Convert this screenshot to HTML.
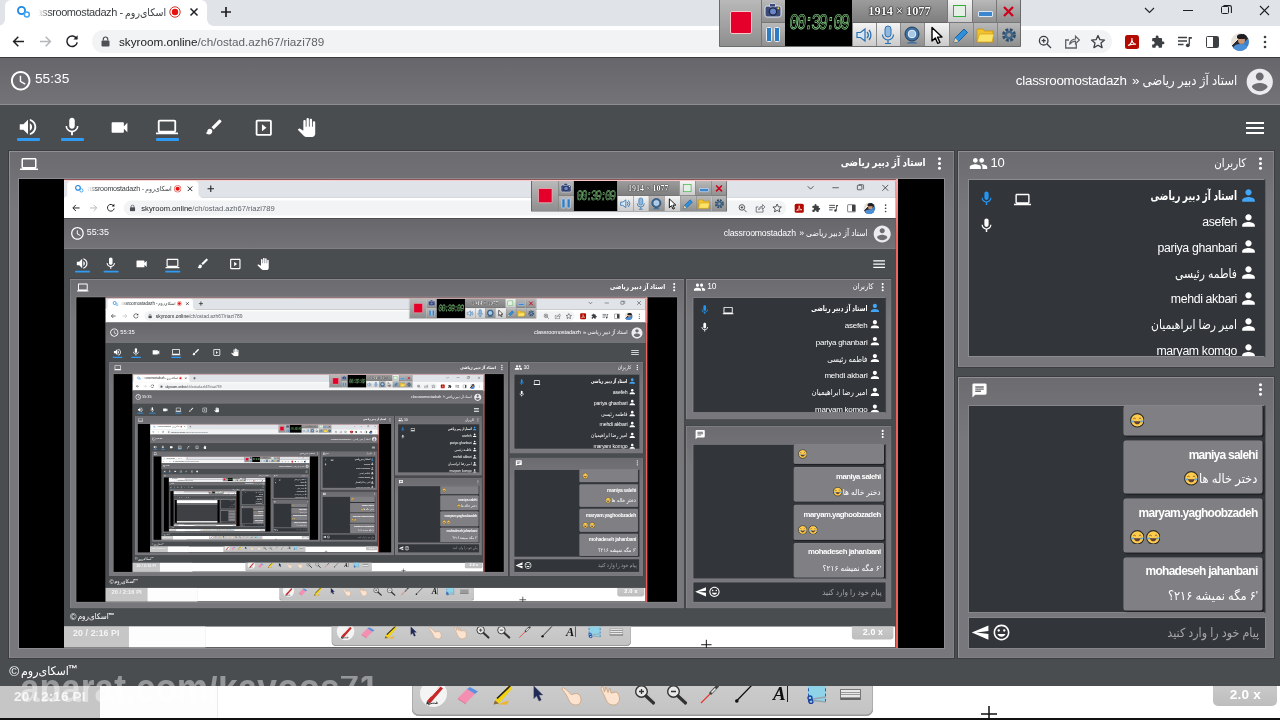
<!DOCTYPE html>
<html lang="fa"><head><meta charset="utf-8"><title>classroomostadazh - اسکای‌روم</title><style>
html,body{margin:0;padding:0;background:#4a4d50;overflow:hidden}
body{width:1280px;height:720px}
.f{position:relative;width:1280px;height:720px;overflow:hidden;background:#4a4d50;font-family:"Liberation Sans","DejaVu Sans",sans-serif}
.f{filter:blur(.3px)}
.n{filter:blur(.45px)}
.a{position:absolute;display:block}
.t{white-space:nowrap}
.fa{font-family:"Liberation Sans","DejaVu Sans",sans-serif}
</style></head><body><div class="f"><div class="a" style="left:0px;top:0px;width:1280px;height:26px;background:#e0e3e8"></div><div class="a" style="left:5px;top:0px;width:202px;height:27px;background:#fff;border-radius:6px 6px 0 0"></div><div class="a" style="left:-1px;top:20px;width:6px;height:6px;background:radial-gradient(circle at 0 0,rgba(255,255,255,0) 5.5px,#fff 6px)"></div><div class="a" style="left:207px;top:20px;width:6px;height:6px;background:radial-gradient(circle at 100% 0,rgba(255,255,255,0) 5.5px,#fff 6px)"></div><div class="a" style="left:0px;top:26px;width:1280px;height:31px;background:#fff"></div><div class="a" style="left:0px;top:57px;width:1280px;height:1.3px;background:#3a3a3e"></div><svg class="a" style="left:16px;top:5px" width="15" height="14" viewBox="0 0 15 14"><circle cx="5.5" cy="5.5" r="3.6" fill="none" stroke="#1e88e5" stroke-width="1.8"/><circle cx="10.8" cy="9.5" r="2.5" fill="#fff" stroke="#42a5f5" stroke-width="1.5"/></svg><div class="a" style="left:38px;top:2px;width:128px;height:20px;overflow:hidden"><div class="t" dir="ltr" style="position:absolute;right:-5px;top:0;line-height:20px;font-size:11px;color:#3c4043;white-space:nowrap;letter-spacing:-.42px">classroomostadazh - <span class="fa" style="display:inline-block;letter-spacing:0;font-size:10.5px;transform:scaleX(.9);transform-origin:left center">اسکای‌روم</span></div></div><div class="a" style="left:38px;top:2px;width:12px;height:20px;background:linear-gradient(90deg,#fff,rgba(255,255,255,0))"></div><svg class="a" style="left:169px;top:6px" width="12" height="12" viewBox="0 0 12 12"><circle cx="6" cy="6" r="5.2" fill="#fff" stroke="#d93025" stroke-width="1"/><circle cx="6" cy="6" r="3.2" fill="#e8110f"/></svg><svg class="a" style="left:189px;top:7px" width="10" height="10" viewBox="0 0 10 10"><path d="M1.5 1.5l7 7M8.5 1.5l-7 7" stroke="#202124" stroke-width="1.5" fill="none"/></svg><svg class="a" style="left:220px;top:6px" width="12" height="12" viewBox="0 0 12 12"><path d="M6 1v10M1 6h10" stroke="#202124" stroke-width="1.7" fill="none"/></svg><svg class="a" style="left:12px;top:35px" width="13" height="13" viewBox="0 0 13 13"><path d="M12 6.5H2M6.3 1.8L1.6 6.5l4.7 4.7" stroke="#202124" stroke-width="1.5" fill="none"/></svg><svg class="a" style="left:39px;top:35px" width="13" height="13" viewBox="0 0 13 13"><path d="M1 6.5h10M6.7 1.8l4.7 4.7-4.7 4.7" stroke="#b4b7bb" stroke-width="1.5" fill="none"/></svg><svg class="a" style="left:65px;top:34px" width="14" height="14" viewBox="0 0 14 14"><path d="M11.7 4.8A5.2 5.2 0 1 0 12.2 8.3" stroke="#202124" stroke-width="1.5" fill="none"/><path d="M12.6 1.2v4.2H8.4z" fill="#202124"/></svg><div class="a" style="left:92px;top:30px;width:1020px;height:23px;background:#f1f3f4;border-radius:12px"></div><svg class="a" style="left:101px;top:36px" width="9" height="11" viewBox="0 0 9 11"><rect x=".5" y="4.5" width="8" height="6" rx="1" fill="#4d5156"/><path d="M2.3 4.5V3.2a2.2 2.2 0 0 1 4.4 0v1.3" stroke="#4d5156" stroke-width="1.2" fill="none"/></svg><div class="a t" style="left:119px;top:31.5px;line-height:20px;font-size:11.7px;color:#5f6368;"><span style="color:#202124">skyroom.online</span>/ch/ostad.azh67/riazi789</div><svg class="a" style="left:1038px;top:35px" width="14" height="14" viewBox="0 0 14 14"><circle cx="5.7" cy="5.7" r="4.3" stroke="#3c4043" stroke-width="1.3" fill="none"/><path d="M9 9l4 4M3.7 5.7h4M5.7 3.7v4" stroke="#3c4043" stroke-width="1.3" fill="none"/></svg><svg class="a" style="left:1064px;top:34px" width="16" height="15" viewBox="0 0 16 15"><path d="M5 6H1.7v8h10.6V10" stroke="#5f6368" stroke-width="1.3" fill="none"/><path d="M5.5 10.5c.5-3.5 2.5-5.3 6-5.5V2.2L15.3 6l-3.8 3.8V7.2c-2.5 0-4.3 1-6 3.3z" stroke="#5f6368" stroke-width="1.2" fill="none"/></svg><svg class="a" style="left:1090px;top:34px" width="16" height="15" viewBox="0 0 16 15"><path d="M8 1.5l1.9 4.2 4.6.4-3.5 3 1.1 4.5L8 11.2l-4.1 2.4L5 9.1l-3.5-3 4.6-.4z" stroke="#3c4043" stroke-width="1.3" fill="none" stroke-linejoin="round"/></svg><div class="a" style="left:1125px;top:35px;width:14px;height:14px;background:#b30b00;border-radius:2.5px"><svg width="14" height="14" viewBox="0 0 14 14"><path d="M3 10.5c2.5-1 4.2-4 4-7.5-.6 3 1 6 4 6.3-2.5-.3-5.5.2-8 1.2z" stroke="#fff" stroke-width="1.1" fill="none"/></svg></div><svg class="a" style="left:1151px;top:35px" width="14" height="14" viewBox="0 0 24 24"><path fill="#3c4043" d="M20.5 11H19V7c0-1.1-.9-2-2-2h-4V3.5a2.5 2.5 0 0 0-5 0V5H4c-1.1 0-1.99.9-1.99 2v3.8H3.5c1.49 0 2.7 1.21 2.7 2.7s-1.21 2.7-2.7 2.7H2V20c0 1.1.9 2 2 2h3.8v-1.5c0-1.49 1.21-2.7 2.7-2.7 1.49 0 2.7 1.21 2.7 2.7V22H17c1.1 0 2-.9 2-2v-4h1.5a2.5 2.5 0 0 0 0-5z"/></svg><svg class="a" style="left:1177px;top:35px" width="15" height="14" viewBox="0 0 15 14"><path d="M1 2.5h9M1 6h9M1 9.5h5.5" stroke="#3c4043" stroke-width="1.4" fill="none"/><path d="M12.3 2v7.5" stroke="#3c4043" stroke-width="1.3"/><circle cx="10.8" cy="10.3" r="1.9" fill="#3c4043"/><path d="M12.3 2h2.5v1.8h-2.5z" fill="#3c4043"/></svg><div class="a" style="left:1205.5px;top:36px;width:13px;height:12px;border:1.5px solid #3c4043;border-radius:1.5px;box-sizing:border-box;background:linear-gradient(90deg,#fff 55%,#3c4043 55%)"></div><div class="a" style="left:1231px;top:33px;width:18px;height:18px;border-radius:50%;overflow:hidden;background:linear-gradient(135deg,#e8e4dc 0 38%,#2b2b33 38% 62%,#3f7fc8 62%)"><div style="position:absolute;left:6.5px;top:2.5px;width:7px;height:8px;border-radius:50%;background:#c99572"></div><div style="position:absolute;left:5.5px;top:1px;width:9px;height:5px;border-radius:50% 50% 30% 30%;background:#1d1d22"></div><div style="position:absolute;left:2px;top:11px;width:15px;height:9px;border-radius:50% 50% 0 0;background:#4a8fd6"></div></div><svg class="a" style="left:1263px;top:35px" width="4" height="14" viewBox="0 0 4 14"><circle cx="2" cy="2" r="1.3" fill="#3c4043"/><circle cx="2" cy="7" r="1.3" fill="#3c4043"/><circle cx="2" cy="12" r="1.3" fill="#3c4043"/></svg><svg class="a" style="left:1144px;top:7px" width="11" height="7" viewBox="0 0 11 7"><path d="M1 1l4.5 4.5L10 1" stroke="#202124" stroke-width="1.1" fill="none"/></svg><div class="a" style="left:1183px;top:10px;width:10px;height:1.2px;background:#202124"></div><div class="a" style="left:1221px;top:6px;width:8px;height:8px;border:1.1px solid #202124;border-radius:1.5px;box-sizing:border-box"></div><svg class="a" style="left:1222.5px;top:4.5px" width="9" height="9" viewBox="0 0 9 9"><path d="M.5.6h6.2a1.7 1.7 0 0 1 1.7 1.7V8" stroke="#202124" stroke-width="1.1" fill="none"/></svg><svg class="a" style="left:1259px;top:5px" width="11" height="11" viewBox="0 0 11 11"><path d="M1 1l9 9M10 1l-9 9" stroke="#202124" stroke-width="1.1" fill="none"/></svg><div class="a" style="left:0px;top:58px;width:1280px;height:46.5px;background:linear-gradient(#66666b,#737378)"></div><div class="a" style="left:0px;top:104px;width:1280px;height:1.2px;background:#8e8e92"></div><div class="a" style="left:0px;top:105px;width:1280px;height:581px;background:#4a4d50"></div><svg class="a" style="left:8.6px;top:68.6px" width="23.4" height="23.4" viewBox="0 0 24 24"><path fill="#fff" d="M11.99 2C6.47 2 2 6.48 2 12s4.47 10 9.99 10C17.52 22 22 17.52 22 12S17.52 2 11.99 2zM12 20c-4.42 0-8-3.58-8-8s3.58-8 8-8 8 3.58 8 8-3.58 8-8 8zm.5-13H11v6l5.25 3.15.75-1.23-4.5-2.67z"/></svg><div class="a t" style="left:35px;top:69.3px;line-height:20px;font-size:13.7px;color:#fff;letter-spacing:0">55:35</div><svg class="a" style="left:1244.15px;top:65.5px" width="31.5" height="31.5" viewBox="0 0 24 24"><path fill="#ececee" d="M12 2C6.48 2 2 6.48 2 12s4.48 10 10 10 10-4.48 10-10S17.52 2 12 2zm0 3c1.66 0 3 1.34 3 3s-1.34 3-3 3-3-1.34-3-3 1.34-3 3-3zm0 14.2c-2.5 0-4.71-1.28-6-3.22.03-1.99 4-3.08 6-3.08 1.99 0 5.97 1.09 6 3.08-1.29 1.94-3.5 3.22-6 3.22z"/></svg><div class="a t fa" dir="rtl" style="right:42.6px;top:70.8px;line-height:20px;font-size:13.4px;color:#fff;transform:scaleX(0.875);transform-origin:right center;">استاد آژ دبیر ریاضی</div><div class="a t" style="left:1132px;top:70.6px;line-height:20px;font-size:13.4px;color:#fff;">»</div><div class="a t" style="left:1015.8px;top:71px;line-height:20px;font-size:13.4px;color:#fff;letter-spacing:-.26px;">classroomostadazh</div><div class="a" style="left:-1px;top:20px;width:6px;height:6px;background:radial-gradient(circle at 0 0,rgba(255,255,255,0) 5.5px,#fff 6px)"></div><div class="a" style="left:207px;top:20px;width:6px;height:6px;background:radial-gradient(circle at 100% 0,rgba(255,255,255,0) 5.5px,#fff 6px)"></div><svg class="a" style="left:17px;top:116px" width="22" height="22" viewBox="0 0 24 24"><path fill="#fff" d="M3 9v6h4l5 5V4L7 9H3zm13.5 3c0-1.77-1.02-3.29-2.5-4.03v8.05c1.48-.73 2.5-2.25 2.5-4.02zM14 3.23v2.06c2.89.86 5 3.54 5 6.71s-2.11 5.85-5 6.71v2.06c4.01-.91 7-4.49 7-8.77s-2.99-7.86-7-8.77z"/></svg><svg class="a" style="left:61px;top:116px" width="22" height="22" viewBox="0 0 24 24"><path fill="#fff" d="M12 14c1.66 0 2.99-1.34 2.99-3L15 5c0-1.66-1.34-3-3-3S9 3.34 9 5v6c0 1.66 1.34 3 3 3zm5.3-3c0 3-2.54 5.1-5.3 5.1S6.7 14 6.7 11H5c0 3.41 2.72 6.23 6 6.72V21h2v-3.28c3.28-.48 6-3.3 6-6.72h-1.7z"/></svg><svg class="a" style="left:108.5px;top:116.5px" width="21" height="21" viewBox="0 0 24 24"><path fill="#fff" d="M17 10.5V7c0-.55-.45-1-1-1H4c-.55 0-1 .45-1 1v10c0 .55.45 1 1 1h12c.55 0 1-.45 1-1v-3.5l4 4v-11l-4 4z"/></svg><svg class="a" style="left:156px;top:116px" width="22" height="22" viewBox="0 0 24 24"><path fill="#fff" d="M20 18c1.1 0 1.99-.9 1.99-2L22 6c0-1.1-.9-2-2-2H4c-1.1 0-2 .9-2 2v10c0 1.1.9 2 2 2H0v2h24v-2h-4zM4 6h16v10H4V6z"/></svg><svg class="a" style="left:204px;top:117px" width="20" height="20" viewBox="0 0 24 24"><path fill="#fff" d="M7 14c-1.66 0-3 1.34-3 3 0 1.31-1.16 2-2 2 .92 1.22 2.49 2 4 2 2.21 0 4-1.79 4-4 0-1.66-1.34-3-3-3zm13.71-9.37l-1.34-1.34a.996.996 0 0 0-1.41 0L9 12.25 11.75 15l8.96-8.96a.996.996 0 0 0 0-1.41z"/></svg><svg class="a" style="left:252.55px;top:117.05px" width="21.5" height="21.5" viewBox="0 0 24 24"><path fill="#fff" d="M10 8v8l5-4-5-4zm9-5H5c-1.1 0-2 .9-2 2v14c0 1.1.9 2 2 2h14c1.1 0 2-.9 2-2V5c0-1.1-.9-2-2-2zm0 16H5V5h14v14z"/></svg><svg class="a" style="left:296.5px;top:117.8px" width="19" height="19" viewBox="0 0 24 24"><path fill="#fff" d="M23 5.5V20c0 2.2-1.8 4-4 4h-7.3c-1.08 0-2.1-.43-2.85-1.19L1 14.83s1.26-1.23 1.3-1.25c.22-.19.49-.29.79-.29.22 0 .42.06.6.16.04.01 4.31 2.46 4.31 2.46V4c0-.83.67-1.5 1.5-1.5S11 3.17 11 4v7h1V1.5c0-.83.67-1.5 1.5-1.5S15 .67 15 1.5V11h1V2.5c0-.83.67-1.5 1.5-1.5s1.5.67 1.5 1.5V11h1V5.5c0-.83.67-1.5 1.5-1.5s1.5.67 1.5 1.5z"/></svg><div class="a" style="left:17px;top:137.8px;width:22.5px;height:3.4px;background:#2f9bf4;border-radius:1px"></div><div class="a" style="left:61px;top:137.8px;width:22.5px;height:3.4px;background:#2f9bf4;border-radius:1px"></div><div class="a" style="left:156px;top:137.8px;width:22.5px;height:3.4px;background:#2f9bf4;border-radius:1px"></div><svg class="a" style="left:1243px;top:116px" width="24" height="24" viewBox="0 0 24 24"><path fill="#fff" d="M3 18h18v-2H3v2zm0-5h18v-2H3v2zm0-7v2h18V6H3z"/></svg><div class="a" style="left:9px;top:151px;width:945px;height:506.5px;background:linear-gradient(#6b6b70,#77777c 60px,#77777c);box-shadow:inset 1px 1px 0 #909094,inset -1px -1px 0 #808085,0 0 0 1px #3c3d40;box-sizing:border-box"></div><svg class="a" style="left:20px;top:154.5px" width="18" height="18" viewBox="0 0 24 24"><path fill="#fff" d="M20 18c1.1 0 1.99-.9 1.99-2L22 6c0-1.1-.9-2-2-2H4c-1.1 0-2 .9-2 2v10c0 1.1.9 2 2 2H0v2h24v-2h-4zM4 6h16v10H4V6z"/></svg><div class="a t fa" dir="rtl" style="right:354.4px;top:151.8px;line-height:20px;font-size:10.8px;color:#fff;transform:scaleX(0.82);transform-origin:right center;font-weight:bold;">استاد آژ دبیر ریاضی</div><svg class="a" style="left:930px;top:153.5px" width="19" height="19" viewBox="0 0 24 24"><path fill="#fff" d="M12 8c1.1 0 2-.9 2-2s-.9-2-2-2-2 .9-2 2 .9 2 2 2zm0 2c-1.1 0-2 .9-2 2s.9 2 2 2 2-.9 2-2-.9-2-2-2zm0 6c-1.1 0-2 .9-2 2s.9 2 2 2 2-.9 2-2-.9-2-2-2z"/></svg><div class="a" style="left:18px;top:178px;width:927px;height:471.3px;background:#8c8c90"></div><div class="a" style="left:19px;top:179px;width:925px;height:469.3px;background:#000;overflow:hidden"><div class="a" style="left:45px;top:0px;width:834px;height:470px;background:linear-gradient(#dee1e6 0 19.3px,#fff 19.3px 39.4px,#6d6d72 39.4px 70px,#4a4b4f 70px)"></div><div class="a" style="left:45px;top:2.4px;width:1280px;height:720px;transform:scale(0.6495);transform-origin:0 0"><div class="f n"><div class="a" style="left:0px;top:0px;width:1280px;height:26px;background:#e0e3e8"></div><div class="a" style="left:5px;top:0px;width:202px;height:27px;background:#fff;border-radius:6px 6px 0 0"></div><div class="a" style="left:-1px;top:20px;width:6px;height:6px;background:radial-gradient(circle at 0 0,rgba(255,255,255,0) 5.5px,#fff 6px)"></div><div class="a" style="left:207px;top:20px;width:6px;height:6px;background:radial-gradient(circle at 100% 0,rgba(255,255,255,0) 5.5px,#fff 6px)"></div><div class="a" style="left:0px;top:26px;width:1280px;height:31px;background:#fff"></div><div class="a" style="left:0px;top:57px;width:1280px;height:1.3px;background:#3a3a3e"></div><svg class="a" style="left:16px;top:5px" width="15" height="14" viewBox="0 0 15 14"><circle cx="5.5" cy="5.5" r="3.6" fill="none" stroke="#1e88e5" stroke-width="1.8"/><circle cx="10.8" cy="9.5" r="2.5" fill="#fff" stroke="#42a5f5" stroke-width="1.5"/></svg><div class="a" style="left:38px;top:2px;width:128px;height:20px;overflow:hidden"><div class="t" dir="ltr" style="position:absolute;right:-5px;top:0;line-height:20px;font-size:11px;color:#3c4043;white-space:nowrap;letter-spacing:-.42px">classroomostadazh - <span class="fa" style="display:inline-block;letter-spacing:0;font-size:10.5px;transform:scaleX(.9);transform-origin:left center">اسکای‌روم</span></div></div><div class="a" style="left:38px;top:2px;width:12px;height:20px;background:linear-gradient(90deg,#fff,rgba(255,255,255,0))"></div><svg class="a" style="left:169px;top:6px" width="12" height="12" viewBox="0 0 12 12"><circle cx="6" cy="6" r="5.2" fill="#fff" stroke="#d93025" stroke-width="1"/><circle cx="6" cy="6" r="3.2" fill="#e8110f"/></svg><svg class="a" style="left:189px;top:7px" width="10" height="10" viewBox="0 0 10 10"><path d="M1.5 1.5l7 7M8.5 1.5l-7 7" stroke="#202124" stroke-width="1.5" fill="none"/></svg><svg class="a" style="left:220px;top:6px" width="12" height="12" viewBox="0 0 12 12"><path d="M6 1v10M1 6h10" stroke="#202124" stroke-width="1.7" fill="none"/></svg><svg class="a" style="left:12px;top:35px" width="13" height="13" viewBox="0 0 13 13"><path d="M12 6.5H2M6.3 1.8L1.6 6.5l4.7 4.7" stroke="#202124" stroke-width="1.5" fill="none"/></svg><svg class="a" style="left:39px;top:35px" width="13" height="13" viewBox="0 0 13 13"><path d="M1 6.5h10M6.7 1.8l4.7 4.7-4.7 4.7" stroke="#b4b7bb" stroke-width="1.5" fill="none"/></svg><svg class="a" style="left:65px;top:34px" width="14" height="14" viewBox="0 0 14 14"><path d="M11.7 4.8A5.2 5.2 0 1 0 12.2 8.3" stroke="#202124" stroke-width="1.5" fill="none"/><path d="M12.6 1.2v4.2H8.4z" fill="#202124"/></svg><div class="a" style="left:92px;top:30px;width:1020px;height:23px;background:#f1f3f4;border-radius:12px"></div><svg class="a" style="left:101px;top:36px" width="9" height="11" viewBox="0 0 9 11"><rect x=".5" y="4.5" width="8" height="6" rx="1" fill="#4d5156"/><path d="M2.3 4.5V3.2a2.2 2.2 0 0 1 4.4 0v1.3" stroke="#4d5156" stroke-width="1.2" fill="none"/></svg><div class="a t" style="left:119px;top:31.5px;line-height:20px;font-size:11.7px;color:#5f6368;"><span style="color:#202124">skyroom.online</span>/ch/ostad.azh67/riazi789</div><svg class="a" style="left:1038px;top:35px" width="14" height="14" viewBox="0 0 14 14"><circle cx="5.7" cy="5.7" r="4.3" stroke="#3c4043" stroke-width="1.3" fill="none"/><path d="M9 9l4 4M3.7 5.7h4M5.7 3.7v4" stroke="#3c4043" stroke-width="1.3" fill="none"/></svg><svg class="a" style="left:1064px;top:34px" width="16" height="15" viewBox="0 0 16 15"><path d="M5 6H1.7v8h10.6V10" stroke="#5f6368" stroke-width="1.3" fill="none"/><path d="M5.5 10.5c.5-3.5 2.5-5.3 6-5.5V2.2L15.3 6l-3.8 3.8V7.2c-2.5 0-4.3 1-6 3.3z" stroke="#5f6368" stroke-width="1.2" fill="none"/></svg><svg class="a" style="left:1090px;top:34px" width="16" height="15" viewBox="0 0 16 15"><path d="M8 1.5l1.9 4.2 4.6.4-3.5 3 1.1 4.5L8 11.2l-4.1 2.4L5 9.1l-3.5-3 4.6-.4z" stroke="#3c4043" stroke-width="1.3" fill="none" stroke-linejoin="round"/></svg><div class="a" style="left:1125px;top:35px;width:14px;height:14px;background:#b30b00;border-radius:2.5px"><svg width="14" height="14" viewBox="0 0 14 14"><path d="M3 10.5c2.5-1 4.2-4 4-7.5-.6 3 1 6 4 6.3-2.5-.3-5.5.2-8 1.2z" stroke="#fff" stroke-width="1.1" fill="none"/></svg></div><svg class="a" style="left:1151px;top:35px" width="14" height="14" viewBox="0 0 24 24"><path fill="#3c4043" d="M20.5 11H19V7c0-1.1-.9-2-2-2h-4V3.5a2.5 2.5 0 0 0-5 0V5H4c-1.1 0-1.99.9-1.99 2v3.8H3.5c1.49 0 2.7 1.21 2.7 2.7s-1.21 2.7-2.7 2.7H2V20c0 1.1.9 2 2 2h3.8v-1.5c0-1.49 1.21-2.7 2.7-2.7 1.49 0 2.7 1.21 2.7 2.7V22H17c1.1 0 2-.9 2-2v-4h1.5a2.5 2.5 0 0 0 0-5z"/></svg><svg class="a" style="left:1177px;top:35px" width="15" height="14" viewBox="0 0 15 14"><path d="M1 2.5h9M1 6h9M1 9.5h5.5" stroke="#3c4043" stroke-width="1.4" fill="none"/><path d="M12.3 2v7.5" stroke="#3c4043" stroke-width="1.3"/><circle cx="10.8" cy="10.3" r="1.9" fill="#3c4043"/><path d="M12.3 2h2.5v1.8h-2.5z" fill="#3c4043"/></svg><div class="a" style="left:1205.5px;top:36px;width:13px;height:12px;border:1.5px solid #3c4043;border-radius:1.5px;box-sizing:border-box;background:linear-gradient(90deg,#fff 55%,#3c4043 55%)"></div><div class="a" style="left:1231px;top:33px;width:18px;height:18px;border-radius:50%;overflow:hidden;background:linear-gradient(135deg,#e8e4dc 0 38%,#2b2b33 38% 62%,#3f7fc8 62%)"><div style="position:absolute;left:6.5px;top:2.5px;width:7px;height:8px;border-radius:50%;background:#c99572"></div><div style="position:absolute;left:5.5px;top:1px;width:9px;height:5px;border-radius:50% 50% 30% 30%;background:#1d1d22"></div><div style="position:absolute;left:2px;top:11px;width:15px;height:9px;border-radius:50% 50% 0 0;background:#4a8fd6"></div></div><svg class="a" style="left:1263px;top:35px" width="4" height="14" viewBox="0 0 4 14"><circle cx="2" cy="2" r="1.3" fill="#3c4043"/><circle cx="2" cy="7" r="1.3" fill="#3c4043"/><circle cx="2" cy="12" r="1.3" fill="#3c4043"/></svg><svg class="a" style="left:1144px;top:7px" width="11" height="7" viewBox="0 0 11 7"><path d="M1 1l4.5 4.5L10 1" stroke="#202124" stroke-width="1.1" fill="none"/></svg><div class="a" style="left:1183px;top:10px;width:10px;height:1.2px;background:#202124"></div><div class="a" style="left:1221px;top:6px;width:8px;height:8px;border:1.1px solid #202124;border-radius:1.5px;box-sizing:border-box"></div><svg class="a" style="left:1222.5px;top:4.5px" width="9" height="9" viewBox="0 0 9 9"><path d="M.5.6h6.2a1.7 1.7 0 0 1 1.7 1.7V8" stroke="#202124" stroke-width="1.1" fill="none"/></svg><svg class="a" style="left:1259px;top:5px" width="11" height="11" viewBox="0 0 11 11"><path d="M1 1l9 9M10 1l-9 9" stroke="#202124" stroke-width="1.1" fill="none"/></svg><div class="a" style="left:0px;top:58px;width:1280px;height:46.5px;background:linear-gradient(#66666b,#737378)"></div><div class="a" style="left:0px;top:104px;width:1280px;height:1.2px;background:#8e8e92"></div><div class="a" style="left:0px;top:105px;width:1280px;height:581px;background:#4a4d50"></div><svg class="a" style="left:8.6px;top:68.6px" width="23.4" height="23.4" viewBox="0 0 24 24"><path fill="#fff" d="M11.99 2C6.47 2 2 6.48 2 12s4.47 10 9.99 10C17.52 22 22 17.52 22 12S17.52 2 11.99 2zM12 20c-4.42 0-8-3.58-8-8s3.58-8 8-8 8 3.58 8 8-3.58 8-8 8zm.5-13H11v6l5.25 3.15.75-1.23-4.5-2.67z"/></svg><div class="a t" style="left:35px;top:69.3px;line-height:20px;font-size:13.7px;color:#fff;letter-spacing:0">55:35</div><svg class="a" style="left:1244.15px;top:65.5px" width="31.5" height="31.5" viewBox="0 0 24 24"><path fill="#ececee" d="M12 2C6.48 2 2 6.48 2 12s4.48 10 10 10 10-4.48 10-10S17.52 2 12 2zm0 3c1.66 0 3 1.34 3 3s-1.34 3-3 3-3-1.34-3-3 1.34-3 3-3zm0 14.2c-2.5 0-4.71-1.28-6-3.22.03-1.99 4-3.08 6-3.08 1.99 0 5.97 1.09 6 3.08-1.29 1.94-3.5 3.22-6 3.22z"/></svg><div class="a t fa" dir="rtl" style="right:42.6px;top:70.8px;line-height:20px;font-size:13.4px;color:#fff;transform:scaleX(0.875);transform-origin:right center;">استاد آژ دبیر ریاضی</div><div class="a t" style="left:1132px;top:70.6px;line-height:20px;font-size:13.4px;color:#fff;">»</div><div class="a t" style="left:1015.8px;top:71px;line-height:20px;font-size:13.4px;color:#fff;letter-spacing:-.26px;">classroomostadazh</div><div class="a" style="left:-1px;top:20px;width:6px;height:6px;background:radial-gradient(circle at 0 0,rgba(255,255,255,0) 5.5px,#fff 6px)"></div><div class="a" style="left:207px;top:20px;width:6px;height:6px;background:radial-gradient(circle at 100% 0,rgba(255,255,255,0) 5.5px,#fff 6px)"></div><svg class="a" style="left:17px;top:116px" width="22" height="22" viewBox="0 0 24 24"><path fill="#fff" d="M3 9v6h4l5 5V4L7 9H3zm13.5 3c0-1.77-1.02-3.29-2.5-4.03v8.05c1.48-.73 2.5-2.25 2.5-4.02zM14 3.23v2.06c2.89.86 5 3.54 5 6.71s-2.11 5.85-5 6.71v2.06c4.01-.91 7-4.49 7-8.77s-2.99-7.86-7-8.77z"/></svg><svg class="a" style="left:61px;top:116px" width="22" height="22" viewBox="0 0 24 24"><path fill="#fff" d="M12 14c1.66 0 2.99-1.34 2.99-3L15 5c0-1.66-1.34-3-3-3S9 3.34 9 5v6c0 1.66 1.34 3 3 3zm5.3-3c0 3-2.54 5.1-5.3 5.1S6.7 14 6.7 11H5c0 3.41 2.72 6.23 6 6.72V21h2v-3.28c3.28-.48 6-3.3 6-6.72h-1.7z"/></svg><svg class="a" style="left:108.5px;top:116.5px" width="21" height="21" viewBox="0 0 24 24"><path fill="#fff" d="M17 10.5V7c0-.55-.45-1-1-1H4c-.55 0-1 .45-1 1v10c0 .55.45 1 1 1h12c.55 0 1-.45 1-1v-3.5l4 4v-11l-4 4z"/></svg><svg class="a" style="left:156px;top:116px" width="22" height="22" viewBox="0 0 24 24"><path fill="#fff" d="M20 18c1.1 0 1.99-.9 1.99-2L22 6c0-1.1-.9-2-2-2H4c-1.1 0-2 .9-2 2v10c0 1.1.9 2 2 2H0v2h24v-2h-4zM4 6h16v10H4V6z"/></svg><svg class="a" style="left:204px;top:117px" width="20" height="20" viewBox="0 0 24 24"><path fill="#fff" d="M7 14c-1.66 0-3 1.34-3 3 0 1.31-1.16 2-2 2 .92 1.22 2.49 2 4 2 2.21 0 4-1.79 4-4 0-1.66-1.34-3-3-3zm13.71-9.37l-1.34-1.34a.996.996 0 0 0-1.41 0L9 12.25 11.75 15l8.96-8.96a.996.996 0 0 0 0-1.41z"/></svg><svg class="a" style="left:252.55px;top:117.05px" width="21.5" height="21.5" viewBox="0 0 24 24"><path fill="#fff" d="M10 8v8l5-4-5-4zm9-5H5c-1.1 0-2 .9-2 2v14c0 1.1.9 2 2 2h14c1.1 0 2-.9 2-2V5c0-1.1-.9-2-2-2zm0 16H5V5h14v14z"/></svg><svg class="a" style="left:296.5px;top:117.8px" width="19" height="19" viewBox="0 0 24 24"><path fill="#fff" d="M23 5.5V20c0 2.2-1.8 4-4 4h-7.3c-1.08 0-2.1-.43-2.85-1.19L1 14.83s1.26-1.23 1.3-1.25c.22-.19.49-.29.79-.29.22 0 .42.06.6.16.04.01 4.31 2.46 4.31 2.46V4c0-.83.67-1.5 1.5-1.5S11 3.17 11 4v7h1V1.5c0-.83.67-1.5 1.5-1.5S15 .67 15 1.5V11h1V2.5c0-.83.67-1.5 1.5-1.5s1.5.67 1.5 1.5V11h1V5.5c0-.83.67-1.5 1.5-1.5s1.5.67 1.5 1.5z"/></svg><div class="a" style="left:17px;top:137.8px;width:22.5px;height:3.4px;background:#2f9bf4;border-radius:1px"></div><div class="a" style="left:61px;top:137.8px;width:22.5px;height:3.4px;background:#2f9bf4;border-radius:1px"></div><div class="a" style="left:156px;top:137.8px;width:22.5px;height:3.4px;background:#2f9bf4;border-radius:1px"></div><svg class="a" style="left:1243px;top:116px" width="24" height="24" viewBox="0 0 24 24"><path fill="#fff" d="M3 18h18v-2H3v2zm0-5h18v-2H3v2zm0-7v2h18V6H3z"/></svg><div class="a" style="left:9px;top:151px;width:945px;height:506.5px;background:linear-gradient(#6b6b70,#77777c 60px,#77777c);box-shadow:inset 1px 1px 0 #909094,inset -1px -1px 0 #808085,0 0 0 1px #3c3d40;box-sizing:border-box"></div><svg class="a" style="left:20px;top:154.5px" width="18" height="18" viewBox="0 0 24 24"><path fill="#fff" d="M20 18c1.1 0 1.99-.9 1.99-2L22 6c0-1.1-.9-2-2-2H4c-1.1 0-2 .9-2 2v10c0 1.1.9 2 2 2H0v2h24v-2h-4zM4 6h16v10H4V6z"/></svg><div class="a t fa" dir="rtl" style="right:354.4px;top:151.8px;line-height:20px;font-size:10.8px;color:#fff;transform:scaleX(0.82);transform-origin:right center;font-weight:bold;">استاد آژ دبیر ریاضی</div><svg class="a" style="left:930px;top:153.5px" width="19" height="19" viewBox="0 0 24 24"><path fill="#fff" d="M12 8c1.1 0 2-.9 2-2s-.9-2-2-2-2 .9-2 2 .9 2 2 2zm0 2c-1.1 0-2 .9-2 2s.9 2 2 2 2-.9 2-2-.9-2-2-2zm0 6c-1.1 0-2 .9-2 2s.9 2 2 2 2-.9 2-2-.9-2-2-2z"/></svg><div class="a" style="left:18px;top:178px;width:927px;height:471.3px;background:#8c8c90"></div><div class="a" style="left:19px;top:179px;width:925px;height:469.3px;background:#000;overflow:hidden"><div class="a" style="left:45px;top:0px;width:834px;height:470px;background:linear-gradient(#dee1e6 0 19.3px,#fff 19.3px 39.4px,#6d6d72 39.4px 70px,#4a4b4f 70px)"></div><div class="a" style="left:45px;top:2.4px;width:1280px;height:720px;transform:scale(0.6495);transform-origin:0 0"><div class="f n"><div class="a" style="left:0px;top:0px;width:1280px;height:26px;background:#e0e3e8"></div><div class="a" style="left:5px;top:0px;width:202px;height:27px;background:#fff;border-radius:6px 6px 0 0"></div><div class="a" style="left:-1px;top:20px;width:6px;height:6px;background:radial-gradient(circle at 0 0,rgba(255,255,255,0) 5.5px,#fff 6px)"></div><div class="a" style="left:207px;top:20px;width:6px;height:6px;background:radial-gradient(circle at 100% 0,rgba(255,255,255,0) 5.5px,#fff 6px)"></div><div class="a" style="left:0px;top:26px;width:1280px;height:31px;background:#fff"></div><div class="a" style="left:0px;top:57px;width:1280px;height:1.3px;background:#3a3a3e"></div><svg class="a" style="left:16px;top:5px" width="15" height="14" viewBox="0 0 15 14"><circle cx="5.5" cy="5.5" r="3.6" fill="none" stroke="#1e88e5" stroke-width="1.8"/><circle cx="10.8" cy="9.5" r="2.5" fill="#fff" stroke="#42a5f5" stroke-width="1.5"/></svg><div class="a" style="left:38px;top:2px;width:128px;height:20px;overflow:hidden"><div class="t" dir="ltr" style="position:absolute;right:-5px;top:0;line-height:20px;font-size:11px;color:#3c4043;white-space:nowrap;letter-spacing:-.42px">classroomostadazh - <span class="fa" style="display:inline-block;letter-spacing:0;font-size:10.5px;transform:scaleX(.9);transform-origin:left center">اسکای‌روم</span></div></div><div class="a" style="left:38px;top:2px;width:12px;height:20px;background:linear-gradient(90deg,#fff,rgba(255,255,255,0))"></div><svg class="a" style="left:169px;top:6px" width="12" height="12" viewBox="0 0 12 12"><circle cx="6" cy="6" r="5.2" fill="#fff" stroke="#d93025" stroke-width="1"/><circle cx="6" cy="6" r="3.2" fill="#e8110f"/></svg><svg class="a" style="left:189px;top:7px" width="10" height="10" viewBox="0 0 10 10"><path d="M1.5 1.5l7 7M8.5 1.5l-7 7" stroke="#202124" stroke-width="1.5" fill="none"/></svg><svg class="a" style="left:220px;top:6px" width="12" height="12" viewBox="0 0 12 12"><path d="M6 1v10M1 6h10" stroke="#202124" stroke-width="1.7" fill="none"/></svg><svg class="a" style="left:12px;top:35px" width="13" height="13" viewBox="0 0 13 13"><path d="M12 6.5H2M6.3 1.8L1.6 6.5l4.7 4.7" stroke="#202124" stroke-width="1.5" fill="none"/></svg><svg class="a" style="left:39px;top:35px" width="13" height="13" viewBox="0 0 13 13"><path d="M1 6.5h10M6.7 1.8l4.7 4.7-4.7 4.7" stroke="#b4b7bb" stroke-width="1.5" fill="none"/></svg><svg class="a" style="left:65px;top:34px" width="14" height="14" viewBox="0 0 14 14"><path d="M11.7 4.8A5.2 5.2 0 1 0 12.2 8.3" stroke="#202124" stroke-width="1.5" fill="none"/><path d="M12.6 1.2v4.2H8.4z" fill="#202124"/></svg><div class="a" style="left:92px;top:30px;width:1020px;height:23px;background:#f1f3f4;border-radius:12px"></div><svg class="a" style="left:101px;top:36px" width="9" height="11" viewBox="0 0 9 11"><rect x=".5" y="4.5" width="8" height="6" rx="1" fill="#4d5156"/><path d="M2.3 4.5V3.2a2.2 2.2 0 0 1 4.4 0v1.3" stroke="#4d5156" stroke-width="1.2" fill="none"/></svg><div class="a t" style="left:119px;top:31.5px;line-height:20px;font-size:11.7px;color:#5f6368;"><span style="color:#202124">skyroom.online</span>/ch/ostad.azh67/riazi789</div><svg class="a" style="left:1038px;top:35px" width="14" height="14" viewBox="0 0 14 14"><circle cx="5.7" cy="5.7" r="4.3" stroke="#3c4043" stroke-width="1.3" fill="none"/><path d="M9 9l4 4M3.7 5.7h4M5.7 3.7v4" stroke="#3c4043" stroke-width="1.3" fill="none"/></svg><svg class="a" style="left:1064px;top:34px" width="16" height="15" viewBox="0 0 16 15"><path d="M5 6H1.7v8h10.6V10" stroke="#5f6368" stroke-width="1.3" fill="none"/><path d="M5.5 10.5c.5-3.5 2.5-5.3 6-5.5V2.2L15.3 6l-3.8 3.8V7.2c-2.5 0-4.3 1-6 3.3z" stroke="#5f6368" stroke-width="1.2" fill="none"/></svg><svg class="a" style="left:1090px;top:34px" width="16" height="15" viewBox="0 0 16 15"><path d="M8 1.5l1.9 4.2 4.6.4-3.5 3 1.1 4.5L8 11.2l-4.1 2.4L5 9.1l-3.5-3 4.6-.4z" stroke="#3c4043" stroke-width="1.3" fill="none" stroke-linejoin="round"/></svg><div class="a" style="left:1125px;top:35px;width:14px;height:14px;background:#b30b00;border-radius:2.5px"><svg width="14" height="14" viewBox="0 0 14 14"><path d="M3 10.5c2.5-1 4.2-4 4-7.5-.6 3 1 6 4 6.3-2.5-.3-5.5.2-8 1.2z" stroke="#fff" stroke-width="1.1" fill="none"/></svg></div><svg class="a" style="left:1151px;top:35px" width="14" height="14" viewBox="0 0 24 24"><path fill="#3c4043" d="M20.5 11H19V7c0-1.1-.9-2-2-2h-4V3.5a2.5 2.5 0 0 0-5 0V5H4c-1.1 0-1.99.9-1.99 2v3.8H3.5c1.49 0 2.7 1.21 2.7 2.7s-1.21 2.7-2.7 2.7H2V20c0 1.1.9 2 2 2h3.8v-1.5c0-1.49 1.21-2.7 2.7-2.7 1.49 0 2.7 1.21 2.7 2.7V22H17c1.1 0 2-.9 2-2v-4h1.5a2.5 2.5 0 0 0 0-5z"/></svg><svg class="a" style="left:1177px;top:35px" width="15" height="14" viewBox="0 0 15 14"><path d="M1 2.5h9M1 6h9M1 9.5h5.5" stroke="#3c4043" stroke-width="1.4" fill="none"/><path d="M12.3 2v7.5" stroke="#3c4043" stroke-width="1.3"/><circle cx="10.8" cy="10.3" r="1.9" fill="#3c4043"/><path d="M12.3 2h2.5v1.8h-2.5z" fill="#3c4043"/></svg><div class="a" style="left:1205.5px;top:36px;width:13px;height:12px;border:1.5px solid #3c4043;border-radius:1.5px;box-sizing:border-box;background:linear-gradient(90deg,#fff 55%,#3c4043 55%)"></div><div class="a" style="left:1231px;top:33px;width:18px;height:18px;border-radius:50%;overflow:hidden;background:linear-gradient(135deg,#e8e4dc 0 38%,#2b2b33 38% 62%,#3f7fc8 62%)"><div style="position:absolute;left:6.5px;top:2.5px;width:7px;height:8px;border-radius:50%;background:#c99572"></div><div style="position:absolute;left:5.5px;top:1px;width:9px;height:5px;border-radius:50% 50% 30% 30%;background:#1d1d22"></div><div style="position:absolute;left:2px;top:11px;width:15px;height:9px;border-radius:50% 50% 0 0;background:#4a8fd6"></div></div><svg class="a" style="left:1263px;top:35px" width="4" height="14" viewBox="0 0 4 14"><circle cx="2" cy="2" r="1.3" fill="#3c4043"/><circle cx="2" cy="7" r="1.3" fill="#3c4043"/><circle cx="2" cy="12" r="1.3" fill="#3c4043"/></svg><svg class="a" style="left:1144px;top:7px" width="11" height="7" viewBox="0 0 11 7"><path d="M1 1l4.5 4.5L10 1" stroke="#202124" stroke-width="1.1" fill="none"/></svg><div class="a" style="left:1183px;top:10px;width:10px;height:1.2px;background:#202124"></div><div class="a" style="left:1221px;top:6px;width:8px;height:8px;border:1.1px solid #202124;border-radius:1.5px;box-sizing:border-box"></div><svg class="a" style="left:1222.5px;top:4.5px" width="9" height="9" viewBox="0 0 9 9"><path d="M.5.6h6.2a1.7 1.7 0 0 1 1.7 1.7V8" stroke="#202124" stroke-width="1.1" fill="none"/></svg><svg class="a" style="left:1259px;top:5px" width="11" height="11" viewBox="0 0 11 11"><path d="M1 1l9 9M10 1l-9 9" stroke="#202124" stroke-width="1.1" fill="none"/></svg><div class="a" style="left:0px;top:58px;width:1280px;height:46.5px;background:linear-gradient(#66666b,#737378)"></div><div class="a" style="left:0px;top:104px;width:1280px;height:1.2px;background:#8e8e92"></div><div class="a" style="left:0px;top:105px;width:1280px;height:581px;background:#4a4d50"></div><svg class="a" style="left:8.6px;top:68.6px" width="23.4" height="23.4" viewBox="0 0 24 24"><path fill="#fff" d="M11.99 2C6.47 2 2 6.48 2 12s4.47 10 9.99 10C17.52 22 22 17.52 22 12S17.52 2 11.99 2zM12 20c-4.42 0-8-3.58-8-8s3.58-8 8-8 8 3.58 8 8-3.58 8-8 8zm.5-13H11v6l5.25 3.15.75-1.23-4.5-2.67z"/></svg><div class="a t" style="left:35px;top:69.3px;line-height:20px;font-size:13.7px;color:#fff;letter-spacing:0">55:35</div><svg class="a" style="left:1244.15px;top:65.5px" width="31.5" height="31.5" viewBox="0 0 24 24"><path fill="#ececee" d="M12 2C6.48 2 2 6.48 2 12s4.48 10 10 10 10-4.48 10-10S17.52 2 12 2zm0 3c1.66 0 3 1.34 3 3s-1.34 3-3 3-3-1.34-3-3 1.34-3 3-3zm0 14.2c-2.5 0-4.71-1.28-6-3.22.03-1.99 4-3.08 6-3.08 1.99 0 5.97 1.09 6 3.08-1.29 1.94-3.5 3.22-6 3.22z"/></svg><div class="a t fa" dir="rtl" style="right:42.6px;top:70.8px;line-height:20px;font-size:13.4px;color:#fff;transform:scaleX(0.875);transform-origin:right center;">استاد آژ دبیر ریاضی</div><div class="a t" style="left:1132px;top:70.6px;line-height:20px;font-size:13.4px;color:#fff;">»</div><div class="a t" style="left:1015.8px;top:71px;line-height:20px;font-size:13.4px;color:#fff;letter-spacing:-.26px;">classroomostadazh</div><div class="a" style="left:-1px;top:20px;width:6px;height:6px;background:radial-gradient(circle at 0 0,rgba(255,255,255,0) 5.5px,#fff 6px)"></div><div class="a" style="left:207px;top:20px;width:6px;height:6px;background:radial-gradient(circle at 100% 0,rgba(255,255,255,0) 5.5px,#fff 6px)"></div><svg class="a" style="left:17px;top:116px" width="22" height="22" viewBox="0 0 24 24"><path fill="#fff" d="M3 9v6h4l5 5V4L7 9H3zm13.5 3c0-1.77-1.02-3.29-2.5-4.03v8.05c1.48-.73 2.5-2.25 2.5-4.02zM14 3.23v2.06c2.89.86 5 3.54 5 6.71s-2.11 5.85-5 6.71v2.06c4.01-.91 7-4.49 7-8.77s-2.99-7.86-7-8.77z"/></svg><svg class="a" style="left:61px;top:116px" width="22" height="22" viewBox="0 0 24 24"><path fill="#fff" d="M12 14c1.66 0 2.99-1.34 2.99-3L15 5c0-1.66-1.34-3-3-3S9 3.34 9 5v6c0 1.66 1.34 3 3 3zm5.3-3c0 3-2.54 5.1-5.3 5.1S6.7 14 6.7 11H5c0 3.41 2.72 6.23 6 6.72V21h2v-3.28c3.28-.48 6-3.3 6-6.72h-1.7z"/></svg><svg class="a" style="left:108.5px;top:116.5px" width="21" height="21" viewBox="0 0 24 24"><path fill="#fff" d="M17 10.5V7c0-.55-.45-1-1-1H4c-.55 0-1 .45-1 1v10c0 .55.45 1 1 1h12c.55 0 1-.45 1-1v-3.5l4 4v-11l-4 4z"/></svg><svg class="a" style="left:156px;top:116px" width="22" height="22" viewBox="0 0 24 24"><path fill="#fff" d="M20 18c1.1 0 1.99-.9 1.99-2L22 6c0-1.1-.9-2-2-2H4c-1.1 0-2 .9-2 2v10c0 1.1.9 2 2 2H0v2h24v-2h-4zM4 6h16v10H4V6z"/></svg><svg class="a" style="left:204px;top:117px" width="20" height="20" viewBox="0 0 24 24"><path fill="#fff" d="M7 14c-1.66 0-3 1.34-3 3 0 1.31-1.16 2-2 2 .92 1.22 2.49 2 4 2 2.21 0 4-1.79 4-4 0-1.66-1.34-3-3-3zm13.71-9.37l-1.34-1.34a.996.996 0 0 0-1.41 0L9 12.25 11.75 15l8.96-8.96a.996.996 0 0 0 0-1.41z"/></svg><svg class="a" style="left:252.55px;top:117.05px" width="21.5" height="21.5" viewBox="0 0 24 24"><path fill="#fff" d="M10 8v8l5-4-5-4zm9-5H5c-1.1 0-2 .9-2 2v14c0 1.1.9 2 2 2h14c1.1 0 2-.9 2-2V5c0-1.1-.9-2-2-2zm0 16H5V5h14v14z"/></svg><svg class="a" style="left:296.5px;top:117.8px" width="19" height="19" viewBox="0 0 24 24"><path fill="#fff" d="M23 5.5V20c0 2.2-1.8 4-4 4h-7.3c-1.08 0-2.1-.43-2.85-1.19L1 14.83s1.26-1.23 1.3-1.25c.22-.19.49-.29.79-.29.22 0 .42.06.6.16.04.01 4.31 2.46 4.31 2.46V4c0-.83.67-1.5 1.5-1.5S11 3.17 11 4v7h1V1.5c0-.83.67-1.5 1.5-1.5S15 .67 15 1.5V11h1V2.5c0-.83.67-1.5 1.5-1.5s1.5.67 1.5 1.5V11h1V5.5c0-.83.67-1.5 1.5-1.5s1.5.67 1.5 1.5z"/></svg><div class="a" style="left:17px;top:137.8px;width:22.5px;height:3.4px;background:#2f9bf4;border-radius:1px"></div><div class="a" style="left:61px;top:137.8px;width:22.5px;height:3.4px;background:#2f9bf4;border-radius:1px"></div><div class="a" style="left:156px;top:137.8px;width:22.5px;height:3.4px;background:#2f9bf4;border-radius:1px"></div><svg class="a" style="left:1243px;top:116px" width="24" height="24" viewBox="0 0 24 24"><path fill="#fff" d="M3 18h18v-2H3v2zm0-5h18v-2H3v2zm0-7v2h18V6H3z"/></svg><div class="a" style="left:9px;top:151px;width:945px;height:506.5px;background:linear-gradient(#6b6b70,#77777c 60px,#77777c);box-shadow:inset 1px 1px 0 #909094,inset -1px -1px 0 #808085,0 0 0 1px #3c3d40;box-sizing:border-box"></div><svg class="a" style="left:20px;top:154.5px" width="18" height="18" viewBox="0 0 24 24"><path fill="#fff" d="M20 18c1.1 0 1.99-.9 1.99-2L22 6c0-1.1-.9-2-2-2H4c-1.1 0-2 .9-2 2v10c0 1.1.9 2 2 2H0v2h24v-2h-4zM4 6h16v10H4V6z"/></svg><div class="a t fa" dir="rtl" style="right:354.4px;top:151.8px;line-height:20px;font-size:10.8px;color:#fff;transform:scaleX(0.82);transform-origin:right center;font-weight:bold;">استاد آژ دبیر ریاضی</div><svg class="a" style="left:930px;top:153.5px" width="19" height="19" viewBox="0 0 24 24"><path fill="#fff" d="M12 8c1.1 0 2-.9 2-2s-.9-2-2-2-2 .9-2 2 .9 2 2 2zm0 2c-1.1 0-2 .9-2 2s.9 2 2 2 2-.9 2-2-.9-2-2-2zm0 6c-1.1 0-2 .9-2 2s.9 2 2 2 2-.9 2-2-.9-2-2-2z"/></svg><div class="a" style="left:18px;top:178px;width:927px;height:471.3px;background:#8c8c90"></div><div class="a" style="left:19px;top:179px;width:925px;height:469.3px;background:#000;overflow:hidden"><div class="a" style="left:45px;top:0px;width:834px;height:470px;background:linear-gradient(#dee1e6 0 19.3px,#fff 19.3px 39.4px,#6d6d72 39.4px 70px,#4a4b4f 70px)"></div><div class="a" style="left:45px;top:2.4px;width:1280px;height:720px;transform:scale(0.6495);transform-origin:0 0"><div class="f n"><div class="a" style="left:0px;top:0px;width:1280px;height:26px;background:#e0e3e8"></div><div class="a" style="left:5px;top:0px;width:202px;height:27px;background:#fff;border-radius:6px 6px 0 0"></div><div class="a" style="left:-1px;top:20px;width:6px;height:6px;background:radial-gradient(circle at 0 0,rgba(255,255,255,0) 5.5px,#fff 6px)"></div><div class="a" style="left:207px;top:20px;width:6px;height:6px;background:radial-gradient(circle at 100% 0,rgba(255,255,255,0) 5.5px,#fff 6px)"></div><div class="a" style="left:0px;top:26px;width:1280px;height:31px;background:#fff"></div><div class="a" style="left:0px;top:57px;width:1280px;height:1.3px;background:#3a3a3e"></div><svg class="a" style="left:16px;top:5px" width="15" height="14" viewBox="0 0 15 14"><circle cx="5.5" cy="5.5" r="3.6" fill="none" stroke="#1e88e5" stroke-width="1.8"/><circle cx="10.8" cy="9.5" r="2.5" fill="#fff" stroke="#42a5f5" stroke-width="1.5"/></svg><div class="a" style="left:38px;top:2px;width:128px;height:20px;overflow:hidden"><div class="t" dir="ltr" style="position:absolute;right:-5px;top:0;line-height:20px;font-size:11px;color:#3c4043;white-space:nowrap;letter-spacing:-.42px">classroomostadazh - <span class="fa" style="display:inline-block;letter-spacing:0;font-size:10.5px;transform:scaleX(.9);transform-origin:left center">اسکای‌روم</span></div></div><div class="a" style="left:38px;top:2px;width:12px;height:20px;background:linear-gradient(90deg,#fff,rgba(255,255,255,0))"></div><svg class="a" style="left:169px;top:6px" width="12" height="12" viewBox="0 0 12 12"><circle cx="6" cy="6" r="5.2" fill="#fff" stroke="#d93025" stroke-width="1"/><circle cx="6" cy="6" r="3.2" fill="#e8110f"/></svg><svg class="a" style="left:189px;top:7px" width="10" height="10" viewBox="0 0 10 10"><path d="M1.5 1.5l7 7M8.5 1.5l-7 7" stroke="#202124" stroke-width="1.5" fill="none"/></svg><svg class="a" style="left:220px;top:6px" width="12" height="12" viewBox="0 0 12 12"><path d="M6 1v10M1 6h10" stroke="#202124" stroke-width="1.7" fill="none"/></svg><svg class="a" style="left:12px;top:35px" width="13" height="13" viewBox="0 0 13 13"><path d="M12 6.5H2M6.3 1.8L1.6 6.5l4.7 4.7" stroke="#202124" stroke-width="1.5" fill="none"/></svg><svg class="a" style="left:39px;top:35px" width="13" height="13" viewBox="0 0 13 13"><path d="M1 6.5h10M6.7 1.8l4.7 4.7-4.7 4.7" stroke="#b4b7bb" stroke-width="1.5" fill="none"/></svg><svg class="a" style="left:65px;top:34px" width="14" height="14" viewBox="0 0 14 14"><path d="M11.7 4.8A5.2 5.2 0 1 0 12.2 8.3" stroke="#202124" stroke-width="1.5" fill="none"/><path d="M12.6 1.2v4.2H8.4z" fill="#202124"/></svg><div class="a" style="left:92px;top:30px;width:1020px;height:23px;background:#f1f3f4;border-radius:12px"></div><svg class="a" style="left:101px;top:36px" width="9" height="11" viewBox="0 0 9 11"><rect x=".5" y="4.5" width="8" height="6" rx="1" fill="#4d5156"/><path d="M2.3 4.5V3.2a2.2 2.2 0 0 1 4.4 0v1.3" stroke="#4d5156" stroke-width="1.2" fill="none"/></svg><div class="a t" style="left:119px;top:31.5px;line-height:20px;font-size:11.7px;color:#5f6368;"><span style="color:#202124">skyroom.online</span>/ch/ostad.azh67/riazi789</div><svg class="a" style="left:1038px;top:35px" width="14" height="14" viewBox="0 0 14 14"><circle cx="5.7" cy="5.7" r="4.3" stroke="#3c4043" stroke-width="1.3" fill="none"/><path d="M9 9l4 4M3.7 5.7h4M5.7 3.7v4" stroke="#3c4043" stroke-width="1.3" fill="none"/></svg><svg class="a" style="left:1064px;top:34px" width="16" height="15" viewBox="0 0 16 15"><path d="M5 6H1.7v8h10.6V10" stroke="#5f6368" stroke-width="1.3" fill="none"/><path d="M5.5 10.5c.5-3.5 2.5-5.3 6-5.5V2.2L15.3 6l-3.8 3.8V7.2c-2.5 0-4.3 1-6 3.3z" stroke="#5f6368" stroke-width="1.2" fill="none"/></svg><svg class="a" style="left:1090px;top:34px" width="16" height="15" viewBox="0 0 16 15"><path d="M8 1.5l1.9 4.2 4.6.4-3.5 3 1.1 4.5L8 11.2l-4.1 2.4L5 9.1l-3.5-3 4.6-.4z" stroke="#3c4043" stroke-width="1.3" fill="none" stroke-linejoin="round"/></svg><div class="a" style="left:1125px;top:35px;width:14px;height:14px;background:#b30b00;border-radius:2.5px"><svg width="14" height="14" viewBox="0 0 14 14"><path d="M3 10.5c2.5-1 4.2-4 4-7.5-.6 3 1 6 4 6.3-2.5-.3-5.5.2-8 1.2z" stroke="#fff" stroke-width="1.1" fill="none"/></svg></div><svg class="a" style="left:1151px;top:35px" width="14" height="14" viewBox="0 0 24 24"><path fill="#3c4043" d="M20.5 11H19V7c0-1.1-.9-2-2-2h-4V3.5a2.5 2.5 0 0 0-5 0V5H4c-1.1 0-1.99.9-1.99 2v3.8H3.5c1.49 0 2.7 1.21 2.7 2.7s-1.21 2.7-2.7 2.7H2V20c0 1.1.9 2 2 2h3.8v-1.5c0-1.49 1.21-2.7 2.7-2.7 1.49 0 2.7 1.21 2.7 2.7V22H17c1.1 0 2-.9 2-2v-4h1.5a2.5 2.5 0 0 0 0-5z"/></svg><svg class="a" style="left:1177px;top:35px" width="15" height="14" viewBox="0 0 15 14"><path d="M1 2.5h9M1 6h9M1 9.5h5.5" stroke="#3c4043" stroke-width="1.4" fill="none"/><path d="M12.3 2v7.5" stroke="#3c4043" stroke-width="1.3"/><circle cx="10.8" cy="10.3" r="1.9" fill="#3c4043"/><path d="M12.3 2h2.5v1.8h-2.5z" fill="#3c4043"/></svg><div class="a" style="left:1205.5px;top:36px;width:13px;height:12px;border:1.5px solid #3c4043;border-radius:1.5px;box-sizing:border-box;background:linear-gradient(90deg,#fff 55%,#3c4043 55%)"></div><div class="a" style="left:1231px;top:33px;width:18px;height:18px;border-radius:50%;overflow:hidden;background:linear-gradient(135deg,#e8e4dc 0 38%,#2b2b33 38% 62%,#3f7fc8 62%)"><div style="position:absolute;left:6.5px;top:2.5px;width:7px;height:8px;border-radius:50%;background:#c99572"></div><div style="position:absolute;left:5.5px;top:1px;width:9px;height:5px;border-radius:50% 50% 30% 30%;background:#1d1d22"></div><div style="position:absolute;left:2px;top:11px;width:15px;height:9px;border-radius:50% 50% 0 0;background:#4a8fd6"></div></div><svg class="a" style="left:1263px;top:35px" width="4" height="14" viewBox="0 0 4 14"><circle cx="2" cy="2" r="1.3" fill="#3c4043"/><circle cx="2" cy="7" r="1.3" fill="#3c4043"/><circle cx="2" cy="12" r="1.3" fill="#3c4043"/></svg><svg class="a" style="left:1144px;top:7px" width="11" height="7" viewBox="0 0 11 7"><path d="M1 1l4.5 4.5L10 1" stroke="#202124" stroke-width="1.1" fill="none"/></svg><div class="a" style="left:1183px;top:10px;width:10px;height:1.2px;background:#202124"></div><div class="a" style="left:1221px;top:6px;width:8px;height:8px;border:1.1px solid #202124;border-radius:1.5px;box-sizing:border-box"></div><svg class="a" style="left:1222.5px;top:4.5px" width="9" height="9" viewBox="0 0 9 9"><path d="M.5.6h6.2a1.7 1.7 0 0 1 1.7 1.7V8" stroke="#202124" stroke-width="1.1" fill="none"/></svg><svg class="a" style="left:1259px;top:5px" width="11" height="11" viewBox="0 0 11 11"><path d="M1 1l9 9M10 1l-9 9" stroke="#202124" stroke-width="1.1" fill="none"/></svg><div class="a" style="left:0px;top:58px;width:1280px;height:46.5px;background:linear-gradient(#66666b,#737378)"></div><div class="a" style="left:0px;top:104px;width:1280px;height:1.2px;background:#8e8e92"></div><div class="a" style="left:0px;top:105px;width:1280px;height:581px;background:#4a4d50"></div><svg class="a" style="left:8.6px;top:68.6px" width="23.4" height="23.4" viewBox="0 0 24 24"><path fill="#fff" d="M11.99 2C6.47 2 2 6.48 2 12s4.47 10 9.99 10C17.52 22 22 17.52 22 12S17.52 2 11.99 2zM12 20c-4.42 0-8-3.58-8-8s3.58-8 8-8 8 3.58 8 8-3.58 8-8 8zm.5-13H11v6l5.25 3.15.75-1.23-4.5-2.67z"/></svg><div class="a t" style="left:35px;top:69.3px;line-height:20px;font-size:13.7px;color:#fff;letter-spacing:0">55:35</div><svg class="a" style="left:1244.15px;top:65.5px" width="31.5" height="31.5" viewBox="0 0 24 24"><path fill="#ececee" d="M12 2C6.48 2 2 6.48 2 12s4.48 10 10 10 10-4.48 10-10S17.52 2 12 2zm0 3c1.66 0 3 1.34 3 3s-1.34 3-3 3-3-1.34-3-3 1.34-3 3-3zm0 14.2c-2.5 0-4.71-1.28-6-3.22.03-1.99 4-3.08 6-3.08 1.99 0 5.97 1.09 6 3.08-1.29 1.94-3.5 3.22-6 3.22z"/></svg><div class="a t fa" dir="rtl" style="right:42.6px;top:70.8px;line-height:20px;font-size:13.4px;color:#fff;transform:scaleX(0.875);transform-origin:right center;">استاد آژ دبیر ریاضی</div><div class="a t" style="left:1132px;top:70.6px;line-height:20px;font-size:13.4px;color:#fff;">»</div><div class="a t" style="left:1015.8px;top:71px;line-height:20px;font-size:13.4px;color:#fff;letter-spacing:-.26px;">classroomostadazh</div><div class="a" style="left:-1px;top:20px;width:6px;height:6px;background:radial-gradient(circle at 0 0,rgba(255,255,255,0) 5.5px,#fff 6px)"></div><div class="a" style="left:207px;top:20px;width:6px;height:6px;background:radial-gradient(circle at 100% 0,rgba(255,255,255,0) 5.5px,#fff 6px)"></div><svg class="a" style="left:17px;top:116px" width="22" height="22" viewBox="0 0 24 24"><path fill="#fff" d="M3 9v6h4l5 5V4L7 9H3zm13.5 3c0-1.77-1.02-3.29-2.5-4.03v8.05c1.48-.73 2.5-2.25 2.5-4.02zM14 3.23v2.06c2.89.86 5 3.54 5 6.71s-2.11 5.85-5 6.71v2.06c4.01-.91 7-4.49 7-8.77s-2.99-7.86-7-8.77z"/></svg><svg class="a" style="left:61px;top:116px" width="22" height="22" viewBox="0 0 24 24"><path fill="#fff" d="M12 14c1.66 0 2.99-1.34 2.99-3L15 5c0-1.66-1.34-3-3-3S9 3.34 9 5v6c0 1.66 1.34 3 3 3zm5.3-3c0 3-2.54 5.1-5.3 5.1S6.7 14 6.7 11H5c0 3.41 2.72 6.23 6 6.72V21h2v-3.28c3.28-.48 6-3.3 6-6.72h-1.7z"/></svg><svg class="a" style="left:108.5px;top:116.5px" width="21" height="21" viewBox="0 0 24 24"><path fill="#fff" d="M17 10.5V7c0-.55-.45-1-1-1H4c-.55 0-1 .45-1 1v10c0 .55.45 1 1 1h12c.55 0 1-.45 1-1v-3.5l4 4v-11l-4 4z"/></svg><svg class="a" style="left:156px;top:116px" width="22" height="22" viewBox="0 0 24 24"><path fill="#fff" d="M20 18c1.1 0 1.99-.9 1.99-2L22 6c0-1.1-.9-2-2-2H4c-1.1 0-2 .9-2 2v10c0 1.1.9 2 2 2H0v2h24v-2h-4zM4 6h16v10H4V6z"/></svg><svg class="a" style="left:204px;top:117px" width="20" height="20" viewBox="0 0 24 24"><path fill="#fff" d="M7 14c-1.66 0-3 1.34-3 3 0 1.31-1.16 2-2 2 .92 1.22 2.49 2 4 2 2.21 0 4-1.79 4-4 0-1.66-1.34-3-3-3zm13.71-9.37l-1.34-1.34a.996.996 0 0 0-1.41 0L9 12.25 11.75 15l8.96-8.96a.996.996 0 0 0 0-1.41z"/></svg><svg class="a" style="left:252.55px;top:117.05px" width="21.5" height="21.5" viewBox="0 0 24 24"><path fill="#fff" d="M10 8v8l5-4-5-4zm9-5H5c-1.1 0-2 .9-2 2v14c0 1.1.9 2 2 2h14c1.1 0 2-.9 2-2V5c0-1.1-.9-2-2-2zm0 16H5V5h14v14z"/></svg><svg class="a" style="left:296.5px;top:117.8px" width="19" height="19" viewBox="0 0 24 24"><path fill="#fff" d="M23 5.5V20c0 2.2-1.8 4-4 4h-7.3c-1.08 0-2.1-.43-2.85-1.19L1 14.83s1.26-1.23 1.3-1.25c.22-.19.49-.29.79-.29.22 0 .42.06.6.16.04.01 4.31 2.46 4.31 2.46V4c0-.83.67-1.5 1.5-1.5S11 3.17 11 4v7h1V1.5c0-.83.67-1.5 1.5-1.5S15 .67 15 1.5V11h1V2.5c0-.83.67-1.5 1.5-1.5s1.5.67 1.5 1.5V11h1V5.5c0-.83.67-1.5 1.5-1.5s1.5.67 1.5 1.5z"/></svg><div class="a" style="left:17px;top:137.8px;width:22.5px;height:3.4px;background:#2f9bf4;border-radius:1px"></div><div class="a" style="left:61px;top:137.8px;width:22.5px;height:3.4px;background:#2f9bf4;border-radius:1px"></div><div class="a" style="left:156px;top:137.8px;width:22.5px;height:3.4px;background:#2f9bf4;border-radius:1px"></div><svg class="a" style="left:1243px;top:116px" width="24" height="24" viewBox="0 0 24 24"><path fill="#fff" d="M3 18h18v-2H3v2zm0-5h18v-2H3v2zm0-7v2h18V6H3z"/></svg><div class="a" style="left:9px;top:151px;width:945px;height:506.5px;background:linear-gradient(#6b6b70,#77777c 60px,#77777c);box-shadow:inset 1px 1px 0 #909094,inset -1px -1px 0 #808085,0 0 0 1px #3c3d40;box-sizing:border-box"></div><svg class="a" style="left:20px;top:154.5px" width="18" height="18" viewBox="0 0 24 24"><path fill="#fff" d="M20 18c1.1 0 1.99-.9 1.99-2L22 6c0-1.1-.9-2-2-2H4c-1.1 0-2 .9-2 2v10c0 1.1.9 2 2 2H0v2h24v-2h-4zM4 6h16v10H4V6z"/></svg><div class="a t fa" dir="rtl" style="right:354.4px;top:151.8px;line-height:20px;font-size:10.8px;color:#fff;transform:scaleX(0.82);transform-origin:right center;font-weight:bold;">استاد آژ دبیر ریاضی</div><svg class="a" style="left:930px;top:153.5px" width="19" height="19" viewBox="0 0 24 24"><path fill="#fff" d="M12 8c1.1 0 2-.9 2-2s-.9-2-2-2-2 .9-2 2 .9 2 2 2zm0 2c-1.1 0-2 .9-2 2s.9 2 2 2 2-.9 2-2-.9-2-2-2zm0 6c-1.1 0-2 .9-2 2s.9 2 2 2 2-.9 2-2-.9-2-2-2z"/></svg><div class="a" style="left:18px;top:178px;width:927px;height:471.3px;background:#8c8c90"></div><div class="a" style="left:19px;top:179px;width:925px;height:469.3px;background:#000;overflow:hidden"><div class="a" style="left:45px;top:0px;width:834px;height:470px;background:linear-gradient(#dee1e6 0 19.3px,#fff 19.3px 39.4px,#6d6d72 39.4px 70px,#4a4b4f 70px)"></div><div class="a" style="left:45px;top:2.4px;width:1280px;height:720px;transform:scale(0.6495);transform-origin:0 0"><div class="f n"><div class="a" style="left:0px;top:0px;width:1280px;height:26px;background:#e0e3e8"></div><div class="a" style="left:5px;top:0px;width:202px;height:27px;background:#fff;border-radius:6px 6px 0 0"></div><div class="a" style="left:-1px;top:20px;width:6px;height:6px;background:radial-gradient(circle at 0 0,rgba(255,255,255,0) 5.5px,#fff 6px)"></div><div class="a" style="left:207px;top:20px;width:6px;height:6px;background:radial-gradient(circle at 100% 0,rgba(255,255,255,0) 5.5px,#fff 6px)"></div><div class="a" style="left:0px;top:26px;width:1280px;height:31px;background:#fff"></div><div class="a" style="left:0px;top:57px;width:1280px;height:1.3px;background:#3a3a3e"></div><svg class="a" style="left:16px;top:5px" width="15" height="14" viewBox="0 0 15 14"><circle cx="5.5" cy="5.5" r="3.6" fill="none" stroke="#1e88e5" stroke-width="1.8"/><circle cx="10.8" cy="9.5" r="2.5" fill="#fff" stroke="#42a5f5" stroke-width="1.5"/></svg><div class="a" style="left:38px;top:2px;width:128px;height:20px;overflow:hidden"><div class="t" dir="ltr" style="position:absolute;right:-5px;top:0;line-height:20px;font-size:11px;color:#3c4043;white-space:nowrap;letter-spacing:-.42px">classroomostadazh - <span class="fa" style="display:inline-block;letter-spacing:0;font-size:10.5px;transform:scaleX(.9);transform-origin:left center">اسکای‌روم</span></div></div><div class="a" style="left:38px;top:2px;width:12px;height:20px;background:linear-gradient(90deg,#fff,rgba(255,255,255,0))"></div><svg class="a" style="left:169px;top:6px" width="12" height="12" viewBox="0 0 12 12"><circle cx="6" cy="6" r="5.2" fill="#fff" stroke="#d93025" stroke-width="1"/><circle cx="6" cy="6" r="3.2" fill="#e8110f"/></svg><svg class="a" style="left:189px;top:7px" width="10" height="10" viewBox="0 0 10 10"><path d="M1.5 1.5l7 7M8.5 1.5l-7 7" stroke="#202124" stroke-width="1.5" fill="none"/></svg><svg class="a" style="left:220px;top:6px" width="12" height="12" viewBox="0 0 12 12"><path d="M6 1v10M1 6h10" stroke="#202124" stroke-width="1.7" fill="none"/></svg><svg class="a" style="left:12px;top:35px" width="13" height="13" viewBox="0 0 13 13"><path d="M12 6.5H2M6.3 1.8L1.6 6.5l4.7 4.7" stroke="#202124" stroke-width="1.5" fill="none"/></svg><svg class="a" style="left:39px;top:35px" width="13" height="13" viewBox="0 0 13 13"><path d="M1 6.5h10M6.7 1.8l4.7 4.7-4.7 4.7" stroke="#b4b7bb" stroke-width="1.5" fill="none"/></svg><svg class="a" style="left:65px;top:34px" width="14" height="14" viewBox="0 0 14 14"><path d="M11.7 4.8A5.2 5.2 0 1 0 12.2 8.3" stroke="#202124" stroke-width="1.5" fill="none"/><path d="M12.6 1.2v4.2H8.4z" fill="#202124"/></svg><div class="a" style="left:92px;top:30px;width:1020px;height:23px;background:#f1f3f4;border-radius:12px"></div><svg class="a" style="left:101px;top:36px" width="9" height="11" viewBox="0 0 9 11"><rect x=".5" y="4.5" width="8" height="6" rx="1" fill="#4d5156"/><path d="M2.3 4.5V3.2a2.2 2.2 0 0 1 4.4 0v1.3" stroke="#4d5156" stroke-width="1.2" fill="none"/></svg><div class="a t" style="left:119px;top:31.5px;line-height:20px;font-size:11.7px;color:#5f6368;"><span style="color:#202124">skyroom.online</span>/ch/ostad.azh67/riazi789</div><svg class="a" style="left:1038px;top:35px" width="14" height="14" viewBox="0 0 14 14"><circle cx="5.7" cy="5.7" r="4.3" stroke="#3c4043" stroke-width="1.3" fill="none"/><path d="M9 9l4 4M3.7 5.7h4M5.7 3.7v4" stroke="#3c4043" stroke-width="1.3" fill="none"/></svg><svg class="a" style="left:1064px;top:34px" width="16" height="15" viewBox="0 0 16 15"><path d="M5 6H1.7v8h10.6V10" stroke="#5f6368" stroke-width="1.3" fill="none"/><path d="M5.5 10.5c.5-3.5 2.5-5.3 6-5.5V2.2L15.3 6l-3.8 3.8V7.2c-2.5 0-4.3 1-6 3.3z" stroke="#5f6368" stroke-width="1.2" fill="none"/></svg><svg class="a" style="left:1090px;top:34px" width="16" height="15" viewBox="0 0 16 15"><path d="M8 1.5l1.9 4.2 4.6.4-3.5 3 1.1 4.5L8 11.2l-4.1 2.4L5 9.1l-3.5-3 4.6-.4z" stroke="#3c4043" stroke-width="1.3" fill="none" stroke-linejoin="round"/></svg><div class="a" style="left:1125px;top:35px;width:14px;height:14px;background:#b30b00;border-radius:2.5px"><svg width="14" height="14" viewBox="0 0 14 14"><path d="M3 10.5c2.5-1 4.2-4 4-7.5-.6 3 1 6 4 6.3-2.5-.3-5.5.2-8 1.2z" stroke="#fff" stroke-width="1.1" fill="none"/></svg></div><svg class="a" style="left:1151px;top:35px" width="14" height="14" viewBox="0 0 24 24"><path fill="#3c4043" d="M20.5 11H19V7c0-1.1-.9-2-2-2h-4V3.5a2.5 2.5 0 0 0-5 0V5H4c-1.1 0-1.99.9-1.99 2v3.8H3.5c1.49 0 2.7 1.21 2.7 2.7s-1.21 2.7-2.7 2.7H2V20c0 1.1.9 2 2 2h3.8v-1.5c0-1.49 1.21-2.7 2.7-2.7 1.49 0 2.7 1.21 2.7 2.7V22H17c1.1 0 2-.9 2-2v-4h1.5a2.5 2.5 0 0 0 0-5z"/></svg><svg class="a" style="left:1177px;top:35px" width="15" height="14" viewBox="0 0 15 14"><path d="M1 2.5h9M1 6h9M1 9.5h5.5" stroke="#3c4043" stroke-width="1.4" fill="none"/><path d="M12.3 2v7.5" stroke="#3c4043" stroke-width="1.3"/><circle cx="10.8" cy="10.3" r="1.9" fill="#3c4043"/><path d="M12.3 2h2.5v1.8h-2.5z" fill="#3c4043"/></svg><div class="a" style="left:1205.5px;top:36px;width:13px;height:12px;border:1.5px solid #3c4043;border-radius:1.5px;box-sizing:border-box;background:linear-gradient(90deg,#fff 55%,#3c4043 55%)"></div><div class="a" style="left:1231px;top:33px;width:18px;height:18px;border-radius:50%;overflow:hidden;background:linear-gradient(135deg,#e8e4dc 0 38%,#2b2b33 38% 62%,#3f7fc8 62%)"><div style="position:absolute;left:6.5px;top:2.5px;width:7px;height:8px;border-radius:50%;background:#c99572"></div><div style="position:absolute;left:5.5px;top:1px;width:9px;height:5px;border-radius:50% 50% 30% 30%;background:#1d1d22"></div><div style="position:absolute;left:2px;top:11px;width:15px;height:9px;border-radius:50% 50% 0 0;background:#4a8fd6"></div></div><svg class="a" style="left:1263px;top:35px" width="4" height="14" viewBox="0 0 4 14"><circle cx="2" cy="2" r="1.3" fill="#3c4043"/><circle cx="2" cy="7" r="1.3" fill="#3c4043"/><circle cx="2" cy="12" r="1.3" fill="#3c4043"/></svg><svg class="a" style="left:1144px;top:7px" width="11" height="7" viewBox="0 0 11 7"><path d="M1 1l4.5 4.5L10 1" stroke="#202124" stroke-width="1.1" fill="none"/></svg><div class="a" style="left:1183px;top:10px;width:10px;height:1.2px;background:#202124"></div><div class="a" style="left:1221px;top:6px;width:8px;height:8px;border:1.1px solid #202124;border-radius:1.5px;box-sizing:border-box"></div><svg class="a" style="left:1222.5px;top:4.5px" width="9" height="9" viewBox="0 0 9 9"><path d="M.5.6h6.2a1.7 1.7 0 0 1 1.7 1.7V8" stroke="#202124" stroke-width="1.1" fill="none"/></svg><svg class="a" style="left:1259px;top:5px" width="11" height="11" viewBox="0 0 11 11"><path d="M1 1l9 9M10 1l-9 9" stroke="#202124" stroke-width="1.1" fill="none"/></svg><div class="a" style="left:0px;top:58px;width:1280px;height:46.5px;background:linear-gradient(#66666b,#737378)"></div><div class="a" style="left:0px;top:104px;width:1280px;height:1.2px;background:#8e8e92"></div><div class="a" style="left:0px;top:105px;width:1280px;height:581px;background:#4a4d50"></div><svg class="a" style="left:8.6px;top:68.6px" width="23.4" height="23.4" viewBox="0 0 24 24"><path fill="#fff" d="M11.99 2C6.47 2 2 6.48 2 12s4.47 10 9.99 10C17.52 22 22 17.52 22 12S17.52 2 11.99 2zM12 20c-4.42 0-8-3.58-8-8s3.58-8 8-8 8 3.58 8 8-3.58 8-8 8zm.5-13H11v6l5.25 3.15.75-1.23-4.5-2.67z"/></svg><div class="a t" style="left:35px;top:69.3px;line-height:20px;font-size:13.7px;color:#fff;letter-spacing:0">55:35</div><svg class="a" style="left:1244.15px;top:65.5px" width="31.5" height="31.5" viewBox="0 0 24 24"><path fill="#ececee" d="M12 2C6.48 2 2 6.48 2 12s4.48 10 10 10 10-4.48 10-10S17.52 2 12 2zm0 3c1.66 0 3 1.34 3 3s-1.34 3-3 3-3-1.34-3-3 1.34-3 3-3zm0 14.2c-2.5 0-4.71-1.28-6-3.22.03-1.99 4-3.08 6-3.08 1.99 0 5.97 1.09 6 3.08-1.29 1.94-3.5 3.22-6 3.22z"/></svg><div class="a t fa" dir="rtl" style="right:42.6px;top:70.8px;line-height:20px;font-size:13.4px;color:#fff;transform:scaleX(0.875);transform-origin:right center;">استاد آژ دبیر ریاضی</div><div class="a t" style="left:1132px;top:70.6px;line-height:20px;font-size:13.4px;color:#fff;">»</div><div class="a t" style="left:1015.8px;top:71px;line-height:20px;font-size:13.4px;color:#fff;letter-spacing:-.26px;">classroomostadazh</div><div class="a" style="left:-1px;top:20px;width:6px;height:6px;background:radial-gradient(circle at 0 0,rgba(255,255,255,0) 5.5px,#fff 6px)"></div><div class="a" style="left:207px;top:20px;width:6px;height:6px;background:radial-gradient(circle at 100% 0,rgba(255,255,255,0) 5.5px,#fff 6px)"></div><svg class="a" style="left:17px;top:116px" width="22" height="22" viewBox="0 0 24 24"><path fill="#fff" d="M3 9v6h4l5 5V4L7 9H3zm13.5 3c0-1.77-1.02-3.29-2.5-4.03v8.05c1.48-.73 2.5-2.25 2.5-4.02zM14 3.23v2.06c2.89.86 5 3.54 5 6.71s-2.11 5.85-5 6.71v2.06c4.01-.91 7-4.49 7-8.77s-2.99-7.86-7-8.77z"/></svg><svg class="a" style="left:61px;top:116px" width="22" height="22" viewBox="0 0 24 24"><path fill="#fff" d="M12 14c1.66 0 2.99-1.34 2.99-3L15 5c0-1.66-1.34-3-3-3S9 3.34 9 5v6c0 1.66 1.34 3 3 3zm5.3-3c0 3-2.54 5.1-5.3 5.1S6.7 14 6.7 11H5c0 3.41 2.72 6.23 6 6.72V21h2v-3.28c3.28-.48 6-3.3 6-6.72h-1.7z"/></svg><svg class="a" style="left:108.5px;top:116.5px" width="21" height="21" viewBox="0 0 24 24"><path fill="#fff" d="M17 10.5V7c0-.55-.45-1-1-1H4c-.55 0-1 .45-1 1v10c0 .55.45 1 1 1h12c.55 0 1-.45 1-1v-3.5l4 4v-11l-4 4z"/></svg><svg class="a" style="left:156px;top:116px" width="22" height="22" viewBox="0 0 24 24"><path fill="#fff" d="M20 18c1.1 0 1.99-.9 1.99-2L22 6c0-1.1-.9-2-2-2H4c-1.1 0-2 .9-2 2v10c0 1.1.9 2 2 2H0v2h24v-2h-4zM4 6h16v10H4V6z"/></svg><svg class="a" style="left:204px;top:117px" width="20" height="20" viewBox="0 0 24 24"><path fill="#fff" d="M7 14c-1.66 0-3 1.34-3 3 0 1.31-1.16 2-2 2 .92 1.22 2.49 2 4 2 2.21 0 4-1.79 4-4 0-1.66-1.34-3-3-3zm13.71-9.37l-1.34-1.34a.996.996 0 0 0-1.41 0L9 12.25 11.75 15l8.96-8.96a.996.996 0 0 0 0-1.41z"/></svg><svg class="a" style="left:252.55px;top:117.05px" width="21.5" height="21.5" viewBox="0 0 24 24"><path fill="#fff" d="M10 8v8l5-4-5-4zm9-5H5c-1.1 0-2 .9-2 2v14c0 1.1.9 2 2 2h14c1.1 0 2-.9 2-2V5c0-1.1-.9-2-2-2zm0 16H5V5h14v14z"/></svg><svg class="a" style="left:296.5px;top:117.8px" width="19" height="19" viewBox="0 0 24 24"><path fill="#fff" d="M23 5.5V20c0 2.2-1.8 4-4 4h-7.3c-1.08 0-2.1-.43-2.85-1.19L1 14.83s1.26-1.23 1.3-1.25c.22-.19.49-.29.79-.29.22 0 .42.06.6.16.04.01 4.31 2.46 4.31 2.46V4c0-.83.67-1.5 1.5-1.5S11 3.17 11 4v7h1V1.5c0-.83.67-1.5 1.5-1.5S15 .67 15 1.5V11h1V2.5c0-.83.67-1.5 1.5-1.5s1.5.67 1.5 1.5V11h1V5.5c0-.83.67-1.5 1.5-1.5s1.5.67 1.5 1.5z"/></svg><div class="a" style="left:17px;top:137.8px;width:22.5px;height:3.4px;background:#2f9bf4;border-radius:1px"></div><div class="a" style="left:61px;top:137.8px;width:22.5px;height:3.4px;background:#2f9bf4;border-radius:1px"></div><div class="a" style="left:156px;top:137.8px;width:22.5px;height:3.4px;background:#2f9bf4;border-radius:1px"></div><svg class="a" style="left:1243px;top:116px" width="24" height="24" viewBox="0 0 24 24"><path fill="#fff" d="M3 18h18v-2H3v2zm0-5h18v-2H3v2zm0-7v2h18V6H3z"/></svg><div class="a" style="left:9px;top:151px;width:945px;height:506.5px;background:linear-gradient(#6b6b70,#77777c 60px,#77777c);box-shadow:inset 1px 1px 0 #909094,inset -1px -1px 0 #808085,0 0 0 1px #3c3d40;box-sizing:border-box"></div><svg class="a" style="left:20px;top:154.5px" width="18" height="18" viewBox="0 0 24 24"><path fill="#fff" d="M20 18c1.1 0 1.99-.9 1.99-2L22 6c0-1.1-.9-2-2-2H4c-1.1 0-2 .9-2 2v10c0 1.1.9 2 2 2H0v2h24v-2h-4zM4 6h16v10H4V6z"/></svg><div class="a t fa" dir="rtl" style="right:354.4px;top:151.8px;line-height:20px;font-size:10.8px;color:#fff;transform:scaleX(0.82);transform-origin:right center;font-weight:bold;">استاد آژ دبیر ریاضی</div><svg class="a" style="left:930px;top:153.5px" width="19" height="19" viewBox="0 0 24 24"><path fill="#fff" d="M12 8c1.1 0 2-.9 2-2s-.9-2-2-2-2 .9-2 2 .9 2 2 2zm0 2c-1.1 0-2 .9-2 2s.9 2 2 2 2-.9 2-2-.9-2-2-2zm0 6c-1.1 0-2 .9-2 2s.9 2 2 2 2-.9 2-2-.9-2-2-2z"/></svg><div class="a" style="left:18px;top:178px;width:927px;height:471.3px;background:#8c8c90"></div><div class="a" style="left:19px;top:179px;width:925px;height:469.3px;background:#000;overflow:hidden"><div class="a" style="left:45px;top:0px;width:834px;height:470px;background:linear-gradient(#dee1e6 0 19.3px,#fff 19.3px 39.4px,#6d6d72 39.4px 70px,#4a4b4f 70px)"></div><div class="a" style="left:45px;top:2.4px;width:1280px;height:720px;transform:scale(0.6495);transform-origin:0 0"><div class="f n"><div class="a" style="left:0px;top:0px;width:1280px;height:26px;background:#e0e3e8"></div><div class="a" style="left:5px;top:0px;width:202px;height:27px;background:#fff;border-radius:6px 6px 0 0"></div><div class="a" style="left:-1px;top:20px;width:6px;height:6px;background:radial-gradient(circle at 0 0,rgba(255,255,255,0) 5.5px,#fff 6px)"></div><div class="a" style="left:207px;top:20px;width:6px;height:6px;background:radial-gradient(circle at 100% 0,rgba(255,255,255,0) 5.5px,#fff 6px)"></div><div class="a" style="left:0px;top:26px;width:1280px;height:31px;background:#fff"></div><div class="a" style="left:0px;top:57px;width:1280px;height:1.3px;background:#3a3a3e"></div><svg class="a" style="left:16px;top:5px" width="15" height="14" viewBox="0 0 15 14"><circle cx="5.5" cy="5.5" r="3.6" fill="none" stroke="#1e88e5" stroke-width="1.8"/><circle cx="10.8" cy="9.5" r="2.5" fill="#fff" stroke="#42a5f5" stroke-width="1.5"/></svg><div class="a" style="left:38px;top:2px;width:128px;height:20px;overflow:hidden"><div class="t" dir="ltr" style="position:absolute;right:-5px;top:0;line-height:20px;font-size:11px;color:#3c4043;white-space:nowrap;letter-spacing:-.42px">classroomostadazh - <span class="fa" style="display:inline-block;letter-spacing:0;font-size:10.5px;transform:scaleX(.9);transform-origin:left center">اسکای‌روم</span></div></div><div class="a" style="left:38px;top:2px;width:12px;height:20px;background:linear-gradient(90deg,#fff,rgba(255,255,255,0))"></div><svg class="a" style="left:169px;top:6px" width="12" height="12" viewBox="0 0 12 12"><circle cx="6" cy="6" r="5.2" fill="#fff" stroke="#d93025" stroke-width="1"/><circle cx="6" cy="6" r="3.2" fill="#e8110f"/></svg><svg class="a" style="left:189px;top:7px" width="10" height="10" viewBox="0 0 10 10"><path d="M1.5 1.5l7 7M8.5 1.5l-7 7" stroke="#202124" stroke-width="1.5" fill="none"/></svg><svg class="a" style="left:220px;top:6px" width="12" height="12" viewBox="0 0 12 12"><path d="M6 1v10M1 6h10" stroke="#202124" stroke-width="1.7" fill="none"/></svg><svg class="a" style="left:12px;top:35px" width="13" height="13" viewBox="0 0 13 13"><path d="M12 6.5H2M6.3 1.8L1.6 6.5l4.7 4.7" stroke="#202124" stroke-width="1.5" fill="none"/></svg><svg class="a" style="left:39px;top:35px" width="13" height="13" viewBox="0 0 13 13"><path d="M1 6.5h10M6.7 1.8l4.7 4.7-4.7 4.7" stroke="#b4b7bb" stroke-width="1.5" fill="none"/></svg><svg class="a" style="left:65px;top:34px" width="14" height="14" viewBox="0 0 14 14"><path d="M11.7 4.8A5.2 5.2 0 1 0 12.2 8.3" stroke="#202124" stroke-width="1.5" fill="none"/><path d="M12.6 1.2v4.2H8.4z" fill="#202124"/></svg><div class="a" style="left:92px;top:30px;width:1020px;height:23px;background:#f1f3f4;border-radius:12px"></div><svg class="a" style="left:101px;top:36px" width="9" height="11" viewBox="0 0 9 11"><rect x=".5" y="4.5" width="8" height="6" rx="1" fill="#4d5156"/><path d="M2.3 4.5V3.2a2.2 2.2 0 0 1 4.4 0v1.3" stroke="#4d5156" stroke-width="1.2" fill="none"/></svg><div class="a t" style="left:119px;top:31.5px;line-height:20px;font-size:11.7px;color:#5f6368;"><span style="color:#202124">skyroom.online</span>/ch/ostad.azh67/riazi789</div><svg class="a" style="left:1038px;top:35px" width="14" height="14" viewBox="0 0 14 14"><circle cx="5.7" cy="5.7" r="4.3" stroke="#3c4043" stroke-width="1.3" fill="none"/><path d="M9 9l4 4M3.7 5.7h4M5.7 3.7v4" stroke="#3c4043" stroke-width="1.3" fill="none"/></svg><svg class="a" style="left:1064px;top:34px" width="16" height="15" viewBox="0 0 16 15"><path d="M5 6H1.7v8h10.6V10" stroke="#5f6368" stroke-width="1.3" fill="none"/><path d="M5.5 10.5c.5-3.5 2.5-5.3 6-5.5V2.2L15.3 6l-3.8 3.8V7.2c-2.5 0-4.3 1-6 3.3z" stroke="#5f6368" stroke-width="1.2" fill="none"/></svg><svg class="a" style="left:1090px;top:34px" width="16" height="15" viewBox="0 0 16 15"><path d="M8 1.5l1.9 4.2 4.6.4-3.5 3 1.1 4.5L8 11.2l-4.1 2.4L5 9.1l-3.5-3 4.6-.4z" stroke="#3c4043" stroke-width="1.3" fill="none" stroke-linejoin="round"/></svg><div class="a" style="left:1125px;top:35px;width:14px;height:14px;background:#b30b00;border-radius:2.5px"><svg width="14" height="14" viewBox="0 0 14 14"><path d="M3 10.5c2.5-1 4.2-4 4-7.5-.6 3 1 6 4 6.3-2.5-.3-5.5.2-8 1.2z" stroke="#fff" stroke-width="1.1" fill="none"/></svg></div><svg class="a" style="left:1151px;top:35px" width="14" height="14" viewBox="0 0 24 24"><path fill="#3c4043" d="M20.5 11H19V7c0-1.1-.9-2-2-2h-4V3.5a2.5 2.5 0 0 0-5 0V5H4c-1.1 0-1.99.9-1.99 2v3.8H3.5c1.49 0 2.7 1.21 2.7 2.7s-1.21 2.7-2.7 2.7H2V20c0 1.1.9 2 2 2h3.8v-1.5c0-1.49 1.21-2.7 2.7-2.7 1.49 0 2.7 1.21 2.7 2.7V22H17c1.1 0 2-.9 2-2v-4h1.5a2.5 2.5 0 0 0 0-5z"/></svg><svg class="a" style="left:1177px;top:35px" width="15" height="14" viewBox="0 0 15 14"><path d="M1 2.5h9M1 6h9M1 9.5h5.5" stroke="#3c4043" stroke-width="1.4" fill="none"/><path d="M12.3 2v7.5" stroke="#3c4043" stroke-width="1.3"/><circle cx="10.8" cy="10.3" r="1.9" fill="#3c4043"/><path d="M12.3 2h2.5v1.8h-2.5z" fill="#3c4043"/></svg><div class="a" style="left:1205.5px;top:36px;width:13px;height:12px;border:1.5px solid #3c4043;border-radius:1.5px;box-sizing:border-box;background:linear-gradient(90deg,#fff 55%,#3c4043 55%)"></div><div class="a" style="left:1231px;top:33px;width:18px;height:18px;border-radius:50%;overflow:hidden;background:linear-gradient(135deg,#e8e4dc 0 38%,#2b2b33 38% 62%,#3f7fc8 62%)"><div style="position:absolute;left:6.5px;top:2.5px;width:7px;height:8px;border-radius:50%;background:#c99572"></div><div style="position:absolute;left:5.5px;top:1px;width:9px;height:5px;border-radius:50% 50% 30% 30%;background:#1d1d22"></div><div style="position:absolute;left:2px;top:11px;width:15px;height:9px;border-radius:50% 50% 0 0;background:#4a8fd6"></div></div><svg class="a" style="left:1263px;top:35px" width="4" height="14" viewBox="0 0 4 14"><circle cx="2" cy="2" r="1.3" fill="#3c4043"/><circle cx="2" cy="7" r="1.3" fill="#3c4043"/><circle cx="2" cy="12" r="1.3" fill="#3c4043"/></svg><svg class="a" style="left:1144px;top:7px" width="11" height="7" viewBox="0 0 11 7"><path d="M1 1l4.5 4.5L10 1" stroke="#202124" stroke-width="1.1" fill="none"/></svg><div class="a" style="left:1183px;top:10px;width:10px;height:1.2px;background:#202124"></div><div class="a" style="left:1221px;top:6px;width:8px;height:8px;border:1.1px solid #202124;border-radius:1.5px;box-sizing:border-box"></div><svg class="a" style="left:1222.5px;top:4.5px" width="9" height="9" viewBox="0 0 9 9"><path d="M.5.6h6.2a1.7 1.7 0 0 1 1.7 1.7V8" stroke="#202124" stroke-width="1.1" fill="none"/></svg><svg class="a" style="left:1259px;top:5px" width="11" height="11" viewBox="0 0 11 11"><path d="M1 1l9 9M10 1l-9 9" stroke="#202124" stroke-width="1.1" fill="none"/></svg><div class="a" style="left:0px;top:58px;width:1280px;height:46.5px;background:linear-gradient(#66666b,#737378)"></div><div class="a" style="left:0px;top:104px;width:1280px;height:1.2px;background:#8e8e92"></div><div class="a" style="left:0px;top:105px;width:1280px;height:581px;background:#4a4d50"></div><svg class="a" style="left:8.6px;top:68.6px" width="23.4" height="23.4" viewBox="0 0 24 24"><path fill="#fff" d="M11.99 2C6.47 2 2 6.48 2 12s4.47 10 9.99 10C17.52 22 22 17.52 22 12S17.52 2 11.99 2zM12 20c-4.42 0-8-3.58-8-8s3.58-8 8-8 8 3.58 8 8-3.58 8-8 8zm.5-13H11v6l5.25 3.15.75-1.23-4.5-2.67z"/></svg><div class="a t" style="left:35px;top:69.3px;line-height:20px;font-size:13.7px;color:#fff;letter-spacing:0">55:35</div><svg class="a" style="left:1244.15px;top:65.5px" width="31.5" height="31.5" viewBox="0 0 24 24"><path fill="#ececee" d="M12 2C6.48 2 2 6.48 2 12s4.48 10 10 10 10-4.48 10-10S17.52 2 12 2zm0 3c1.66 0 3 1.34 3 3s-1.34 3-3 3-3-1.34-3-3 1.34-3 3-3zm0 14.2c-2.5 0-4.71-1.28-6-3.22.03-1.99 4-3.08 6-3.08 1.99 0 5.97 1.09 6 3.08-1.29 1.94-3.5 3.22-6 3.22z"/></svg><div class="a t fa" dir="rtl" style="right:42.6px;top:70.8px;line-height:20px;font-size:13.4px;color:#fff;transform:scaleX(0.875);transform-origin:right center;">استاد آژ دبیر ریاضی</div><div class="a t" style="left:1132px;top:70.6px;line-height:20px;font-size:13.4px;color:#fff;">»</div><div class="a t" style="left:1015.8px;top:71px;line-height:20px;font-size:13.4px;color:#fff;letter-spacing:-.26px;">classroomostadazh</div><div class="a" style="left:-1px;top:20px;width:6px;height:6px;background:radial-gradient(circle at 0 0,rgba(255,255,255,0) 5.5px,#fff 6px)"></div><div class="a" style="left:207px;top:20px;width:6px;height:6px;background:radial-gradient(circle at 100% 0,rgba(255,255,255,0) 5.5px,#fff 6px)"></div><svg class="a" style="left:17px;top:116px" width="22" height="22" viewBox="0 0 24 24"><path fill="#fff" d="M3 9v6h4l5 5V4L7 9H3zm13.5 3c0-1.77-1.02-3.29-2.5-4.03v8.05c1.48-.73 2.5-2.25 2.5-4.02zM14 3.23v2.06c2.89.86 5 3.54 5 6.71s-2.11 5.85-5 6.71v2.06c4.01-.91 7-4.49 7-8.77s-2.99-7.86-7-8.77z"/></svg><svg class="a" style="left:61px;top:116px" width="22" height="22" viewBox="0 0 24 24"><path fill="#fff" d="M12 14c1.66 0 2.99-1.34 2.99-3L15 5c0-1.66-1.34-3-3-3S9 3.34 9 5v6c0 1.66 1.34 3 3 3zm5.3-3c0 3-2.54 5.1-5.3 5.1S6.7 14 6.7 11H5c0 3.41 2.72 6.23 6 6.72V21h2v-3.28c3.28-.48 6-3.3 6-6.72h-1.7z"/></svg><svg class="a" style="left:108.5px;top:116.5px" width="21" height="21" viewBox="0 0 24 24"><path fill="#fff" d="M17 10.5V7c0-.55-.45-1-1-1H4c-.55 0-1 .45-1 1v10c0 .55.45 1 1 1h12c.55 0 1-.45 1-1v-3.5l4 4v-11l-4 4z"/></svg><svg class="a" style="left:156px;top:116px" width="22" height="22" viewBox="0 0 24 24"><path fill="#fff" d="M20 18c1.1 0 1.99-.9 1.99-2L22 6c0-1.1-.9-2-2-2H4c-1.1 0-2 .9-2 2v10c0 1.1.9 2 2 2H0v2h24v-2h-4zM4 6h16v10H4V6z"/></svg><svg class="a" style="left:204px;top:117px" width="20" height="20" viewBox="0 0 24 24"><path fill="#fff" d="M7 14c-1.66 0-3 1.34-3 3 0 1.31-1.16 2-2 2 .92 1.22 2.49 2 4 2 2.21 0 4-1.79 4-4 0-1.66-1.34-3-3-3zm13.71-9.37l-1.34-1.34a.996.996 0 0 0-1.41 0L9 12.25 11.75 15l8.96-8.96a.996.996 0 0 0 0-1.41z"/></svg><svg class="a" style="left:252.55px;top:117.05px" width="21.5" height="21.5" viewBox="0 0 24 24"><path fill="#fff" d="M10 8v8l5-4-5-4zm9-5H5c-1.1 0-2 .9-2 2v14c0 1.1.9 2 2 2h14c1.1 0 2-.9 2-2V5c0-1.1-.9-2-2-2zm0 16H5V5h14v14z"/></svg><svg class="a" style="left:296.5px;top:117.8px" width="19" height="19" viewBox="0 0 24 24"><path fill="#fff" d="M23 5.5V20c0 2.2-1.8 4-4 4h-7.3c-1.08 0-2.1-.43-2.85-1.19L1 14.83s1.26-1.23 1.3-1.25c.22-.19.49-.29.79-.29.22 0 .42.06.6.16.04.01 4.31 2.46 4.31 2.46V4c0-.83.67-1.5 1.5-1.5S11 3.17 11 4v7h1V1.5c0-.83.67-1.5 1.5-1.5S15 .67 15 1.5V11h1V2.5c0-.83.67-1.5 1.5-1.5s1.5.67 1.5 1.5V11h1V5.5c0-.83.67-1.5 1.5-1.5s1.5.67 1.5 1.5z"/></svg><div class="a" style="left:17px;top:137.8px;width:22.5px;height:3.4px;background:#2f9bf4;border-radius:1px"></div><div class="a" style="left:61px;top:137.8px;width:22.5px;height:3.4px;background:#2f9bf4;border-radius:1px"></div><div class="a" style="left:156px;top:137.8px;width:22.5px;height:3.4px;background:#2f9bf4;border-radius:1px"></div><svg class="a" style="left:1243px;top:116px" width="24" height="24" viewBox="0 0 24 24"><path fill="#fff" d="M3 18h18v-2H3v2zm0-5h18v-2H3v2zm0-7v2h18V6H3z"/></svg><div class="a" style="left:9px;top:151px;width:945px;height:506.5px;background:linear-gradient(#6b6b70,#77777c 60px,#77777c);box-shadow:inset 1px 1px 0 #909094,inset -1px -1px 0 #808085,0 0 0 1px #3c3d40;box-sizing:border-box"></div><svg class="a" style="left:20px;top:154.5px" width="18" height="18" viewBox="0 0 24 24"><path fill="#fff" d="M20 18c1.1 0 1.99-.9 1.99-2L22 6c0-1.1-.9-2-2-2H4c-1.1 0-2 .9-2 2v10c0 1.1.9 2 2 2H0v2h24v-2h-4zM4 6h16v10H4V6z"/></svg><div class="a t fa" dir="rtl" style="right:354.4px;top:151.8px;line-height:20px;font-size:10.8px;color:#fff;transform:scaleX(0.82);transform-origin:right center;font-weight:bold;">استاد آژ دبیر ریاضی</div><svg class="a" style="left:930px;top:153.5px" width="19" height="19" viewBox="0 0 24 24"><path fill="#fff" d="M12 8c1.1 0 2-.9 2-2s-.9-2-2-2-2 .9-2 2 .9 2 2 2zm0 2c-1.1 0-2 .9-2 2s.9 2 2 2 2-.9 2-2-.9-2-2-2zm0 6c-1.1 0-2 .9-2 2s.9 2 2 2 2-.9 2-2-.9-2-2-2z"/></svg><div class="a" style="left:18px;top:178px;width:927px;height:471.3px;background:#8c8c90"></div><div class="a" style="left:19px;top:179px;width:925px;height:469.3px;background:#000;overflow:hidden"><div class="a" style="left:45px;top:0px;width:834px;height:470px;background:linear-gradient(#dee1e6 0 19.3px,#fff 19.3px 39.4px,#6d6d72 39.4px 70px,#4a4b4f 70px)"></div><div class="a" style="left:45px;top:2.4px;width:1280px;height:720px;transform:scale(0.6495);transform-origin:0 0"><div class="f n"><div class="a" style="left:0px;top:0px;width:1280px;height:26px;background:#e0e3e8"></div><div class="a" style="left:5px;top:0px;width:202px;height:27px;background:#fff;border-radius:6px 6px 0 0"></div><div class="a" style="left:-1px;top:20px;width:6px;height:6px;background:radial-gradient(circle at 0 0,rgba(255,255,255,0) 5.5px,#fff 6px)"></div><div class="a" style="left:207px;top:20px;width:6px;height:6px;background:radial-gradient(circle at 100% 0,rgba(255,255,255,0) 5.5px,#fff 6px)"></div><div class="a" style="left:0px;top:26px;width:1280px;height:31px;background:#fff"></div><div class="a" style="left:0px;top:57px;width:1280px;height:1.3px;background:#3a3a3e"></div><svg class="a" style="left:16px;top:5px" width="15" height="14" viewBox="0 0 15 14"><circle cx="5.5" cy="5.5" r="3.6" fill="none" stroke="#1e88e5" stroke-width="1.8"/><circle cx="10.8" cy="9.5" r="2.5" fill="#fff" stroke="#42a5f5" stroke-width="1.5"/></svg><div class="a" style="left:38px;top:2px;width:128px;height:20px;overflow:hidden"><div class="t" dir="ltr" style="position:absolute;right:-5px;top:0;line-height:20px;font-size:11px;color:#3c4043;white-space:nowrap;letter-spacing:-.42px">classroomostadazh - <span class="fa" style="display:inline-block;letter-spacing:0;font-size:10.5px;transform:scaleX(.9);transform-origin:left center">اسکای‌روم</span></div></div><div class="a" style="left:38px;top:2px;width:12px;height:20px;background:linear-gradient(90deg,#fff,rgba(255,255,255,0))"></div><svg class="a" style="left:169px;top:6px" width="12" height="12" viewBox="0 0 12 12"><circle cx="6" cy="6" r="5.2" fill="#fff" stroke="#d93025" stroke-width="1"/><circle cx="6" cy="6" r="3.2" fill="#e8110f"/></svg><svg class="a" style="left:189px;top:7px" width="10" height="10" viewBox="0 0 10 10"><path d="M1.5 1.5l7 7M8.5 1.5l-7 7" stroke="#202124" stroke-width="1.5" fill="none"/></svg><svg class="a" style="left:220px;top:6px" width="12" height="12" viewBox="0 0 12 12"><path d="M6 1v10M1 6h10" stroke="#202124" stroke-width="1.7" fill="none"/></svg><svg class="a" style="left:12px;top:35px" width="13" height="13" viewBox="0 0 13 13"><path d="M12 6.5H2M6.3 1.8L1.6 6.5l4.7 4.7" stroke="#202124" stroke-width="1.5" fill="none"/></svg><svg class="a" style="left:39px;top:35px" width="13" height="13" viewBox="0 0 13 13"><path d="M1 6.5h10M6.7 1.8l4.7 4.7-4.7 4.7" stroke="#b4b7bb" stroke-width="1.5" fill="none"/></svg><svg class="a" style="left:65px;top:34px" width="14" height="14" viewBox="0 0 14 14"><path d="M11.7 4.8A5.2 5.2 0 1 0 12.2 8.3" stroke="#202124" stroke-width="1.5" fill="none"/><path d="M12.6 1.2v4.2H8.4z" fill="#202124"/></svg><div class="a" style="left:92px;top:30px;width:1020px;height:23px;background:#f1f3f4;border-radius:12px"></div><svg class="a" style="left:101px;top:36px" width="9" height="11" viewBox="0 0 9 11"><rect x=".5" y="4.5" width="8" height="6" rx="1" fill="#4d5156"/><path d="M2.3 4.5V3.2a2.2 2.2 0 0 1 4.4 0v1.3" stroke="#4d5156" stroke-width="1.2" fill="none"/></svg><div class="a t" style="left:119px;top:31.5px;line-height:20px;font-size:11.7px;color:#5f6368;"><span style="color:#202124">skyroom.online</span>/ch/ostad.azh67/riazi789</div><svg class="a" style="left:1038px;top:35px" width="14" height="14" viewBox="0 0 14 14"><circle cx="5.7" cy="5.7" r="4.3" stroke="#3c4043" stroke-width="1.3" fill="none"/><path d="M9 9l4 4M3.7 5.7h4M5.7 3.7v4" stroke="#3c4043" stroke-width="1.3" fill="none"/></svg><svg class="a" style="left:1064px;top:34px" width="16" height="15" viewBox="0 0 16 15"><path d="M5 6H1.7v8h10.6V10" stroke="#5f6368" stroke-width="1.3" fill="none"/><path d="M5.5 10.5c.5-3.5 2.5-5.3 6-5.5V2.2L15.3 6l-3.8 3.8V7.2c-2.5 0-4.3 1-6 3.3z" stroke="#5f6368" stroke-width="1.2" fill="none"/></svg><svg class="a" style="left:1090px;top:34px" width="16" height="15" viewBox="0 0 16 15"><path d="M8 1.5l1.9 4.2 4.6.4-3.5 3 1.1 4.5L8 11.2l-4.1 2.4L5 9.1l-3.5-3 4.6-.4z" stroke="#3c4043" stroke-width="1.3" fill="none" stroke-linejoin="round"/></svg><div class="a" style="left:1125px;top:35px;width:14px;height:14px;background:#b30b00;border-radius:2.5px"><svg width="14" height="14" viewBox="0 0 14 14"><path d="M3 10.5c2.5-1 4.2-4 4-7.5-.6 3 1 6 4 6.3-2.5-.3-5.5.2-8 1.2z" stroke="#fff" stroke-width="1.1" fill="none"/></svg></div><svg class="a" style="left:1151px;top:35px" width="14" height="14" viewBox="0 0 24 24"><path fill="#3c4043" d="M20.5 11H19V7c0-1.1-.9-2-2-2h-4V3.5a2.5 2.5 0 0 0-5 0V5H4c-1.1 0-1.99.9-1.99 2v3.8H3.5c1.49 0 2.7 1.21 2.7 2.7s-1.21 2.7-2.7 2.7H2V20c0 1.1.9 2 2 2h3.8v-1.5c0-1.49 1.21-2.7 2.7-2.7 1.49 0 2.7 1.21 2.7 2.7V22H17c1.1 0 2-.9 2-2v-4h1.5a2.5 2.5 0 0 0 0-5z"/></svg><svg class="a" style="left:1177px;top:35px" width="15" height="14" viewBox="0 0 15 14"><path d="M1 2.5h9M1 6h9M1 9.5h5.5" stroke="#3c4043" stroke-width="1.4" fill="none"/><path d="M12.3 2v7.5" stroke="#3c4043" stroke-width="1.3"/><circle cx="10.8" cy="10.3" r="1.9" fill="#3c4043"/><path d="M12.3 2h2.5v1.8h-2.5z" fill="#3c4043"/></svg><div class="a" style="left:1205.5px;top:36px;width:13px;height:12px;border:1.5px solid #3c4043;border-radius:1.5px;box-sizing:border-box;background:linear-gradient(90deg,#fff 55%,#3c4043 55%)"></div><div class="a" style="left:1231px;top:33px;width:18px;height:18px;border-radius:50%;overflow:hidden;background:linear-gradient(135deg,#e8e4dc 0 38%,#2b2b33 38% 62%,#3f7fc8 62%)"><div style="position:absolute;left:6.5px;top:2.5px;width:7px;height:8px;border-radius:50%;background:#c99572"></div><div style="position:absolute;left:5.5px;top:1px;width:9px;height:5px;border-radius:50% 50% 30% 30%;background:#1d1d22"></div><div style="position:absolute;left:2px;top:11px;width:15px;height:9px;border-radius:50% 50% 0 0;background:#4a8fd6"></div></div><svg class="a" style="left:1263px;top:35px" width="4" height="14" viewBox="0 0 4 14"><circle cx="2" cy="2" r="1.3" fill="#3c4043"/><circle cx="2" cy="7" r="1.3" fill="#3c4043"/><circle cx="2" cy="12" r="1.3" fill="#3c4043"/></svg><svg class="a" style="left:1144px;top:7px" width="11" height="7" viewBox="0 0 11 7"><path d="M1 1l4.5 4.5L10 1" stroke="#202124" stroke-width="1.1" fill="none"/></svg><div class="a" style="left:1183px;top:10px;width:10px;height:1.2px;background:#202124"></div><div class="a" style="left:1221px;top:6px;width:8px;height:8px;border:1.1px solid #202124;border-radius:1.5px;box-sizing:border-box"></div><svg class="a" style="left:1222.5px;top:4.5px" width="9" height="9" viewBox="0 0 9 9"><path d="M.5.6h6.2a1.7 1.7 0 0 1 1.7 1.7V8" stroke="#202124" stroke-width="1.1" fill="none"/></svg><svg class="a" style="left:1259px;top:5px" width="11" height="11" viewBox="0 0 11 11"><path d="M1 1l9 9M10 1l-9 9" stroke="#202124" stroke-width="1.1" fill="none"/></svg><div class="a" style="left:0px;top:58px;width:1280px;height:46.5px;background:linear-gradient(#66666b,#737378)"></div><div class="a" style="left:0px;top:104px;width:1280px;height:1.2px;background:#8e8e92"></div><div class="a" style="left:0px;top:105px;width:1280px;height:581px;background:#4a4d50"></div><svg class="a" style="left:8.6px;top:68.6px" width="23.4" height="23.4" viewBox="0 0 24 24"><path fill="#fff" d="M11.99 2C6.47 2 2 6.48 2 12s4.47 10 9.99 10C17.52 22 22 17.52 22 12S17.52 2 11.99 2zM12 20c-4.42 0-8-3.58-8-8s3.58-8 8-8 8 3.58 8 8-3.58 8-8 8zm.5-13H11v6l5.25 3.15.75-1.23-4.5-2.67z"/></svg><div class="a t" style="left:35px;top:69.3px;line-height:20px;font-size:13.7px;color:#fff;letter-spacing:0">55:35</div><svg class="a" style="left:1244.15px;top:65.5px" width="31.5" height="31.5" viewBox="0 0 24 24"><path fill="#ececee" d="M12 2C6.48 2 2 6.48 2 12s4.48 10 10 10 10-4.48 10-10S17.52 2 12 2zm0 3c1.66 0 3 1.34 3 3s-1.34 3-3 3-3-1.34-3-3 1.34-3 3-3zm0 14.2c-2.5 0-4.71-1.28-6-3.22.03-1.99 4-3.08 6-3.08 1.99 0 5.97 1.09 6 3.08-1.29 1.94-3.5 3.22-6 3.22z"/></svg><div class="a t fa" dir="rtl" style="right:42.6px;top:70.8px;line-height:20px;font-size:13.4px;color:#fff;transform:scaleX(0.875);transform-origin:right center;">استاد آژ دبیر ریاضی</div><div class="a t" style="left:1132px;top:70.6px;line-height:20px;font-size:13.4px;color:#fff;">»</div><div class="a t" style="left:1015.8px;top:71px;line-height:20px;font-size:13.4px;color:#fff;letter-spacing:-.26px;">classroomostadazh</div><div class="a" style="left:-1px;top:20px;width:6px;height:6px;background:radial-gradient(circle at 0 0,rgba(255,255,255,0) 5.5px,#fff 6px)"></div><div class="a" style="left:207px;top:20px;width:6px;height:6px;background:radial-gradient(circle at 100% 0,rgba(255,255,255,0) 5.5px,#fff 6px)"></div><svg class="a" style="left:17px;top:116px" width="22" height="22" viewBox="0 0 24 24"><path fill="#fff" d="M3 9v6h4l5 5V4L7 9H3zm13.5 3c0-1.77-1.02-3.29-2.5-4.03v8.05c1.48-.73 2.5-2.25 2.5-4.02zM14 3.23v2.06c2.89.86 5 3.54 5 6.71s-2.11 5.85-5 6.71v2.06c4.01-.91 7-4.49 7-8.77s-2.99-7.86-7-8.77z"/></svg><svg class="a" style="left:61px;top:116px" width="22" height="22" viewBox="0 0 24 24"><path fill="#fff" d="M12 14c1.66 0 2.99-1.34 2.99-3L15 5c0-1.66-1.34-3-3-3S9 3.34 9 5v6c0 1.66 1.34 3 3 3zm5.3-3c0 3-2.54 5.1-5.3 5.1S6.7 14 6.7 11H5c0 3.41 2.72 6.23 6 6.72V21h2v-3.28c3.28-.48 6-3.3 6-6.72h-1.7z"/></svg><svg class="a" style="left:108.5px;top:116.5px" width="21" height="21" viewBox="0 0 24 24"><path fill="#fff" d="M17 10.5V7c0-.55-.45-1-1-1H4c-.55 0-1 .45-1 1v10c0 .55.45 1 1 1h12c.55 0 1-.45 1-1v-3.5l4 4v-11l-4 4z"/></svg><svg class="a" style="left:156px;top:116px" width="22" height="22" viewBox="0 0 24 24"><path fill="#fff" d="M20 18c1.1 0 1.99-.9 1.99-2L22 6c0-1.1-.9-2-2-2H4c-1.1 0-2 .9-2 2v10c0 1.1.9 2 2 2H0v2h24v-2h-4zM4 6h16v10H4V6z"/></svg><svg class="a" style="left:204px;top:117px" width="20" height="20" viewBox="0 0 24 24"><path fill="#fff" d="M7 14c-1.66 0-3 1.34-3 3 0 1.31-1.16 2-2 2 .92 1.22 2.49 2 4 2 2.21 0 4-1.79 4-4 0-1.66-1.34-3-3-3zm13.71-9.37l-1.34-1.34a.996.996 0 0 0-1.41 0L9 12.25 11.75 15l8.96-8.96a.996.996 0 0 0 0-1.41z"/></svg><svg class="a" style="left:252.55px;top:117.05px" width="21.5" height="21.5" viewBox="0 0 24 24"><path fill="#fff" d="M10 8v8l5-4-5-4zm9-5H5c-1.1 0-2 .9-2 2v14c0 1.1.9 2 2 2h14c1.1 0 2-.9 2-2V5c0-1.1-.9-2-2-2zm0 16H5V5h14v14z"/></svg><svg class="a" style="left:296.5px;top:117.8px" width="19" height="19" viewBox="0 0 24 24"><path fill="#fff" d="M23 5.5V20c0 2.2-1.8 4-4 4h-7.3c-1.08 0-2.1-.43-2.85-1.19L1 14.83s1.26-1.23 1.3-1.25c.22-.19.49-.29.79-.29.22 0 .42.06.6.16.04.01 4.31 2.46 4.31 2.46V4c0-.83.67-1.5 1.5-1.5S11 3.17 11 4v7h1V1.5c0-.83.67-1.5 1.5-1.5S15 .67 15 1.5V11h1V2.5c0-.83.67-1.5 1.5-1.5s1.5.67 1.5 1.5V11h1V5.5c0-.83.67-1.5 1.5-1.5s1.5.67 1.5 1.5z"/></svg><div class="a" style="left:17px;top:137.8px;width:22.5px;height:3.4px;background:#2f9bf4;border-radius:1px"></div><div class="a" style="left:61px;top:137.8px;width:22.5px;height:3.4px;background:#2f9bf4;border-radius:1px"></div><div class="a" style="left:156px;top:137.8px;width:22.5px;height:3.4px;background:#2f9bf4;border-radius:1px"></div><svg class="a" style="left:1243px;top:116px" width="24" height="24" viewBox="0 0 24 24"><path fill="#fff" d="M3 18h18v-2H3v2zm0-5h18v-2H3v2zm0-7v2h18V6H3z"/></svg><div class="a" style="left:9px;top:151px;width:945px;height:506.5px;background:linear-gradient(#6b6b70,#77777c 60px,#77777c);box-shadow:inset 1px 1px 0 #909094,inset -1px -1px 0 #808085,0 0 0 1px #3c3d40;box-sizing:border-box"></div><svg class="a" style="left:20px;top:154.5px" width="18" height="18" viewBox="0 0 24 24"><path fill="#fff" d="M20 18c1.1 0 1.99-.9 1.99-2L22 6c0-1.1-.9-2-2-2H4c-1.1 0-2 .9-2 2v10c0 1.1.9 2 2 2H0v2h24v-2h-4zM4 6h16v10H4V6z"/></svg><div class="a t fa" dir="rtl" style="right:354.4px;top:151.8px;line-height:20px;font-size:10.8px;color:#fff;transform:scaleX(0.82);transform-origin:right center;font-weight:bold;">استاد آژ دبیر ریاضی</div><svg class="a" style="left:930px;top:153.5px" width="19" height="19" viewBox="0 0 24 24"><path fill="#fff" d="M12 8c1.1 0 2-.9 2-2s-.9-2-2-2-2 .9-2 2 .9 2 2 2zm0 2c-1.1 0-2 .9-2 2s.9 2 2 2 2-.9 2-2-.9-2-2-2zm0 6c-1.1 0-2 .9-2 2s.9 2 2 2 2-.9 2-2-.9-2-2-2z"/></svg><div class="a" style="left:18px;top:178px;width:927px;height:471.3px;background:#8c8c90"></div><div class="a" style="left:19px;top:179px;width:925px;height:469.3px;background:#000;overflow:hidden"><div class="a" style="left:45px;top:0px;width:834px;height:470px;background:linear-gradient(#dee1e6 0 19.3px,#fff 19.3px 39.4px,#6d6d72 39.4px 70px,#4a4b4f 70px)"></div><div class="a" style="left:45px;top:2.4px;width:1280px;height:720px;transform:scale(0.6495);transform-origin:0 0"><div class="f n"><div class="a" style="left:0px;top:0px;width:1280px;height:26px;background:#e0e3e8"></div><div class="a" style="left:5px;top:0px;width:202px;height:27px;background:#fff;border-radius:6px 6px 0 0"></div><div class="a" style="left:-1px;top:20px;width:6px;height:6px;background:radial-gradient(circle at 0 0,rgba(255,255,255,0) 5.5px,#fff 6px)"></div><div class="a" style="left:207px;top:20px;width:6px;height:6px;background:radial-gradient(circle at 100% 0,rgba(255,255,255,0) 5.5px,#fff 6px)"></div><div class="a" style="left:0px;top:26px;width:1280px;height:31px;background:#fff"></div><div class="a" style="left:0px;top:57px;width:1280px;height:1.3px;background:#3a3a3e"></div><svg class="a" style="left:16px;top:5px" width="15" height="14" viewBox="0 0 15 14"><circle cx="5.5" cy="5.5" r="3.6" fill="none" stroke="#1e88e5" stroke-width="1.8"/><circle cx="10.8" cy="9.5" r="2.5" fill="#fff" stroke="#42a5f5" stroke-width="1.5"/></svg><div class="a" style="left:38px;top:2px;width:128px;height:20px;overflow:hidden"><div class="t" dir="ltr" style="position:absolute;right:-5px;top:0;line-height:20px;font-size:11px;color:#3c4043;white-space:nowrap;letter-spacing:-.42px">classroomostadazh - <span class="fa" style="display:inline-block;letter-spacing:0;font-size:10.5px;transform:scaleX(.9);transform-origin:left center">اسکای‌روم</span></div></div><div class="a" style="left:38px;top:2px;width:12px;height:20px;background:linear-gradient(90deg,#fff,rgba(255,255,255,0))"></div><svg class="a" style="left:169px;top:6px" width="12" height="12" viewBox="0 0 12 12"><circle cx="6" cy="6" r="5.2" fill="#fff" stroke="#d93025" stroke-width="1"/><circle cx="6" cy="6" r="3.2" fill="#e8110f"/></svg><svg class="a" style="left:189px;top:7px" width="10" height="10" viewBox="0 0 10 10"><path d="M1.5 1.5l7 7M8.5 1.5l-7 7" stroke="#202124" stroke-width="1.5" fill="none"/></svg><svg class="a" style="left:220px;top:6px" width="12" height="12" viewBox="0 0 12 12"><path d="M6 1v10M1 6h10" stroke="#202124" stroke-width="1.7" fill="none"/></svg><svg class="a" style="left:12px;top:35px" width="13" height="13" viewBox="0 0 13 13"><path d="M12 6.5H2M6.3 1.8L1.6 6.5l4.7 4.7" stroke="#202124" stroke-width="1.5" fill="none"/></svg><svg class="a" style="left:39px;top:35px" width="13" height="13" viewBox="0 0 13 13"><path d="M1 6.5h10M6.7 1.8l4.7 4.7-4.7 4.7" stroke="#b4b7bb" stroke-width="1.5" fill="none"/></svg><svg class="a" style="left:65px;top:34px" width="14" height="14" viewBox="0 0 14 14"><path d="M11.7 4.8A5.2 5.2 0 1 0 12.2 8.3" stroke="#202124" stroke-width="1.5" fill="none"/><path d="M12.6 1.2v4.2H8.4z" fill="#202124"/></svg><div class="a" style="left:92px;top:30px;width:1020px;height:23px;background:#f1f3f4;border-radius:12px"></div><svg class="a" style="left:101px;top:36px" width="9" height="11" viewBox="0 0 9 11"><rect x=".5" y="4.5" width="8" height="6" rx="1" fill="#4d5156"/><path d="M2.3 4.5V3.2a2.2 2.2 0 0 1 4.4 0v1.3" stroke="#4d5156" stroke-width="1.2" fill="none"/></svg><div class="a t" style="left:119px;top:31.5px;line-height:20px;font-size:11.7px;color:#5f6368;"><span style="color:#202124">skyroom.online</span>/ch/ostad.azh67/riazi789</div><svg class="a" style="left:1038px;top:35px" width="14" height="14" viewBox="0 0 14 14"><circle cx="5.7" cy="5.7" r="4.3" stroke="#3c4043" stroke-width="1.3" fill="none"/><path d="M9 9l4 4M3.7 5.7h4M5.7 3.7v4" stroke="#3c4043" stroke-width="1.3" fill="none"/></svg><svg class="a" style="left:1064px;top:34px" width="16" height="15" viewBox="0 0 16 15"><path d="M5 6H1.7v8h10.6V10" stroke="#5f6368" stroke-width="1.3" fill="none"/><path d="M5.5 10.5c.5-3.5 2.5-5.3 6-5.5V2.2L15.3 6l-3.8 3.8V7.2c-2.5 0-4.3 1-6 3.3z" stroke="#5f6368" stroke-width="1.2" fill="none"/></svg><svg class="a" style="left:1090px;top:34px" width="16" height="15" viewBox="0 0 16 15"><path d="M8 1.5l1.9 4.2 4.6.4-3.5 3 1.1 4.5L8 11.2l-4.1 2.4L5 9.1l-3.5-3 4.6-.4z" stroke="#3c4043" stroke-width="1.3" fill="none" stroke-linejoin="round"/></svg><div class="a" style="left:1125px;top:35px;width:14px;height:14px;background:#b30b00;border-radius:2.5px"><svg width="14" height="14" viewBox="0 0 14 14"><path d="M3 10.5c2.5-1 4.2-4 4-7.5-.6 3 1 6 4 6.3-2.5-.3-5.5.2-8 1.2z" stroke="#fff" stroke-width="1.1" fill="none"/></svg></div><svg class="a" style="left:1151px;top:35px" width="14" height="14" viewBox="0 0 24 24"><path fill="#3c4043" d="M20.5 11H19V7c0-1.1-.9-2-2-2h-4V3.5a2.5 2.5 0 0 0-5 0V5H4c-1.1 0-1.99.9-1.99 2v3.8H3.5c1.49 0 2.7 1.21 2.7 2.7s-1.21 2.7-2.7 2.7H2V20c0 1.1.9 2 2 2h3.8v-1.5c0-1.49 1.21-2.7 2.7-2.7 1.49 0 2.7 1.21 2.7 2.7V22H17c1.1 0 2-.9 2-2v-4h1.5a2.5 2.5 0 0 0 0-5z"/></svg><svg class="a" style="left:1177px;top:35px" width="15" height="14" viewBox="0 0 15 14"><path d="M1 2.5h9M1 6h9M1 9.5h5.5" stroke="#3c4043" stroke-width="1.4" fill="none"/><path d="M12.3 2v7.5" stroke="#3c4043" stroke-width="1.3"/><circle cx="10.8" cy="10.3" r="1.9" fill="#3c4043"/><path d="M12.3 2h2.5v1.8h-2.5z" fill="#3c4043"/></svg><div class="a" style="left:1205.5px;top:36px;width:13px;height:12px;border:1.5px solid #3c4043;border-radius:1.5px;box-sizing:border-box;background:linear-gradient(90deg,#fff 55%,#3c4043 55%)"></div><div class="a" style="left:1231px;top:33px;width:18px;height:18px;border-radius:50%;overflow:hidden;background:linear-gradient(135deg,#e8e4dc 0 38%,#2b2b33 38% 62%,#3f7fc8 62%)"><div style="position:absolute;left:6.5px;top:2.5px;width:7px;height:8px;border-radius:50%;background:#c99572"></div><div style="position:absolute;left:5.5px;top:1px;width:9px;height:5px;border-radius:50% 50% 30% 30%;background:#1d1d22"></div><div style="position:absolute;left:2px;top:11px;width:15px;height:9px;border-radius:50% 50% 0 0;background:#4a8fd6"></div></div><svg class="a" style="left:1263px;top:35px" width="4" height="14" viewBox="0 0 4 14"><circle cx="2" cy="2" r="1.3" fill="#3c4043"/><circle cx="2" cy="7" r="1.3" fill="#3c4043"/><circle cx="2" cy="12" r="1.3" fill="#3c4043"/></svg><svg class="a" style="left:1144px;top:7px" width="11" height="7" viewBox="0 0 11 7"><path d="M1 1l4.5 4.5L10 1" stroke="#202124" stroke-width="1.1" fill="none"/></svg><div class="a" style="left:1183px;top:10px;width:10px;height:1.2px;background:#202124"></div><div class="a" style="left:1221px;top:6px;width:8px;height:8px;border:1.1px solid #202124;border-radius:1.5px;box-sizing:border-box"></div><svg class="a" style="left:1222.5px;top:4.5px" width="9" height="9" viewBox="0 0 9 9"><path d="M.5.6h6.2a1.7 1.7 0 0 1 1.7 1.7V8" stroke="#202124" stroke-width="1.1" fill="none"/></svg><svg class="a" style="left:1259px;top:5px" width="11" height="11" viewBox="0 0 11 11"><path d="M1 1l9 9M10 1l-9 9" stroke="#202124" stroke-width="1.1" fill="none"/></svg><div class="a" style="left:0px;top:58px;width:1280px;height:46.5px;background:linear-gradient(#66666b,#737378)"></div><div class="a" style="left:0px;top:104px;width:1280px;height:1.2px;background:#8e8e92"></div><div class="a" style="left:0px;top:105px;width:1280px;height:581px;background:#4a4d50"></div><svg class="a" style="left:8.6px;top:68.6px" width="23.4" height="23.4" viewBox="0 0 24 24"><path fill="#fff" d="M11.99 2C6.47 2 2 6.48 2 12s4.47 10 9.99 10C17.52 22 22 17.52 22 12S17.52 2 11.99 2zM12 20c-4.42 0-8-3.58-8-8s3.58-8 8-8 8 3.58 8 8-3.58 8-8 8zm.5-13H11v6l5.25 3.15.75-1.23-4.5-2.67z"/></svg><div class="a t" style="left:35px;top:69.3px;line-height:20px;font-size:13.7px;color:#fff;letter-spacing:0">55:35</div><svg class="a" style="left:1244.15px;top:65.5px" width="31.5" height="31.5" viewBox="0 0 24 24"><path fill="#ececee" d="M12 2C6.48 2 2 6.48 2 12s4.48 10 10 10 10-4.48 10-10S17.52 2 12 2zm0 3c1.66 0 3 1.34 3 3s-1.34 3-3 3-3-1.34-3-3 1.34-3 3-3zm0 14.2c-2.5 0-4.71-1.28-6-3.22.03-1.99 4-3.08 6-3.08 1.99 0 5.97 1.09 6 3.08-1.29 1.94-3.5 3.22-6 3.22z"/></svg><div class="a t fa" dir="rtl" style="right:42.6px;top:70.8px;line-height:20px;font-size:13.4px;color:#fff;transform:scaleX(0.875);transform-origin:right center;">استاد آژ دبیر ریاضی</div><div class="a t" style="left:1132px;top:70.6px;line-height:20px;font-size:13.4px;color:#fff;">»</div><div class="a t" style="left:1015.8px;top:71px;line-height:20px;font-size:13.4px;color:#fff;letter-spacing:-.26px;">classroomostadazh</div><div class="a" style="left:-1px;top:20px;width:6px;height:6px;background:radial-gradient(circle at 0 0,rgba(255,255,255,0) 5.5px,#fff 6px)"></div><div class="a" style="left:207px;top:20px;width:6px;height:6px;background:radial-gradient(circle at 100% 0,rgba(255,255,255,0) 5.5px,#fff 6px)"></div><svg class="a" style="left:17px;top:116px" width="22" height="22" viewBox="0 0 24 24"><path fill="#fff" d="M3 9v6h4l5 5V4L7 9H3zm13.5 3c0-1.77-1.02-3.29-2.5-4.03v8.05c1.48-.73 2.5-2.25 2.5-4.02zM14 3.23v2.06c2.89.86 5 3.54 5 6.71s-2.11 5.85-5 6.71v2.06c4.01-.91 7-4.49 7-8.77s-2.99-7.86-7-8.77z"/></svg><svg class="a" style="left:61px;top:116px" width="22" height="22" viewBox="0 0 24 24"><path fill="#fff" d="M12 14c1.66 0 2.99-1.34 2.99-3L15 5c0-1.66-1.34-3-3-3S9 3.34 9 5v6c0 1.66 1.34 3 3 3zm5.3-3c0 3-2.54 5.1-5.3 5.1S6.7 14 6.7 11H5c0 3.41 2.72 6.23 6 6.72V21h2v-3.28c3.28-.48 6-3.3 6-6.72h-1.7z"/></svg><svg class="a" style="left:108.5px;top:116.5px" width="21" height="21" viewBox="0 0 24 24"><path fill="#fff" d="M17 10.5V7c0-.55-.45-1-1-1H4c-.55 0-1 .45-1 1v10c0 .55.45 1 1 1h12c.55 0 1-.45 1-1v-3.5l4 4v-11l-4 4z"/></svg><svg class="a" style="left:156px;top:116px" width="22" height="22" viewBox="0 0 24 24"><path fill="#fff" d="M20 18c1.1 0 1.99-.9 1.99-2L22 6c0-1.1-.9-2-2-2H4c-1.1 0-2 .9-2 2v10c0 1.1.9 2 2 2H0v2h24v-2h-4zM4 6h16v10H4V6z"/></svg><svg class="a" style="left:204px;top:117px" width="20" height="20" viewBox="0 0 24 24"><path fill="#fff" d="M7 14c-1.66 0-3 1.34-3 3 0 1.31-1.16 2-2 2 .92 1.22 2.49 2 4 2 2.21 0 4-1.79 4-4 0-1.66-1.34-3-3-3zm13.71-9.37l-1.34-1.34a.996.996 0 0 0-1.41 0L9 12.25 11.75 15l8.96-8.96a.996.996 0 0 0 0-1.41z"/></svg><svg class="a" style="left:252.55px;top:117.05px" width="21.5" height="21.5" viewBox="0 0 24 24"><path fill="#fff" d="M10 8v8l5-4-5-4zm9-5H5c-1.1 0-2 .9-2 2v14c0 1.1.9 2 2 2h14c1.1 0 2-.9 2-2V5c0-1.1-.9-2-2-2zm0 16H5V5h14v14z"/></svg><svg class="a" style="left:296.5px;top:117.8px" width="19" height="19" viewBox="0 0 24 24"><path fill="#fff" d="M23 5.5V20c0 2.2-1.8 4-4 4h-7.3c-1.08 0-2.1-.43-2.85-1.19L1 14.83s1.26-1.23 1.3-1.25c.22-.19.49-.29.79-.29.22 0 .42.06.6.16.04.01 4.31 2.46 4.31 2.46V4c0-.83.67-1.5 1.5-1.5S11 3.17 11 4v7h1V1.5c0-.83.67-1.5 1.5-1.5S15 .67 15 1.5V11h1V2.5c0-.83.67-1.5 1.5-1.5s1.5.67 1.5 1.5V11h1V5.5c0-.83.67-1.5 1.5-1.5s1.5.67 1.5 1.5z"/></svg><div class="a" style="left:17px;top:137.8px;width:22.5px;height:3.4px;background:#2f9bf4;border-radius:1px"></div><div class="a" style="left:61px;top:137.8px;width:22.5px;height:3.4px;background:#2f9bf4;border-radius:1px"></div><div class="a" style="left:156px;top:137.8px;width:22.5px;height:3.4px;background:#2f9bf4;border-radius:1px"></div><svg class="a" style="left:1243px;top:116px" width="24" height="24" viewBox="0 0 24 24"><path fill="#fff" d="M3 18h18v-2H3v2zm0-5h18v-2H3v2zm0-7v2h18V6H3z"/></svg><div class="a" style="left:9px;top:151px;width:945px;height:506.5px;background:linear-gradient(#6b6b70,#77777c 60px,#77777c);box-shadow:inset 1px 1px 0 #909094,inset -1px -1px 0 #808085,0 0 0 1px #3c3d40;box-sizing:border-box"></div><svg class="a" style="left:20px;top:154.5px" width="18" height="18" viewBox="0 0 24 24"><path fill="#fff" d="M20 18c1.1 0 1.99-.9 1.99-2L22 6c0-1.1-.9-2-2-2H4c-1.1 0-2 .9-2 2v10c0 1.1.9 2 2 2H0v2h24v-2h-4zM4 6h16v10H4V6z"/></svg><div class="a t fa" dir="rtl" style="right:354.4px;top:151.8px;line-height:20px;font-size:10.8px;color:#fff;transform:scaleX(0.82);transform-origin:right center;font-weight:bold;">استاد آژ دبیر ریاضی</div><svg class="a" style="left:930px;top:153.5px" width="19" height="19" viewBox="0 0 24 24"><path fill="#fff" d="M12 8c1.1 0 2-.9 2-2s-.9-2-2-2-2 .9-2 2 .9 2 2 2zm0 2c-1.1 0-2 .9-2 2s.9 2 2 2 2-.9 2-2-.9-2-2-2zm0 6c-1.1 0-2 .9-2 2s.9 2 2 2 2-.9 2-2-.9-2-2-2z"/></svg><div class="a" style="left:18px;top:178px;width:927px;height:471.3px;background:#8c8c90"></div><div class="a" style="left:19px;top:179px;width:925px;height:469.3px;background:#000;overflow:hidden"><div class="a" style="left:45px;top:0px;width:834px;height:470px;background:linear-gradient(#dfe1e5 0 5%,#fff 5% 12%,#6d6d72 12% 22%,#3f4044 22% 93%,#e4e4e4 93%)"></div></div><div class="a" style="left:958px;top:151px;width:316px;height:216px;background:linear-gradient(#6b6b70,#77777c 60px,#77777c);box-shadow:inset 1px 1px 0 #909094,inset -1px -1px 0 #808085,0 0 0 1px #3c3d40;box-sizing:border-box"></div><svg class="a" style="left:968.5px;top:154px" width="19" height="19" viewBox="0 0 24 24"><path fill="#fff" d="M16 11c1.66 0 2.99-1.34 2.99-3S17.66 5 16 5c-1.66 0-3 1.34-3 3s1.34 3 3 3zm-8 0c1.66 0 2.99-1.34 2.99-3S9.66 5 8 5C6.34 5 5 6.34 5 8s1.34 3 3 3zm0 2c-2.33 0-7 1.17-7 3.5V19h14v-2.5c0-2.33-4.67-3.5-7-3.5zm8 0c-.29 0-.62.02-.97.05 1.16.84 1.97 1.97 1.97 3.45V19h6v-2.5c0-2.33-4.67-3.5-7-3.5z"/></svg><div class="a t" style="left:990.5px;top:153px;line-height:20px;font-size:13px;color:#fff;letter-spacing:-.3px">10</div><div class="a t fa" dir="rtl" style="right:34px;top:152.5px;line-height:20px;font-size:12px;color:#fff;transform:scaleX(0.86);transform-origin:right center;">کاربران</div><svg class="a" style="left:1251px;top:153.5px" width="19" height="19" viewBox="0 0 24 24"><path fill="#fff" d="M12 8c1.1 0 2-.9 2-2s-.9-2-2-2-2 .9-2 2 .9 2 2 2zm0 2c-1.1 0-2 .9-2 2s.9 2 2 2 2-.9 2-2-.9-2-2-2zm0 6c-1.1 0-2 .9-2 2s.9 2 2 2 2-.9 2-2-.9-2-2-2z"/></svg><div class="a" style="left:967.5px;top:178.5px;width:298px;height:178.5px;background:linear-gradient(90deg,#8c8c90 0 99.4%,#606065 99.4%)"></div><div class="a" style="left:968.5px;top:179.5px;width:296px;height:176.5px;background:#323539;overflow:hidden"><svg class="a" style="left:270.7px;top:6px" width="19" height="19" viewBox="0 0 24 24"><path fill="#42a5f5" d="M12 12c2.21 0 4-1.79 4-4s-1.79-4-4-4-4 1.79-4 4 1.79 4 4 4zm0 2c-2.67 0-8 1.34-8 4v2h16v-2c0-2.66-5.33-4-8-4z"/></svg><div class="a t fa" dir="rtl" style="right:27.5px;top:6.5px;line-height:20px;font-weight:bold;font-size:12.5px;color:#fff;transform:scaleX(0.72);transform-origin:right center">استاد آژ دبیر ریاضی</div><svg class="a" style="left:270.7px;top:31.85px" width="19" height="19" viewBox="0 0 24 24"><path fill="#fff" d="M12 12c2.21 0 4-1.79 4-4s-1.79-4-4-4-4 1.79-4 4 1.79 4 4 4zm0 2c-2.67 0-8 1.34-8 4v2h16v-2c0-2.66-5.33-4-8-4z"/></svg><div class="a t" style="right:27.5px;top:32.35px;line-height:20px;font-size:12.3px;color:#fff;letter-spacing:-.35px">asefeh</div><svg class="a" style="left:270.7px;top:57.7px" width="19" height="19" viewBox="0 0 24 24"><path fill="#fff" d="M12 12c2.21 0 4-1.79 4-4s-1.79-4-4-4-4 1.79-4 4 1.79 4 4 4zm0 2c-2.67 0-8 1.34-8 4v2h16v-2c0-2.66-5.33-4-8-4z"/></svg><div class="a t" style="right:27.5px;top:58.2px;line-height:20px;font-size:12.3px;color:#fff;letter-spacing:-.35px">pariya ghanbari</div><svg class="a" style="left:270.7px;top:83.55px" width="19" height="19" viewBox="0 0 24 24"><path fill="#fff" d="M12 12c2.21 0 4-1.79 4-4s-1.79-4-4-4-4 1.79-4 4 1.79 4 4 4zm0 2c-2.67 0-8 1.34-8 4v2h16v-2c0-2.66-5.33-4-8-4z"/></svg><div class="a t fa" dir="rtl" style="right:27.5px;top:84.05px;line-height:20px;font-size:12.5px;color:#fff;transform:scaleX(0.86);transform-origin:right center">فاطمه رئیسی</div><svg class="a" style="left:270.7px;top:109.4px" width="19" height="19" viewBox="0 0 24 24"><path fill="#fff" d="M12 12c2.21 0 4-1.79 4-4s-1.79-4-4-4-4 1.79-4 4 1.79 4 4 4zm0 2c-2.67 0-8 1.34-8 4v2h16v-2c0-2.66-5.33-4-8-4z"/></svg><div class="a t" style="right:27.5px;top:109.9px;line-height:20px;font-size:12.3px;color:#fff;letter-spacing:-.35px">mehdi akbari</div><svg class="a" style="left:270.7px;top:135.25px" width="19" height="19" viewBox="0 0 24 24"><path fill="#fff" d="M12 12c2.21 0 4-1.79 4-4s-1.79-4-4-4-4 1.79-4 4 1.79 4 4 4zm0 2c-2.67 0-8 1.34-8 4v2h16v-2c0-2.66-5.33-4-8-4z"/></svg><div class="a t fa" dir="rtl" style="right:27.5px;top:135.75px;line-height:20px;font-size:12.5px;color:#fff;transform:scaleX(0.86);transform-origin:right center">امیر رضا ابراهیمیان</div><svg class="a" style="left:270.7px;top:161.1px" width="19" height="19" viewBox="0 0 24 24"><path fill="#fff" d="M12 12c2.21 0 4-1.79 4-4s-1.79-4-4-4-4 1.79-4 4 1.79 4 4 4zm0 2c-2.67 0-8 1.34-8 4v2h16v-2c0-2.66-5.33-4-8-4z"/></svg><div class="a t" style="right:27.5px;top:161.6px;line-height:20px;font-size:12.3px;color:#fff;letter-spacing:-.35px">maryam komgo</div><svg class="a" style="left:9px;top:10.2px" width="17" height="17" viewBox="0 0 24 24"><path fill="#2196f3" d="M12 14c1.66 0 2.99-1.34 2.99-3L15 5c0-1.66-1.34-3-3-3S9 3.34 9 5v6c0 1.66 1.34 3 3 3zm5.3-3c0 3-2.54 5.1-5.3 5.1S6.7 14 6.7 11H5c0 3.41 2.72 6.23 6 6.72V21h2v-3.28c3.28-.48 6-3.3 6-6.72h-1.7z"/></svg><svg class="a" style="left:45.5px;top:11.3px" width="17" height="17" viewBox="0 0 24 24"><path fill="#fff" d="M20 18c1.1 0 1.99-.9 1.99-2L22 6c0-1.1-.9-2-2-2H4c-1.1 0-2 .9-2 2v10c0 1.1.9 2 2 2H0v2h24v-2h-4zM4 6h16v10H4V6z"/></svg><svg class="a" style="left:9px;top:37px" width="17" height="17" viewBox="0 0 24 24"><path fill="#fff" d="M12 14c1.66 0 2.99-1.34 2.99-3L15 5c0-1.66-1.34-3-3-3S9 3.34 9 5v6c0 1.66 1.34 3 3 3zm5.3-3c0 3-2.54 5.1-5.3 5.1S6.7 14 6.7 11H5c0 3.41 2.72 6.23 6 6.72V21h2v-3.28c3.28-.48 6-3.3 6-6.72h-1.7z"/></svg></div><div class="a" style="left:958px;top:377px;width:316px;height:280.5px;background:linear-gradient(#6b6b70,#77777c 60px,#77777c);box-shadow:inset 1px 1px 0 #909094,inset -1px -1px 0 #808085,0 0 0 1px #3c3d40;box-sizing:border-box"></div><svg class="a" style="left:970.5px;top:381.5px" width="17" height="17" viewBox="0 0 24 24"><path fill="#fff" d="M20 2H4c-1.1 0-1.99.9-1.99 2L2 22l4-4h14c1.1 0 2-.9 2-2V4c0-1.1-.9-2-2-2zM6 9h12v2H6V9zm8 5H6v-2h8v2zm4-6H6V6h12v2z"/></svg><svg class="a" style="left:1251px;top:380px" width="19" height="19" viewBox="0 0 24 24"><path fill="#fff" d="M12 8c1.1 0 2-.9 2-2s-.9-2-2-2-2 .9-2 2 .9 2 2 2zm0 2c-1.1 0-2 .9-2 2s.9 2 2 2 2-.9 2-2-.9-2-2-2zm0 6c-1.1 0-2 .9-2 2s.9 2 2 2 2-.9 2-2-.9-2-2-2z"/></svg><div class="a" style="left:967.5px;top:405px;width:298px;height:208px;background:linear-gradient(90deg,#85858a 0 99.4%,#5a5a5f 99.4%)"></div><div class="a" style="left:968.5px;top:406px;width:296px;height:206px;background:#323539"></div><div class="a" style="left:1124px;top:406.3px;width:138px;height:28.7px;background:#7f7f84;border-radius:2px;box-shadow:0 0 0 .5px #8b8b90,1.2px 1.2px 1.5px rgba(20,20,24,.65)"></div><svg class="a" style="left:1129.7px;top:413.2px" width="14.6" height="14.6" viewBox="0 0 36 36"><circle cx="18" cy="18" r="16.5" fill="#ffcc4d" stroke="#2b2b2b" stroke-width="2.6"/><path d="M9.5 19.5c1.2 5.2 4.6 8.3 8.5 8.3s7.3-3.1 8.5-8.3c-5.5 1.3-11.5 1.3-17 0z" fill="#5d4037"/><path d="M8 14.5c1.5-2.3 4.5-2.3 6 0M22 14.5c1.5-2.3 4.5-2.3 6 0" fill="none" stroke="#5d4037" stroke-width="2"/><path d="M3.5 18.5c0 3.3 1.8 5 4.2 5s3.3-2.5 1.8-5.5c-2 .9-4 .9-6 .5zM32.5 18.5c0 3.3-1.8 5-4.2 5s-3.3-2.5-1.8-5.5c2 .9 4 .9 6 .5z" fill="#5dadec"/></svg><div class="a" style="left:1124px;top:441.3px;width:138px;height:52px;background:#7f7f84;border-radius:2px;box-shadow:0 0 0 .5px #8b8b90,1.2px 1.2px 1.5px rgba(20,20,24,.65)"></div><div class="a t" style="right:22.5px;top:444.5px;line-height:20px;font-size:12px;color:#fff;font-weight:bold;letter-spacing:-.76px;">maniya salehi</div><div class="a t fa" dir="rtl" style="right:22.5px;top:468.5px;line-height:20px;font-size:12.5px;color:#fff;transform:scaleX(0.92);transform-origin:right center;">دختر خاله ها</div><svg class="a" style="left:1183.7px;top:471.2px" width="14.6" height="14.6" viewBox="0 0 36 36"><circle cx="18" cy="18" r="16.5" fill="#ffcc4d" stroke="#2b2b2b" stroke-width="2.6"/><path d="M9.5 19.5c1.2 5.2 4.6 8.3 8.5 8.3s7.3-3.1 8.5-8.3c-5.5 1.3-11.5 1.3-17 0z" fill="#5d4037"/><path d="M8 14.5c1.5-2.3 4.5-2.3 6 0M22 14.5c1.5-2.3 4.5-2.3 6 0" fill="none" stroke="#5d4037" stroke-width="2"/><path d="M3.5 18.5c0 3.3 1.8 5 4.2 5s3.3-2.5 1.8-5.5c-2 .9-4 .9-6 .5zM32.5 18.5c0 3.3-1.8 5-4.2 5s-3.3-2.5-1.8-5.5c2 .9 4 .9 6 .5z" fill="#5dadec"/></svg><div class="a" style="left:1124px;top:499.3px;width:138px;height:52.5px;background:#7f7f84;border-radius:2px;box-shadow:0 0 0 .5px #8b8b90,1.2px 1.2px 1.5px rgba(20,20,24,.65)"></div><div class="a t" style="right:22.5px;top:502.5px;line-height:20px;font-size:12px;color:#fff;font-weight:bold;letter-spacing:-.76px;">maryam.yaghoobzadeh</div><svg class="a" style="left:1129.7px;top:529.7px" width="14.6" height="14.6" viewBox="0 0 36 36"><circle cx="18" cy="18" r="16.5" fill="#ffcc4d" stroke="#2b2b2b" stroke-width="2.6"/><path d="M9.5 19.5c1.2 5.2 4.6 8.3 8.5 8.3s7.3-3.1 8.5-8.3c-5.5 1.3-11.5 1.3-17 0z" fill="#5d4037"/><path d="M8 14.5c1.5-2.3 4.5-2.3 6 0M22 14.5c1.5-2.3 4.5-2.3 6 0" fill="none" stroke="#5d4037" stroke-width="2"/><path d="M3.5 18.5c0 3.3 1.8 5 4.2 5s3.3-2.5 1.8-5.5c-2 .9-4 .9-6 .5zM32.5 18.5c0 3.3-1.8 5-4.2 5s-3.3-2.5-1.8-5.5c2 .9 4 .9 6 .5z" fill="#5dadec"/></svg><svg class="a" style="left:1145.7px;top:529.7px" width="14.6" height="14.6" viewBox="0 0 36 36"><circle cx="18" cy="18" r="16.5" fill="#ffcc4d" stroke="#2b2b2b" stroke-width="2.6"/><path d="M9.5 19.5c1.2 5.2 4.6 8.3 8.5 8.3s7.3-3.1 8.5-8.3c-5.5 1.3-11.5 1.3-17 0z" fill="#5d4037"/><path d="M8 14.5c1.5-2.3 4.5-2.3 6 0M22 14.5c1.5-2.3 4.5-2.3 6 0" fill="none" stroke="#5d4037" stroke-width="2"/><path d="M3.5 18.5c0 3.3 1.8 5 4.2 5s3.3-2.5 1.8-5.5c-2 .9-4 .9-6 .5zM32.5 18.5c0 3.3-1.8 5-4.2 5s-3.3-2.5-1.8-5.5c2 .9 4 .9 6 .5z" fill="#5dadec"/></svg><div class="a" style="left:1124px;top:557.5px;width:138px;height:52.3px;background:#7f7f84;border-radius:2px;box-shadow:0 0 0 .5px #8b8b90,1.2px 1.2px 1.5px rgba(20,20,24,.65)"></div><div class="a t" style="right:22.5px;top:560.5px;line-height:20px;font-size:12px;color:#fff;font-weight:bold;letter-spacing:-.74px;">mohadeseh jahanbani</div><div class="a t fa" dir="rtl" style="right:22px;top:585.5px;line-height:20px;font-size:12.5px;color:#fff;transform:scaleX(0.91);transform-origin:right center;">'۶ مگه نمیشه ۲۱۶؟</div><div class="a" style="left:967.5px;top:617px;width:298px;height:31.5px;background:#85858a"></div><div class="a" style="left:968.5px;top:618px;width:296px;height:29.5px;background:#323539"></div><svg class="a" style="left:970.5px;top:623px" width="19" height="19" viewBox="0 0 24 24"><path fill="#fff" d="M21.99 21L1 12 21.99 3 22 10 7 12l15 2z"/></svg><svg class="a" style="left:991.5px;top:623px" width="19" height="19" viewBox="0 0 24 24"><path fill="#fff" d="M11.99 2C6.47 2 2 6.48 2 12s4.47 10 9.99 10C17.52 22 22 17.52 22 12S17.52 2 11.99 2zM12 20c-4.42 0-8-3.58-8-8s3.58-8 8-8 8 3.58 8 8-3.58 8-8 8zm3.5-9c.83 0 1.5-.67 1.5-1.5S16.33 8 15.5 8 14 8.67 14 9.5s.67 1.5 1.5 1.5zm-7 0c.83 0 1.5-.67 1.5-1.5S9.33 8 8.5 8 7 8.67 7 9.5 7.67 11 8.5 11zm3.5 6.5c2.33 0 4.31-1.46 5.11-3.5H6.89c.8 2.04 2.78 3.5 5.11 3.5z"/></svg><div class="a t fa" dir="rtl" style="right:21px;top:622.5px;line-height:20px;font-size:12.5px;color:#a6a6aa;transform:scaleX(0.89);transform-origin:right center;">پیام خود را وارد کنید</div><div class="a t fa" style="left:20.5px;top:661px;line-height:20px;font-size:12px;color:#fff;"><span style="display:inline-block;transform:scaleX(.92);transform-origin:left center">اسکای‌روم</span></div><div class="a t" style="left:67.7px;top:658.7px;line-height:20px;font-size:9.5px;color:#fff;font-weight:bold;">™</div><div class="a t" style="left:9.3px;top:661.5px;line-height:20px;font-size:13.5px;color:#fff;">©</div><div class="a" style="left:0px;top:686px;width:1280px;height:34px;background:#fff"></div><div class="a" style="left:0px;top:718px;width:1280px;height:2px;background:#111"></div><div class="a" style="left:0px;top:686px;width:100px;height:32px;background:#c6c6c6"></div><div class="a" style="left:100px;top:686px;width:118px;height:32px;background:#fdfdfd;box-shadow:inset -1px 0 0 #ececec"></div><div class="a t" style="left:14px;top:687px;line-height:20px;font-size:13.5px;color:#f4f4f4;font-weight:bold;letter-spacing:.15px;">20 / 2:16 PI</div><div class="a" style="left:412px;top:686px;width:460.5px;height:29.5px;background:linear-gradient(#cbcbcb,#c3c3c3);border-radius:0 0 7px 7px;box-shadow:inset 0 -1.5px 0 #9b9b9b,inset 1px 0 0 #adadad,inset -1px 0 0 #adadad;overflow:hidden"><div class="a" style="left:8px;top:-6px;width:27px;height:27px;border-radius:50%;background:#f4f4f4"></div><svg class="a" style="left:11px;top:-2px" width="22" height="22" viewBox="0 0 22 22"><path d="M4 17L17 2l3 2.5L7 19.5z" fill="#c62828"/><path d="M4 17l-.8 3.5L7 19.5z" fill="#333"/><path d="M8 12.5L18.5 1" stroke="#fff" stroke-width="1"/><path d="M5 21c3-2 6-2 8-1.5s2-1 0-1.5" stroke="#444" stroke-width="1" fill="none"/></svg><svg class="a" style="left:45px;top:1px" width="22" height="18" viewBox="0 0 22 18"><path d="M1 11L10 2l8 5-9 9z" fill="#f48fb1"/><path d="M10 2l3-2 8 4.5-3 2.5z" fill="#5c8fe0"/><path d="M1 11l8 5v1.5l-8-5z" fill="#e27aa0"/></svg><svg class="a" style="left:80px;top:-1px" width="22" height="20" viewBox="0 0 22 20"><path d="M3 15.5L17 0l3.5 3L7 18.5z" fill="#f5d30a"/><path d="M5 13.5L18.5 .5" stroke="#222" stroke-width="1.6"/><path d="M3 15.5l-1.5 4L7 18.5z" fill="#8a6a3a"/><path d="M6 19.5h9l2-4-5 1.5z" fill="#f0b429"/></svg><svg class="a" style="left:121px;top:-1.5px" width="11" height="17" viewBox="0 0 12 18"><path d="M1 1l9.5 9.5H6.3l2.6 5.5-2.3 1.1L4 11.5 1 14.5z" fill="#1f2a55" stroke="#3a3f6a" stroke-width=".6"/></svg><svg class="a" style="left:148px;top:0" width="24" height="20" viewBox="0 0 24 20"><path d="M3 1.5c3 1.5 6 4.5 8 7l5-1c3 0 5 3 5 6.5 0 3-2 5-5 5-4 0-6-2-7.5-5.5-1-3-3-6-6.5-10.5z" fill="#fbe3cf" stroke="#caa27e" stroke-width=".8"/></svg><svg class="a" style="left:187px;top:-1px" width="22" height="21" viewBox="0 0 22 21"><path d="M3 0c1 2 2 4.5 2.5 7L7 2l2 5.5L11 3l1 5 5-1c2.5 1 3.5 4 3.5 7s-2.5 6-6 6c-4 0-6-2-7.5-5.5C6 12 4 8 2 4z" fill="#fbe3cf" stroke="#caa27e" stroke-width=".8"/></svg><svg class="a" style="left:221.5px;top:-2px" width="24" height="22" viewBox="0 0 24 22"><circle cx="7.5" cy="7.5" r="5.8" fill="#e9e9e9" stroke="#333" stroke-width="1.4"/><path d="M5 7.5h5M7.5 5v5" stroke="#333" stroke-width="1.3"/><path d="M12 12l7.5 7" stroke="#333" stroke-width="3.2" stroke-linecap="round"/></svg><svg class="a" style="left:253.5px;top:-2px" width="24" height="22" viewBox="0 0 24 22"><circle cx="7.5" cy="7.5" r="5.8" fill="#e9e9e9" stroke="#333" stroke-width="1.4"/><path d="M5 7.5h5" stroke="#333" stroke-width="1.3"/><path d="M12 12l7.5 7" stroke="#333" stroke-width="3.2" stroke-linecap="round"/></svg><svg class="a" style="left:287px;top:-1px" width="22" height="20" viewBox="0 0 22 20"><path d="M2 18L12 8" stroke="#e53935" stroke-width="1.2"/><path d="M11 9l8-8.5" stroke="#444" stroke-width="3"/><path d="M12.5 7.5l4-4" stroke="#eee" stroke-width="1.6"/></svg><svg class="a" style="left:322px;top:-1px" width="22" height="20" viewBox="0 0 22 20"><path d="M2.5 16L18 0" stroke="#111" stroke-width="1.3"/><circle cx="2.8" cy="16" r="1.8" fill="#111"/></svg><div class="a t" style="left:361px;top:-3px;font-family:'Liberation Serif',serif;font-weight:bold;font-style:italic;font-size:19px;line-height:22px;color:#111">A</div><div class="a" style="left:374.5px;top:-1px;width:1.2px;height:17px;background:#222"></div><div class="a" style="left:396px;top:-3px;width:18px;height:19px;background:#8fd3e8;border-left:1px dashed #2b5fa8;border-right:1px dashed #2b5fa8;box-sizing:border-box"></div><svg class="a" style="left:395px;top:9px" width="20" height="9" viewBox="0 0 20 9"><circle cx="3" cy="3" r="2" fill="none" stroke="#1f3f9f" stroke-width="1.4"/><circle cx="4" cy="6.5" r="2" fill="none" stroke="#1f3f9f" stroke-width="1.4"/><path d="M6 4l13-2M6 5.5l13 1.5" stroke="#9aa3ad" stroke-width="1.3"/></svg><div class="a" style="left:428px;top:3px;width:21px;height:10.5px;background:repeating-linear-gradient(#e8e8e8 0 1.5px,#9a9a9a 1.5px 2.6px);border:1px solid #777;border-bottom:2px solid #666;box-sizing:border-box;border-radius:1px"></div></div><div class="a" style="left:1213px;top:686px;width:64px;height:19.5px;background:linear-gradient(#c9c9c9,#bdbdbd);border-radius:0 0 5px 5px"></div><div class="a t" style="left:1229.8px;top:685.3px;line-height:20px;font-size:13.6px;color:#fff;font-weight:bold;letter-spacing:.2px;">2.0 x</div><svg class="a" style="left:980px;top:706px" width="18" height="14" viewBox="0 0 18 14"><path d="M9 0v14M1 8h16" stroke="#111" stroke-width="1.5"/></svg><div class="a" style="left:720px;top:0px;width:300.4px;height:45.8px;box-shadow:0 0 0 .8px #4a4a4a;overflow:hidden"><div class="a" style="left:0px;top:0px;width:41px;height:47px;background:linear-gradient(#b9b9b9,#8d8d8d);"></div><div class="a" style="left:9.5px;top:11px;width:22px;height:23px;background:#e4002b;border:1.2px solid #f3c9c9;border-radius:2px;box-sizing:border-box"></div><div class="a" style="left:41px;top:0px;width:24px;height:23px;background:linear-gradient(#b9b9b9,#8d8d8d);box-shadow:inset 1px 0 0 #777,inset 0 -1px 0 #777"></div><div class="a" style="left:41px;top:23px;width:24px;height:24px;background:linear-gradient(#b9b9b9,#8d8d8d);box-shadow:inset 1px 0 0 #777"></div><svg class="a" style="left:44px;top:2px" width="18" height="16" viewBox="0 0 18 16"><rect x="1" y="4" width="16" height="11" rx="2" fill="#3b4a78" stroke="#dfe6f3" stroke-width="1"/><rect x="5.5" y="1.5" width="6" height="3.5" rx="1" fill="#3b4a78" stroke="#dfe6f3" stroke-width=".8"/><circle cx="9" cy="9.5" r="3.6" fill="#6d86c6" stroke="#1c2545" stroke-width="1.2"/><circle cx="14.3" cy="6.3" r="1" fill="#f6d34a"/></svg><svg class="a" style="left:45px;top:26px" width="16" height="17" viewBox="0 0 16 17"><rect x="1.5" y="1.5" width="5" height="14" rx="1" fill="#2d7cc4" stroke="#e6eefa" stroke-width="1"/><rect x="9.5" y="1.5" width="5" height="14" rx="1" fill="#2d7cc4" stroke="#e6eefa" stroke-width="1"/></svg><div class="a" style="left:65px;top:0px;width:67px;height:47px;background:#000"></div><div class="a t" style="left:65px;top:9px;width:67px;height:26px;line-height:26px;text-align:center;font-family:'Liberation Mono',monospace;font-size:16px;letter-spacing:-2.3px;color:#041004;-webkit-text-stroke:.5px #98e898;transform:translateY(1.3px) scaleY(1.38) skewX(-6deg)">00:39:09</div><div class="a" style="left:132px;top:0px;width:95px;height:23px;background:linear-gradient(#9c9c9c,#7d7d7d);box-shadow:inset 0 -1px 0 #666"></div><div class="a t" style="left:132px;top:1px;width:95px;line-height:21px;text-align:center;font-family:'Liberation Serif',serif;font-weight:bold;font-size:12.3px;color:#fff;text-shadow:0 0 1.5px #000,0 0 1.5px #000,0 0 1px #000">1914 × 1077</div><div class="a" style="left:227px;top:0px;width:24.7px;height:23px;background:linear-gradient(#f4f4f4,#c9c9c9);box-shadow:inset 1px 0 0 #777,inset 0 -1px 0 #777"></div><div class="a" style="left:233px;top:4.5px;width:13px;height:12px;border:1.7px solid #2fae3a;box-sizing:border-box;background:#e6efe6"></div><div class="a" style="left:251.7px;top:0px;width:24.7px;height:23px;background:linear-gradient(#b9b9b9,#8d8d8d);box-shadow:inset 1px 0 0 #777,inset 0 -1px 0 #777"></div><div class="a" style="left:257.7px;top:11px;width:13px;height:3.5px;background:#3a86cf;border-radius:1px;border:.5px solid #dbe6f5"></div><div class="a" style="left:276.4px;top:0px;width:24.7px;height:23px;background:linear-gradient(#b9b9b9,#8d8d8d);box-shadow:inset 1px 0 0 #777,inset 0 -1px 0 #777"></div><svg class="a" style="left:282.4px;top:4.5px" width="13" height="13" viewBox="0 0 13 13"><path d="M2 2l9 9M11 2l-9 9" stroke="#d0021b" stroke-width="2.3" fill="none"/></svg><div class="a" style="left:132px;top:23px;width:24.142857142857142px;height:24px;background:linear-gradient(#f4f4f4,#c9c9c9);box-shadow:inset 1px 0 0 #888"></div><svg class="a" style="left:135.1px;top:26px" width="18" height="18" viewBox="0 0 18 18"><path d="M2 6.5h3.5L10 3v12l-4.5-3.5H2z" fill="#d7e6f5" stroke="#2c6fb0" stroke-width="1.2"/><path d="M12 6a4.5 4.5 0 0 1 0 6M14 4a7.5 7.5 0 0 1 0 10" stroke="#2c6fb0" stroke-width="1.3" fill="none"/></svg><div class="a" style="left:156.14285714285714px;top:23px;width:24.142857142857142px;height:24px;background:linear-gradient(#f4f4f4,#c9c9c9);box-shadow:inset 1px 0 0 #888"></div><svg class="a" style="left:160.2px;top:25px" width="16" height="20" viewBox="0 0 16 20"><rect x="5" y="1" width="6" height="11" rx="3" fill="#8fb8df" stroke="#2c6fb0" stroke-width="1"/><path d="M2.5 9.5a5.5 5.5 0 0 0 11 0M8 15v3M5 18.5h6" stroke="#2c6fb0" stroke-width="1.2" fill="none"/></svg><div class="a" style="left:180.28571428571428px;top:23px;width:24.142857142857142px;height:24px;background:linear-gradient(#b9b9b9,#8d8d8d);box-shadow:inset 1px 0 0 #888"></div><svg class="a" style="left:183.4px;top:25px" width="18" height="20" viewBox="0 0 18 20"><circle cx="9" cy="9" r="7" fill="#3f6f9f" stroke="#1f3f5f" stroke-width="1"/><circle cx="9" cy="9" r="3.8" fill="#a8c8e8" stroke="#e8f0f8" stroke-width="1"/><path d="M3.5 18.5c1-2.5 10-2.5 11 0z" fill="#3f6f9f"/></svg><div class="a" style="left:204.42857142857144px;top:23px;width:24.142857142857142px;height:24px;background:linear-gradient(#f4f4f4,#c9c9c9);box-shadow:inset 1px 0 0 #888"></div><svg class="a" style="left:209.5px;top:26px" width="14" height="19" viewBox="0 0 14 19"><path d="M2 1.5v13.5l3.3-3 2.4 5.3 2.2-1-2.4-5.2H12z" fill="#fff" stroke="#000" stroke-width="1.4" stroke-linejoin="round"/></svg><div class="a" style="left:228.57142857142856px;top:23px;width:24.142857142857142px;height:24px;background:linear-gradient(#b9b9b9,#8d8d8d);box-shadow:inset 1px 0 0 #888"></div><svg class="a" style="left:231.6px;top:26px" width="18" height="18" viewBox="0 0 18 18"><path d="M3 12l9-9 3.5 3.5-9 9L2 16.5z" fill="#2f8fd8" stroke="#1d5f9c" stroke-width="1"/><path d="M2 16.5l1-4.5 3.5 3.5z" fill="#f2d6a2"/></svg><div class="a" style="left:252.71428571428572px;top:23px;width:24.142857142857142px;height:24px;background:linear-gradient(#b9b9b9,#8d8d8d);box-shadow:inset 1px 0 0 #888"></div><svg class="a" style="left:255.8px;top:27px" width="18" height="16" viewBox="0 0 18 16"><path d="M1 2h6l1.5 2H17v11H1z" fill="#f2c230" stroke="#c8960c" stroke-width=".8"/><path d="M1 15l2.5-8H18l-2 8z" fill="#fbe36a" stroke="#c8960c" stroke-width=".6"/></svg><div class="a" style="left:276.8571428571429px;top:23px;width:24.142857142857142px;height:24px;background:linear-gradient(#b9b9b9,#8d8d8d);box-shadow:inset 1px 0 0 #888"></div><svg class="a" style="left:279.9px;top:26px" width="18" height="18" viewBox="0 0 18 18"><circle cx="9" cy="9" r="5.2" fill="none" stroke="#2f4f6f" stroke-width="3.4" stroke-dasharray="2.7 1.4"/><circle cx="9" cy="9" r="4.3" fill="#3f6587"/><circle cx="9" cy="9" r="2" fill="#9a9a9a"/></svg></div></div></div><div class="a" style="left:45px;top:0px;width:834px;height:0.8px;background:#8d5457"></div><div class="a" style="left:45px;top:0.8px;width:834px;height:1.1px;background:linear-gradient(90deg,#f6d6d6,#f2c0c0)"></div><div class="a" style="left:876.9px;top:0px;width:2.3px;height:470px;background:linear-gradient(#f3a9a9,#ee6660 12%,#ec5f58)"></div></div><div class="a" style="left:958px;top:151px;width:316px;height:216px;background:linear-gradient(#6b6b70,#77777c 60px,#77777c);box-shadow:inset 1px 1px 0 #909094,inset -1px -1px 0 #808085,0 0 0 1px #3c3d40;box-sizing:border-box"></div><svg class="a" style="left:968.5px;top:154px" width="19" height="19" viewBox="0 0 24 24"><path fill="#fff" d="M16 11c1.66 0 2.99-1.34 2.99-3S17.66 5 16 5c-1.66 0-3 1.34-3 3s1.34 3 3 3zm-8 0c1.66 0 2.99-1.34 2.99-3S9.66 5 8 5C6.34 5 5 6.34 5 8s1.34 3 3 3zm0 2c-2.33 0-7 1.17-7 3.5V19h14v-2.5c0-2.33-4.67-3.5-7-3.5zm8 0c-.29 0-.62.02-.97.05 1.16.84 1.97 1.97 1.97 3.45V19h6v-2.5c0-2.33-4.67-3.5-7-3.5z"/></svg><div class="a t" style="left:990.5px;top:153px;line-height:20px;font-size:13px;color:#fff;letter-spacing:-.3px">10</div><div class="a t fa" dir="rtl" style="right:34px;top:152.5px;line-height:20px;font-size:12px;color:#fff;transform:scaleX(0.86);transform-origin:right center;">کاربران</div><svg class="a" style="left:1251px;top:153.5px" width="19" height="19" viewBox="0 0 24 24"><path fill="#fff" d="M12 8c1.1 0 2-.9 2-2s-.9-2-2-2-2 .9-2 2 .9 2 2 2zm0 2c-1.1 0-2 .9-2 2s.9 2 2 2 2-.9 2-2-.9-2-2-2zm0 6c-1.1 0-2 .9-2 2s.9 2 2 2 2-.9 2-2-.9-2-2-2z"/></svg><div class="a" style="left:967.5px;top:178.5px;width:298px;height:178.5px;background:linear-gradient(90deg,#8c8c90 0 99.4%,#606065 99.4%)"></div><div class="a" style="left:968.5px;top:179.5px;width:296px;height:176.5px;background:#323539;overflow:hidden"><svg class="a" style="left:270.7px;top:6px" width="19" height="19" viewBox="0 0 24 24"><path fill="#42a5f5" d="M12 12c2.21 0 4-1.79 4-4s-1.79-4-4-4-4 1.79-4 4 1.79 4 4 4zm0 2c-2.67 0-8 1.34-8 4v2h16v-2c0-2.66-5.33-4-8-4z"/></svg><div class="a t fa" dir="rtl" style="right:27.5px;top:6.5px;line-height:20px;font-weight:bold;font-size:12.5px;color:#fff;transform:scaleX(0.72);transform-origin:right center">استاد آژ دبیر ریاضی</div><svg class="a" style="left:270.7px;top:31.85px" width="19" height="19" viewBox="0 0 24 24"><path fill="#fff" d="M12 12c2.21 0 4-1.79 4-4s-1.79-4-4-4-4 1.79-4 4 1.79 4 4 4zm0 2c-2.67 0-8 1.34-8 4v2h16v-2c0-2.66-5.33-4-8-4z"/></svg><div class="a t" style="right:27.5px;top:32.35px;line-height:20px;font-size:12.3px;color:#fff;letter-spacing:-.35px">asefeh</div><svg class="a" style="left:270.7px;top:57.7px" width="19" height="19" viewBox="0 0 24 24"><path fill="#fff" d="M12 12c2.21 0 4-1.79 4-4s-1.79-4-4-4-4 1.79-4 4 1.79 4 4 4zm0 2c-2.67 0-8 1.34-8 4v2h16v-2c0-2.66-5.33-4-8-4z"/></svg><div class="a t" style="right:27.5px;top:58.2px;line-height:20px;font-size:12.3px;color:#fff;letter-spacing:-.35px">pariya ghanbari</div><svg class="a" style="left:270.7px;top:83.55px" width="19" height="19" viewBox="0 0 24 24"><path fill="#fff" d="M12 12c2.21 0 4-1.79 4-4s-1.79-4-4-4-4 1.79-4 4 1.79 4 4 4zm0 2c-2.67 0-8 1.34-8 4v2h16v-2c0-2.66-5.33-4-8-4z"/></svg><div class="a t fa" dir="rtl" style="right:27.5px;top:84.05px;line-height:20px;font-size:12.5px;color:#fff;transform:scaleX(0.86);transform-origin:right center">فاطمه رئیسی</div><svg class="a" style="left:270.7px;top:109.4px" width="19" height="19" viewBox="0 0 24 24"><path fill="#fff" d="M12 12c2.21 0 4-1.79 4-4s-1.79-4-4-4-4 1.79-4 4 1.79 4 4 4zm0 2c-2.67 0-8 1.34-8 4v2h16v-2c0-2.66-5.33-4-8-4z"/></svg><div class="a t" style="right:27.5px;top:109.9px;line-height:20px;font-size:12.3px;color:#fff;letter-spacing:-.35px">mehdi akbari</div><svg class="a" style="left:270.7px;top:135.25px" width="19" height="19" viewBox="0 0 24 24"><path fill="#fff" d="M12 12c2.21 0 4-1.79 4-4s-1.79-4-4-4-4 1.79-4 4 1.79 4 4 4zm0 2c-2.67 0-8 1.34-8 4v2h16v-2c0-2.66-5.33-4-8-4z"/></svg><div class="a t fa" dir="rtl" style="right:27.5px;top:135.75px;line-height:20px;font-size:12.5px;color:#fff;transform:scaleX(0.86);transform-origin:right center">امیر رضا ابراهیمیان</div><svg class="a" style="left:270.7px;top:161.1px" width="19" height="19" viewBox="0 0 24 24"><path fill="#fff" d="M12 12c2.21 0 4-1.79 4-4s-1.79-4-4-4-4 1.79-4 4 1.79 4 4 4zm0 2c-2.67 0-8 1.34-8 4v2h16v-2c0-2.66-5.33-4-8-4z"/></svg><div class="a t" style="right:27.5px;top:161.6px;line-height:20px;font-size:12.3px;color:#fff;letter-spacing:-.35px">maryam komgo</div><svg class="a" style="left:9px;top:10.2px" width="17" height="17" viewBox="0 0 24 24"><path fill="#2196f3" d="M12 14c1.66 0 2.99-1.34 2.99-3L15 5c0-1.66-1.34-3-3-3S9 3.34 9 5v6c0 1.66 1.34 3 3 3zm5.3-3c0 3-2.54 5.1-5.3 5.1S6.7 14 6.7 11H5c0 3.41 2.72 6.23 6 6.72V21h2v-3.28c3.28-.48 6-3.3 6-6.72h-1.7z"/></svg><svg class="a" style="left:45.5px;top:11.3px" width="17" height="17" viewBox="0 0 24 24"><path fill="#fff" d="M20 18c1.1 0 1.99-.9 1.99-2L22 6c0-1.1-.9-2-2-2H4c-1.1 0-2 .9-2 2v10c0 1.1.9 2 2 2H0v2h24v-2h-4zM4 6h16v10H4V6z"/></svg><svg class="a" style="left:9px;top:37px" width="17" height="17" viewBox="0 0 24 24"><path fill="#fff" d="M12 14c1.66 0 2.99-1.34 2.99-3L15 5c0-1.66-1.34-3-3-3S9 3.34 9 5v6c0 1.66 1.34 3 3 3zm5.3-3c0 3-2.54 5.1-5.3 5.1S6.7 14 6.7 11H5c0 3.41 2.72 6.23 6 6.72V21h2v-3.28c3.28-.48 6-3.3 6-6.72h-1.7z"/></svg></div><div class="a" style="left:958px;top:377px;width:316px;height:280.5px;background:linear-gradient(#6b6b70,#77777c 60px,#77777c);box-shadow:inset 1px 1px 0 #909094,inset -1px -1px 0 #808085,0 0 0 1px #3c3d40;box-sizing:border-box"></div><svg class="a" style="left:970.5px;top:381.5px" width="17" height="17" viewBox="0 0 24 24"><path fill="#fff" d="M20 2H4c-1.1 0-1.99.9-1.99 2L2 22l4-4h14c1.1 0 2-.9 2-2V4c0-1.1-.9-2-2-2zM6 9h12v2H6V9zm8 5H6v-2h8v2zm4-6H6V6h12v2z"/></svg><svg class="a" style="left:1251px;top:380px" width="19" height="19" viewBox="0 0 24 24"><path fill="#fff" d="M12 8c1.1 0 2-.9 2-2s-.9-2-2-2-2 .9-2 2 .9 2 2 2zm0 2c-1.1 0-2 .9-2 2s.9 2 2 2 2-.9 2-2-.9-2-2-2zm0 6c-1.1 0-2 .9-2 2s.9 2 2 2 2-.9 2-2-.9-2-2-2z"/></svg><div class="a" style="left:967.5px;top:405px;width:298px;height:208px;background:linear-gradient(90deg,#85858a 0 99.4%,#5a5a5f 99.4%)"></div><div class="a" style="left:968.5px;top:406px;width:296px;height:206px;background:#323539"></div><div class="a" style="left:1124px;top:406.3px;width:138px;height:28.7px;background:#7f7f84;border-radius:2px;box-shadow:0 0 0 .5px #8b8b90,1.2px 1.2px 1.5px rgba(20,20,24,.65)"></div><svg class="a" style="left:1129.7px;top:413.2px" width="14.6" height="14.6" viewBox="0 0 36 36"><circle cx="18" cy="18" r="16.5" fill="#ffcc4d" stroke="#2b2b2b" stroke-width="2.6"/><path d="M9.5 19.5c1.2 5.2 4.6 8.3 8.5 8.3s7.3-3.1 8.5-8.3c-5.5 1.3-11.5 1.3-17 0z" fill="#5d4037"/><path d="M8 14.5c1.5-2.3 4.5-2.3 6 0M22 14.5c1.5-2.3 4.5-2.3 6 0" fill="none" stroke="#5d4037" stroke-width="2"/><path d="M3.5 18.5c0 3.3 1.8 5 4.2 5s3.3-2.5 1.8-5.5c-2 .9-4 .9-6 .5zM32.5 18.5c0 3.3-1.8 5-4.2 5s-3.3-2.5-1.8-5.5c2 .9 4 .9 6 .5z" fill="#5dadec"/></svg><div class="a" style="left:1124px;top:441.3px;width:138px;height:52px;background:#7f7f84;border-radius:2px;box-shadow:0 0 0 .5px #8b8b90,1.2px 1.2px 1.5px rgba(20,20,24,.65)"></div><div class="a t" style="right:22.5px;top:444.5px;line-height:20px;font-size:12px;color:#fff;font-weight:bold;letter-spacing:-.76px;">maniya salehi</div><div class="a t fa" dir="rtl" style="right:22.5px;top:468.5px;line-height:20px;font-size:12.5px;color:#fff;transform:scaleX(0.92);transform-origin:right center;">دختر خاله ها</div><svg class="a" style="left:1183.7px;top:471.2px" width="14.6" height="14.6" viewBox="0 0 36 36"><circle cx="18" cy="18" r="16.5" fill="#ffcc4d" stroke="#2b2b2b" stroke-width="2.6"/><path d="M9.5 19.5c1.2 5.2 4.6 8.3 8.5 8.3s7.3-3.1 8.5-8.3c-5.5 1.3-11.5 1.3-17 0z" fill="#5d4037"/><path d="M8 14.5c1.5-2.3 4.5-2.3 6 0M22 14.5c1.5-2.3 4.5-2.3 6 0" fill="none" stroke="#5d4037" stroke-width="2"/><path d="M3.5 18.5c0 3.3 1.8 5 4.2 5s3.3-2.5 1.8-5.5c-2 .9-4 .9-6 .5zM32.5 18.5c0 3.3-1.8 5-4.2 5s-3.3-2.5-1.8-5.5c2 .9 4 .9 6 .5z" fill="#5dadec"/></svg><div class="a" style="left:1124px;top:499.3px;width:138px;height:52.5px;background:#7f7f84;border-radius:2px;box-shadow:0 0 0 .5px #8b8b90,1.2px 1.2px 1.5px rgba(20,20,24,.65)"></div><div class="a t" style="right:22.5px;top:502.5px;line-height:20px;font-size:12px;color:#fff;font-weight:bold;letter-spacing:-.76px;">maryam.yaghoobzadeh</div><svg class="a" style="left:1129.7px;top:529.7px" width="14.6" height="14.6" viewBox="0 0 36 36"><circle cx="18" cy="18" r="16.5" fill="#ffcc4d" stroke="#2b2b2b" stroke-width="2.6"/><path d="M9.5 19.5c1.2 5.2 4.6 8.3 8.5 8.3s7.3-3.1 8.5-8.3c-5.5 1.3-11.5 1.3-17 0z" fill="#5d4037"/><path d="M8 14.5c1.5-2.3 4.5-2.3 6 0M22 14.5c1.5-2.3 4.5-2.3 6 0" fill="none" stroke="#5d4037" stroke-width="2"/><path d="M3.5 18.5c0 3.3 1.8 5 4.2 5s3.3-2.5 1.8-5.5c-2 .9-4 .9-6 .5zM32.5 18.5c0 3.3-1.8 5-4.2 5s-3.3-2.5-1.8-5.5c2 .9 4 .9 6 .5z" fill="#5dadec"/></svg><svg class="a" style="left:1145.7px;top:529.7px" width="14.6" height="14.6" viewBox="0 0 36 36"><circle cx="18" cy="18" r="16.5" fill="#ffcc4d" stroke="#2b2b2b" stroke-width="2.6"/><path d="M9.5 19.5c1.2 5.2 4.6 8.3 8.5 8.3s7.3-3.1 8.5-8.3c-5.5 1.3-11.5 1.3-17 0z" fill="#5d4037"/><path d="M8 14.5c1.5-2.3 4.5-2.3 6 0M22 14.5c1.5-2.3 4.5-2.3 6 0" fill="none" stroke="#5d4037" stroke-width="2"/><path d="M3.5 18.5c0 3.3 1.8 5 4.2 5s3.3-2.5 1.8-5.5c-2 .9-4 .9-6 .5zM32.5 18.5c0 3.3-1.8 5-4.2 5s-3.3-2.5-1.8-5.5c2 .9 4 .9 6 .5z" fill="#5dadec"/></svg><div class="a" style="left:1124px;top:557.5px;width:138px;height:52.3px;background:#7f7f84;border-radius:2px;box-shadow:0 0 0 .5px #8b8b90,1.2px 1.2px 1.5px rgba(20,20,24,.65)"></div><div class="a t" style="right:22.5px;top:560.5px;line-height:20px;font-size:12px;color:#fff;font-weight:bold;letter-spacing:-.74px;">mohadeseh jahanbani</div><div class="a t fa" dir="rtl" style="right:22px;top:585.5px;line-height:20px;font-size:12.5px;color:#fff;transform:scaleX(0.91);transform-origin:right center;">'۶ مگه نمیشه ۲۱۶؟</div><div class="a" style="left:967.5px;top:617px;width:298px;height:31.5px;background:#85858a"></div><div class="a" style="left:968.5px;top:618px;width:296px;height:29.5px;background:#323539"></div><svg class="a" style="left:970.5px;top:623px" width="19" height="19" viewBox="0 0 24 24"><path fill="#fff" d="M21.99 21L1 12 21.99 3 22 10 7 12l15 2z"/></svg><svg class="a" style="left:991.5px;top:623px" width="19" height="19" viewBox="0 0 24 24"><path fill="#fff" d="M11.99 2C6.47 2 2 6.48 2 12s4.47 10 9.99 10C17.52 22 22 17.52 22 12S17.52 2 11.99 2zM12 20c-4.42 0-8-3.58-8-8s3.58-8 8-8 8 3.58 8 8-3.58 8-8 8zm3.5-9c.83 0 1.5-.67 1.5-1.5S16.33 8 15.5 8 14 8.67 14 9.5s.67 1.5 1.5 1.5zm-7 0c.83 0 1.5-.67 1.5-1.5S9.33 8 8.5 8 7 8.67 7 9.5 7.67 11 8.5 11zm3.5 6.5c2.33 0 4.31-1.46 5.11-3.5H6.89c.8 2.04 2.78 3.5 5.11 3.5z"/></svg><div class="a t fa" dir="rtl" style="right:21px;top:622.5px;line-height:20px;font-size:12.5px;color:#a6a6aa;transform:scaleX(0.89);transform-origin:right center;">پیام خود را وارد کنید</div><div class="a t fa" style="left:20.5px;top:661px;line-height:20px;font-size:12px;color:#fff;"><span style="display:inline-block;transform:scaleX(.92);transform-origin:left center">اسکای‌روم</span></div><div class="a t" style="left:67.7px;top:658.7px;line-height:20px;font-size:9.5px;color:#fff;font-weight:bold;">™</div><div class="a t" style="left:9.3px;top:661.5px;line-height:20px;font-size:13.5px;color:#fff;">©</div><div class="a" style="left:0px;top:686px;width:1280px;height:34px;background:#fff"></div><div class="a" style="left:0px;top:718px;width:1280px;height:2px;background:#111"></div><div class="a" style="left:0px;top:686px;width:100px;height:32px;background:#c6c6c6"></div><div class="a" style="left:100px;top:686px;width:118px;height:32px;background:#fdfdfd;box-shadow:inset -1px 0 0 #ececec"></div><div class="a t" style="left:14px;top:687px;line-height:20px;font-size:13.5px;color:#f4f4f4;font-weight:bold;letter-spacing:.15px;">20 / 2:16 PI</div><div class="a" style="left:412px;top:686px;width:460.5px;height:29.5px;background:linear-gradient(#cbcbcb,#c3c3c3);border-radius:0 0 7px 7px;box-shadow:inset 0 -1.5px 0 #9b9b9b,inset 1px 0 0 #adadad,inset -1px 0 0 #adadad;overflow:hidden"><div class="a" style="left:8px;top:-6px;width:27px;height:27px;border-radius:50%;background:#f4f4f4"></div><svg class="a" style="left:11px;top:-2px" width="22" height="22" viewBox="0 0 22 22"><path d="M4 17L17 2l3 2.5L7 19.5z" fill="#c62828"/><path d="M4 17l-.8 3.5L7 19.5z" fill="#333"/><path d="M8 12.5L18.5 1" stroke="#fff" stroke-width="1"/><path d="M5 21c3-2 6-2 8-1.5s2-1 0-1.5" stroke="#444" stroke-width="1" fill="none"/></svg><svg class="a" style="left:45px;top:1px" width="22" height="18" viewBox="0 0 22 18"><path d="M1 11L10 2l8 5-9 9z" fill="#f48fb1"/><path d="M10 2l3-2 8 4.5-3 2.5z" fill="#5c8fe0"/><path d="M1 11l8 5v1.5l-8-5z" fill="#e27aa0"/></svg><svg class="a" style="left:80px;top:-1px" width="22" height="20" viewBox="0 0 22 20"><path d="M3 15.5L17 0l3.5 3L7 18.5z" fill="#f5d30a"/><path d="M5 13.5L18.5 .5" stroke="#222" stroke-width="1.6"/><path d="M3 15.5l-1.5 4L7 18.5z" fill="#8a6a3a"/><path d="M6 19.5h9l2-4-5 1.5z" fill="#f0b429"/></svg><svg class="a" style="left:121px;top:-1.5px" width="11" height="17" viewBox="0 0 12 18"><path d="M1 1l9.5 9.5H6.3l2.6 5.5-2.3 1.1L4 11.5 1 14.5z" fill="#1f2a55" stroke="#3a3f6a" stroke-width=".6"/></svg><svg class="a" style="left:148px;top:0" width="24" height="20" viewBox="0 0 24 20"><path d="M3 1.5c3 1.5 6 4.5 8 7l5-1c3 0 5 3 5 6.5 0 3-2 5-5 5-4 0-6-2-7.5-5.5-1-3-3-6-6.5-10.5z" fill="#fbe3cf" stroke="#caa27e" stroke-width=".8"/></svg><svg class="a" style="left:187px;top:-1px" width="22" height="21" viewBox="0 0 22 21"><path d="M3 0c1 2 2 4.5 2.5 7L7 2l2 5.5L11 3l1 5 5-1c2.5 1 3.5 4 3.5 7s-2.5 6-6 6c-4 0-6-2-7.5-5.5C6 12 4 8 2 4z" fill="#fbe3cf" stroke="#caa27e" stroke-width=".8"/></svg><svg class="a" style="left:221.5px;top:-2px" width="24" height="22" viewBox="0 0 24 22"><circle cx="7.5" cy="7.5" r="5.8" fill="#e9e9e9" stroke="#333" stroke-width="1.4"/><path d="M5 7.5h5M7.5 5v5" stroke="#333" stroke-width="1.3"/><path d="M12 12l7.5 7" stroke="#333" stroke-width="3.2" stroke-linecap="round"/></svg><svg class="a" style="left:253.5px;top:-2px" width="24" height="22" viewBox="0 0 24 22"><circle cx="7.5" cy="7.5" r="5.8" fill="#e9e9e9" stroke="#333" stroke-width="1.4"/><path d="M5 7.5h5" stroke="#333" stroke-width="1.3"/><path d="M12 12l7.5 7" stroke="#333" stroke-width="3.2" stroke-linecap="round"/></svg><svg class="a" style="left:287px;top:-1px" width="22" height="20" viewBox="0 0 22 20"><path d="M2 18L12 8" stroke="#e53935" stroke-width="1.2"/><path d="M11 9l8-8.5" stroke="#444" stroke-width="3"/><path d="M12.5 7.5l4-4" stroke="#eee" stroke-width="1.6"/></svg><svg class="a" style="left:322px;top:-1px" width="22" height="20" viewBox="0 0 22 20"><path d="M2.5 16L18 0" stroke="#111" stroke-width="1.3"/><circle cx="2.8" cy="16" r="1.8" fill="#111"/></svg><div class="a t" style="left:361px;top:-3px;font-family:'Liberation Serif',serif;font-weight:bold;font-style:italic;font-size:19px;line-height:22px;color:#111">A</div><div class="a" style="left:374.5px;top:-1px;width:1.2px;height:17px;background:#222"></div><div class="a" style="left:396px;top:-3px;width:18px;height:19px;background:#8fd3e8;border-left:1px dashed #2b5fa8;border-right:1px dashed #2b5fa8;box-sizing:border-box"></div><svg class="a" style="left:395px;top:9px" width="20" height="9" viewBox="0 0 20 9"><circle cx="3" cy="3" r="2" fill="none" stroke="#1f3f9f" stroke-width="1.4"/><circle cx="4" cy="6.5" r="2" fill="none" stroke="#1f3f9f" stroke-width="1.4"/><path d="M6 4l13-2M6 5.5l13 1.5" stroke="#9aa3ad" stroke-width="1.3"/></svg><div class="a" style="left:428px;top:3px;width:21px;height:10.5px;background:repeating-linear-gradient(#e8e8e8 0 1.5px,#9a9a9a 1.5px 2.6px);border:1px solid #777;border-bottom:2px solid #666;box-sizing:border-box;border-radius:1px"></div></div><div class="a" style="left:1213px;top:686px;width:64px;height:19.5px;background:linear-gradient(#c9c9c9,#bdbdbd);border-radius:0 0 5px 5px"></div><div class="a t" style="left:1229.8px;top:685.3px;line-height:20px;font-size:13.6px;color:#fff;font-weight:bold;letter-spacing:.2px;">2.0 x</div><svg class="a" style="left:980px;top:706px" width="18" height="14" viewBox="0 0 18 14"><path d="M9 0v14M1 8h16" stroke="#111" stroke-width="1.5"/></svg><div class="a" style="left:720px;top:0px;width:300.4px;height:45.8px;box-shadow:0 0 0 .8px #4a4a4a;overflow:hidden"><div class="a" style="left:0px;top:0px;width:41px;height:47px;background:linear-gradient(#b9b9b9,#8d8d8d);"></div><div class="a" style="left:9.5px;top:11px;width:22px;height:23px;background:#e4002b;border:1.2px solid #f3c9c9;border-radius:2px;box-sizing:border-box"></div><div class="a" style="left:41px;top:0px;width:24px;height:23px;background:linear-gradient(#b9b9b9,#8d8d8d);box-shadow:inset 1px 0 0 #777,inset 0 -1px 0 #777"></div><div class="a" style="left:41px;top:23px;width:24px;height:24px;background:linear-gradient(#b9b9b9,#8d8d8d);box-shadow:inset 1px 0 0 #777"></div><svg class="a" style="left:44px;top:2px" width="18" height="16" viewBox="0 0 18 16"><rect x="1" y="4" width="16" height="11" rx="2" fill="#3b4a78" stroke="#dfe6f3" stroke-width="1"/><rect x="5.5" y="1.5" width="6" height="3.5" rx="1" fill="#3b4a78" stroke="#dfe6f3" stroke-width=".8"/><circle cx="9" cy="9.5" r="3.6" fill="#6d86c6" stroke="#1c2545" stroke-width="1.2"/><circle cx="14.3" cy="6.3" r="1" fill="#f6d34a"/></svg><svg class="a" style="left:45px;top:26px" width="16" height="17" viewBox="0 0 16 17"><rect x="1.5" y="1.5" width="5" height="14" rx="1" fill="#2d7cc4" stroke="#e6eefa" stroke-width="1"/><rect x="9.5" y="1.5" width="5" height="14" rx="1" fill="#2d7cc4" stroke="#e6eefa" stroke-width="1"/></svg><div class="a" style="left:65px;top:0px;width:67px;height:47px;background:#000"></div><div class="a t" style="left:65px;top:9px;width:67px;height:26px;line-height:26px;text-align:center;font-family:'Liberation Mono',monospace;font-size:16px;letter-spacing:-2.3px;color:#041004;-webkit-text-stroke:.5px #98e898;transform:translateY(1.3px) scaleY(1.38) skewX(-6deg)">00:39:09</div><div class="a" style="left:132px;top:0px;width:95px;height:23px;background:linear-gradient(#9c9c9c,#7d7d7d);box-shadow:inset 0 -1px 0 #666"></div><div class="a t" style="left:132px;top:1px;width:95px;line-height:21px;text-align:center;font-family:'Liberation Serif',serif;font-weight:bold;font-size:12.3px;color:#fff;text-shadow:0 0 1.5px #000,0 0 1.5px #000,0 0 1px #000">1914 × 1077</div><div class="a" style="left:227px;top:0px;width:24.7px;height:23px;background:linear-gradient(#f4f4f4,#c9c9c9);box-shadow:inset 1px 0 0 #777,inset 0 -1px 0 #777"></div><div class="a" style="left:233px;top:4.5px;width:13px;height:12px;border:1.7px solid #2fae3a;box-sizing:border-box;background:#e6efe6"></div><div class="a" style="left:251.7px;top:0px;width:24.7px;height:23px;background:linear-gradient(#b9b9b9,#8d8d8d);box-shadow:inset 1px 0 0 #777,inset 0 -1px 0 #777"></div><div class="a" style="left:257.7px;top:11px;width:13px;height:3.5px;background:#3a86cf;border-radius:1px;border:.5px solid #dbe6f5"></div><div class="a" style="left:276.4px;top:0px;width:24.7px;height:23px;background:linear-gradient(#b9b9b9,#8d8d8d);box-shadow:inset 1px 0 0 #777,inset 0 -1px 0 #777"></div><svg class="a" style="left:282.4px;top:4.5px" width="13" height="13" viewBox="0 0 13 13"><path d="M2 2l9 9M11 2l-9 9" stroke="#d0021b" stroke-width="2.3" fill="none"/></svg><div class="a" style="left:132px;top:23px;width:24.142857142857142px;height:24px;background:linear-gradient(#f4f4f4,#c9c9c9);box-shadow:inset 1px 0 0 #888"></div><svg class="a" style="left:135.1px;top:26px" width="18" height="18" viewBox="0 0 18 18"><path d="M2 6.5h3.5L10 3v12l-4.5-3.5H2z" fill="#d7e6f5" stroke="#2c6fb0" stroke-width="1.2"/><path d="M12 6a4.5 4.5 0 0 1 0 6M14 4a7.5 7.5 0 0 1 0 10" stroke="#2c6fb0" stroke-width="1.3" fill="none"/></svg><div class="a" style="left:156.14285714285714px;top:23px;width:24.142857142857142px;height:24px;background:linear-gradient(#f4f4f4,#c9c9c9);box-shadow:inset 1px 0 0 #888"></div><svg class="a" style="left:160.2px;top:25px" width="16" height="20" viewBox="0 0 16 20"><rect x="5" y="1" width="6" height="11" rx="3" fill="#8fb8df" stroke="#2c6fb0" stroke-width="1"/><path d="M2.5 9.5a5.5 5.5 0 0 0 11 0M8 15v3M5 18.5h6" stroke="#2c6fb0" stroke-width="1.2" fill="none"/></svg><div class="a" style="left:180.28571428571428px;top:23px;width:24.142857142857142px;height:24px;background:linear-gradient(#b9b9b9,#8d8d8d);box-shadow:inset 1px 0 0 #888"></div><svg class="a" style="left:183.4px;top:25px" width="18" height="20" viewBox="0 0 18 20"><circle cx="9" cy="9" r="7" fill="#3f6f9f" stroke="#1f3f5f" stroke-width="1"/><circle cx="9" cy="9" r="3.8" fill="#a8c8e8" stroke="#e8f0f8" stroke-width="1"/><path d="M3.5 18.5c1-2.5 10-2.5 11 0z" fill="#3f6f9f"/></svg><div class="a" style="left:204.42857142857144px;top:23px;width:24.142857142857142px;height:24px;background:linear-gradient(#f4f4f4,#c9c9c9);box-shadow:inset 1px 0 0 #888"></div><svg class="a" style="left:209.5px;top:26px" width="14" height="19" viewBox="0 0 14 19"><path d="M2 1.5v13.5l3.3-3 2.4 5.3 2.2-1-2.4-5.2H12z" fill="#fff" stroke="#000" stroke-width="1.4" stroke-linejoin="round"/></svg><div class="a" style="left:228.57142857142856px;top:23px;width:24.142857142857142px;height:24px;background:linear-gradient(#b9b9b9,#8d8d8d);box-shadow:inset 1px 0 0 #888"></div><svg class="a" style="left:231.6px;top:26px" width="18" height="18" viewBox="0 0 18 18"><path d="M3 12l9-9 3.5 3.5-9 9L2 16.5z" fill="#2f8fd8" stroke="#1d5f9c" stroke-width="1"/><path d="M2 16.5l1-4.5 3.5 3.5z" fill="#f2d6a2"/></svg><div class="a" style="left:252.71428571428572px;top:23px;width:24.142857142857142px;height:24px;background:linear-gradient(#b9b9b9,#8d8d8d);box-shadow:inset 1px 0 0 #888"></div><svg class="a" style="left:255.8px;top:27px" width="18" height="16" viewBox="0 0 18 16"><path d="M1 2h6l1.5 2H17v11H1z" fill="#f2c230" stroke="#c8960c" stroke-width=".8"/><path d="M1 15l2.5-8H18l-2 8z" fill="#fbe36a" stroke="#c8960c" stroke-width=".6"/></svg><div class="a" style="left:276.8571428571429px;top:23px;width:24.142857142857142px;height:24px;background:linear-gradient(#b9b9b9,#8d8d8d);box-shadow:inset 1px 0 0 #888"></div><svg class="a" style="left:279.9px;top:26px" width="18" height="18" viewBox="0 0 18 18"><circle cx="9" cy="9" r="5.2" fill="none" stroke="#2f4f6f" stroke-width="3.4" stroke-dasharray="2.7 1.4"/><circle cx="9" cy="9" r="4.3" fill="#3f6587"/><circle cx="9" cy="9" r="2" fill="#9a9a9a"/></svg></div></div></div><div class="a" style="left:45px;top:0px;width:834px;height:0.8px;background:#8d5457"></div><div class="a" style="left:45px;top:0.8px;width:834px;height:1.1px;background:linear-gradient(90deg,#f6d6d6,#f2c0c0)"></div><div class="a" style="left:876.9px;top:0px;width:2.3px;height:470px;background:linear-gradient(#f3a9a9,#ee6660 12%,#ec5f58)"></div></div><div class="a" style="left:958px;top:151px;width:316px;height:216px;background:linear-gradient(#6b6b70,#77777c 60px,#77777c);box-shadow:inset 1px 1px 0 #909094,inset -1px -1px 0 #808085,0 0 0 1px #3c3d40;box-sizing:border-box"></div><svg class="a" style="left:968.5px;top:154px" width="19" height="19" viewBox="0 0 24 24"><path fill="#fff" d="M16 11c1.66 0 2.99-1.34 2.99-3S17.66 5 16 5c-1.66 0-3 1.34-3 3s1.34 3 3 3zm-8 0c1.66 0 2.99-1.34 2.99-3S9.66 5 8 5C6.34 5 5 6.34 5 8s1.34 3 3 3zm0 2c-2.33 0-7 1.17-7 3.5V19h14v-2.5c0-2.33-4.67-3.5-7-3.5zm8 0c-.29 0-.62.02-.97.05 1.16.84 1.97 1.97 1.97 3.45V19h6v-2.5c0-2.33-4.67-3.5-7-3.5z"/></svg><div class="a t" style="left:990.5px;top:153px;line-height:20px;font-size:13px;color:#fff;letter-spacing:-.3px">10</div><div class="a t fa" dir="rtl" style="right:34px;top:152.5px;line-height:20px;font-size:12px;color:#fff;transform:scaleX(0.86);transform-origin:right center;">کاربران</div><svg class="a" style="left:1251px;top:153.5px" width="19" height="19" viewBox="0 0 24 24"><path fill="#fff" d="M12 8c1.1 0 2-.9 2-2s-.9-2-2-2-2 .9-2 2 .9 2 2 2zm0 2c-1.1 0-2 .9-2 2s.9 2 2 2 2-.9 2-2-.9-2-2-2zm0 6c-1.1 0-2 .9-2 2s.9 2 2 2 2-.9 2-2-.9-2-2-2z"/></svg><div class="a" style="left:967.5px;top:178.5px;width:298px;height:178.5px;background:linear-gradient(90deg,#8c8c90 0 99.4%,#606065 99.4%)"></div><div class="a" style="left:968.5px;top:179.5px;width:296px;height:176.5px;background:#323539;overflow:hidden"><svg class="a" style="left:270.7px;top:6px" width="19" height="19" viewBox="0 0 24 24"><path fill="#42a5f5" d="M12 12c2.21 0 4-1.79 4-4s-1.79-4-4-4-4 1.79-4 4 1.79 4 4 4zm0 2c-2.67 0-8 1.34-8 4v2h16v-2c0-2.66-5.33-4-8-4z"/></svg><div class="a t fa" dir="rtl" style="right:27.5px;top:6.5px;line-height:20px;font-weight:bold;font-size:12.5px;color:#fff;transform:scaleX(0.72);transform-origin:right center">استاد آژ دبیر ریاضی</div><svg class="a" style="left:270.7px;top:31.85px" width="19" height="19" viewBox="0 0 24 24"><path fill="#fff" d="M12 12c2.21 0 4-1.79 4-4s-1.79-4-4-4-4 1.79-4 4 1.79 4 4 4zm0 2c-2.67 0-8 1.34-8 4v2h16v-2c0-2.66-5.33-4-8-4z"/></svg><div class="a t" style="right:27.5px;top:32.35px;line-height:20px;font-size:12.3px;color:#fff;letter-spacing:-.35px">asefeh</div><svg class="a" style="left:270.7px;top:57.7px" width="19" height="19" viewBox="0 0 24 24"><path fill="#fff" d="M12 12c2.21 0 4-1.79 4-4s-1.79-4-4-4-4 1.79-4 4 1.79 4 4 4zm0 2c-2.67 0-8 1.34-8 4v2h16v-2c0-2.66-5.33-4-8-4z"/></svg><div class="a t" style="right:27.5px;top:58.2px;line-height:20px;font-size:12.3px;color:#fff;letter-spacing:-.35px">pariya ghanbari</div><svg class="a" style="left:270.7px;top:83.55px" width="19" height="19" viewBox="0 0 24 24"><path fill="#fff" d="M12 12c2.21 0 4-1.79 4-4s-1.79-4-4-4-4 1.79-4 4 1.79 4 4 4zm0 2c-2.67 0-8 1.34-8 4v2h16v-2c0-2.66-5.33-4-8-4z"/></svg><div class="a t fa" dir="rtl" style="right:27.5px;top:84.05px;line-height:20px;font-size:12.5px;color:#fff;transform:scaleX(0.86);transform-origin:right center">فاطمه رئیسی</div><svg class="a" style="left:270.7px;top:109.4px" width="19" height="19" viewBox="0 0 24 24"><path fill="#fff" d="M12 12c2.21 0 4-1.79 4-4s-1.79-4-4-4-4 1.79-4 4 1.79 4 4 4zm0 2c-2.67 0-8 1.34-8 4v2h16v-2c0-2.66-5.33-4-8-4z"/></svg><div class="a t" style="right:27.5px;top:109.9px;line-height:20px;font-size:12.3px;color:#fff;letter-spacing:-.35px">mehdi akbari</div><svg class="a" style="left:270.7px;top:135.25px" width="19" height="19" viewBox="0 0 24 24"><path fill="#fff" d="M12 12c2.21 0 4-1.79 4-4s-1.79-4-4-4-4 1.79-4 4 1.79 4 4 4zm0 2c-2.67 0-8 1.34-8 4v2h16v-2c0-2.66-5.33-4-8-4z"/></svg><div class="a t fa" dir="rtl" style="right:27.5px;top:135.75px;line-height:20px;font-size:12.5px;color:#fff;transform:scaleX(0.86);transform-origin:right center">امیر رضا ابراهیمیان</div><svg class="a" style="left:270.7px;top:161.1px" width="19" height="19" viewBox="0 0 24 24"><path fill="#fff" d="M12 12c2.21 0 4-1.79 4-4s-1.79-4-4-4-4 1.79-4 4 1.79 4 4 4zm0 2c-2.67 0-8 1.34-8 4v2h16v-2c0-2.66-5.33-4-8-4z"/></svg><div class="a t" style="right:27.5px;top:161.6px;line-height:20px;font-size:12.3px;color:#fff;letter-spacing:-.35px">maryam komgo</div><svg class="a" style="left:9px;top:10.2px" width="17" height="17" viewBox="0 0 24 24"><path fill="#2196f3" d="M12 14c1.66 0 2.99-1.34 2.99-3L15 5c0-1.66-1.34-3-3-3S9 3.34 9 5v6c0 1.66 1.34 3 3 3zm5.3-3c0 3-2.54 5.1-5.3 5.1S6.7 14 6.7 11H5c0 3.41 2.72 6.23 6 6.72V21h2v-3.28c3.28-.48 6-3.3 6-6.72h-1.7z"/></svg><svg class="a" style="left:45.5px;top:11.3px" width="17" height="17" viewBox="0 0 24 24"><path fill="#fff" d="M20 18c1.1 0 1.99-.9 1.99-2L22 6c0-1.1-.9-2-2-2H4c-1.1 0-2 .9-2 2v10c0 1.1.9 2 2 2H0v2h24v-2h-4zM4 6h16v10H4V6z"/></svg><svg class="a" style="left:9px;top:37px" width="17" height="17" viewBox="0 0 24 24"><path fill="#fff" d="M12 14c1.66 0 2.99-1.34 2.99-3L15 5c0-1.66-1.34-3-3-3S9 3.34 9 5v6c0 1.66 1.34 3 3 3zm5.3-3c0 3-2.54 5.1-5.3 5.1S6.7 14 6.7 11H5c0 3.41 2.72 6.23 6 6.72V21h2v-3.28c3.28-.48 6-3.3 6-6.72h-1.7z"/></svg></div><div class="a" style="left:958px;top:377px;width:316px;height:280.5px;background:linear-gradient(#6b6b70,#77777c 60px,#77777c);box-shadow:inset 1px 1px 0 #909094,inset -1px -1px 0 #808085,0 0 0 1px #3c3d40;box-sizing:border-box"></div><svg class="a" style="left:970.5px;top:381.5px" width="17" height="17" viewBox="0 0 24 24"><path fill="#fff" d="M20 2H4c-1.1 0-1.99.9-1.99 2L2 22l4-4h14c1.1 0 2-.9 2-2V4c0-1.1-.9-2-2-2zM6 9h12v2H6V9zm8 5H6v-2h8v2zm4-6H6V6h12v2z"/></svg><svg class="a" style="left:1251px;top:380px" width="19" height="19" viewBox="0 0 24 24"><path fill="#fff" d="M12 8c1.1 0 2-.9 2-2s-.9-2-2-2-2 .9-2 2 .9 2 2 2zm0 2c-1.1 0-2 .9-2 2s.9 2 2 2 2-.9 2-2-.9-2-2-2zm0 6c-1.1 0-2 .9-2 2s.9 2 2 2 2-.9 2-2-.9-2-2-2z"/></svg><div class="a" style="left:967.5px;top:405px;width:298px;height:208px;background:linear-gradient(90deg,#85858a 0 99.4%,#5a5a5f 99.4%)"></div><div class="a" style="left:968.5px;top:406px;width:296px;height:206px;background:#323539"></div><div class="a" style="left:1124px;top:406.3px;width:138px;height:28.7px;background:#7f7f84;border-radius:2px;box-shadow:0 0 0 .5px #8b8b90,1.2px 1.2px 1.5px rgba(20,20,24,.65)"></div><svg class="a" style="left:1129.7px;top:413.2px" width="14.6" height="14.6" viewBox="0 0 36 36"><circle cx="18" cy="18" r="16.5" fill="#ffcc4d" stroke="#2b2b2b" stroke-width="2.6"/><path d="M9.5 19.5c1.2 5.2 4.6 8.3 8.5 8.3s7.3-3.1 8.5-8.3c-5.5 1.3-11.5 1.3-17 0z" fill="#5d4037"/><path d="M8 14.5c1.5-2.3 4.5-2.3 6 0M22 14.5c1.5-2.3 4.5-2.3 6 0" fill="none" stroke="#5d4037" stroke-width="2"/><path d="M3.5 18.5c0 3.3 1.8 5 4.2 5s3.3-2.5 1.8-5.5c-2 .9-4 .9-6 .5zM32.5 18.5c0 3.3-1.8 5-4.2 5s-3.3-2.5-1.8-5.5c2 .9 4 .9 6 .5z" fill="#5dadec"/></svg><div class="a" style="left:1124px;top:441.3px;width:138px;height:52px;background:#7f7f84;border-radius:2px;box-shadow:0 0 0 .5px #8b8b90,1.2px 1.2px 1.5px rgba(20,20,24,.65)"></div><div class="a t" style="right:22.5px;top:444.5px;line-height:20px;font-size:12px;color:#fff;font-weight:bold;letter-spacing:-.76px;">maniya salehi</div><div class="a t fa" dir="rtl" style="right:22.5px;top:468.5px;line-height:20px;font-size:12.5px;color:#fff;transform:scaleX(0.92);transform-origin:right center;">دختر خاله ها</div><svg class="a" style="left:1183.7px;top:471.2px" width="14.6" height="14.6" viewBox="0 0 36 36"><circle cx="18" cy="18" r="16.5" fill="#ffcc4d" stroke="#2b2b2b" stroke-width="2.6"/><path d="M9.5 19.5c1.2 5.2 4.6 8.3 8.5 8.3s7.3-3.1 8.5-8.3c-5.5 1.3-11.5 1.3-17 0z" fill="#5d4037"/><path d="M8 14.5c1.5-2.3 4.5-2.3 6 0M22 14.5c1.5-2.3 4.5-2.3 6 0" fill="none" stroke="#5d4037" stroke-width="2"/><path d="M3.5 18.5c0 3.3 1.8 5 4.2 5s3.3-2.5 1.8-5.5c-2 .9-4 .9-6 .5zM32.5 18.5c0 3.3-1.8 5-4.2 5s-3.3-2.5-1.8-5.5c2 .9 4 .9 6 .5z" fill="#5dadec"/></svg><div class="a" style="left:1124px;top:499.3px;width:138px;height:52.5px;background:#7f7f84;border-radius:2px;box-shadow:0 0 0 .5px #8b8b90,1.2px 1.2px 1.5px rgba(20,20,24,.65)"></div><div class="a t" style="right:22.5px;top:502.5px;line-height:20px;font-size:12px;color:#fff;font-weight:bold;letter-spacing:-.76px;">maryam.yaghoobzadeh</div><svg class="a" style="left:1129.7px;top:529.7px" width="14.6" height="14.6" viewBox="0 0 36 36"><circle cx="18" cy="18" r="16.5" fill="#ffcc4d" stroke="#2b2b2b" stroke-width="2.6"/><path d="M9.5 19.5c1.2 5.2 4.6 8.3 8.5 8.3s7.3-3.1 8.5-8.3c-5.5 1.3-11.5 1.3-17 0z" fill="#5d4037"/><path d="M8 14.5c1.5-2.3 4.5-2.3 6 0M22 14.5c1.5-2.3 4.5-2.3 6 0" fill="none" stroke="#5d4037" stroke-width="2"/><path d="M3.5 18.5c0 3.3 1.8 5 4.2 5s3.3-2.5 1.8-5.5c-2 .9-4 .9-6 .5zM32.5 18.5c0 3.3-1.8 5-4.2 5s-3.3-2.5-1.8-5.5c2 .9 4 .9 6 .5z" fill="#5dadec"/></svg><svg class="a" style="left:1145.7px;top:529.7px" width="14.6" height="14.6" viewBox="0 0 36 36"><circle cx="18" cy="18" r="16.5" fill="#ffcc4d" stroke="#2b2b2b" stroke-width="2.6"/><path d="M9.5 19.5c1.2 5.2 4.6 8.3 8.5 8.3s7.3-3.1 8.5-8.3c-5.5 1.3-11.5 1.3-17 0z" fill="#5d4037"/><path d="M8 14.5c1.5-2.3 4.5-2.3 6 0M22 14.5c1.5-2.3 4.5-2.3 6 0" fill="none" stroke="#5d4037" stroke-width="2"/><path d="M3.5 18.5c0 3.3 1.8 5 4.2 5s3.3-2.5 1.8-5.5c-2 .9-4 .9-6 .5zM32.5 18.5c0 3.3-1.8 5-4.2 5s-3.3-2.5-1.8-5.5c2 .9 4 .9 6 .5z" fill="#5dadec"/></svg><div class="a" style="left:1124px;top:557.5px;width:138px;height:52.3px;background:#7f7f84;border-radius:2px;box-shadow:0 0 0 .5px #8b8b90,1.2px 1.2px 1.5px rgba(20,20,24,.65)"></div><div class="a t" style="right:22.5px;top:560.5px;line-height:20px;font-size:12px;color:#fff;font-weight:bold;letter-spacing:-.74px;">mohadeseh jahanbani</div><div class="a t fa" dir="rtl" style="right:22px;top:585.5px;line-height:20px;font-size:12.5px;color:#fff;transform:scaleX(0.91);transform-origin:right center;">'۶ مگه نمیشه ۲۱۶؟</div><div class="a" style="left:967.5px;top:617px;width:298px;height:31.5px;background:#85858a"></div><div class="a" style="left:968.5px;top:618px;width:296px;height:29.5px;background:#323539"></div><svg class="a" style="left:970.5px;top:623px" width="19" height="19" viewBox="0 0 24 24"><path fill="#fff" d="M21.99 21L1 12 21.99 3 22 10 7 12l15 2z"/></svg><svg class="a" style="left:991.5px;top:623px" width="19" height="19" viewBox="0 0 24 24"><path fill="#fff" d="M11.99 2C6.47 2 2 6.48 2 12s4.47 10 9.99 10C17.52 22 22 17.52 22 12S17.52 2 11.99 2zM12 20c-4.42 0-8-3.58-8-8s3.58-8 8-8 8 3.58 8 8-3.58 8-8 8zm3.5-9c.83 0 1.5-.67 1.5-1.5S16.33 8 15.5 8 14 8.67 14 9.5s.67 1.5 1.5 1.5zm-7 0c.83 0 1.5-.67 1.5-1.5S9.33 8 8.5 8 7 8.67 7 9.5 7.67 11 8.5 11zm3.5 6.5c2.33 0 4.31-1.46 5.11-3.5H6.89c.8 2.04 2.78 3.5 5.11 3.5z"/></svg><div class="a t fa" dir="rtl" style="right:21px;top:622.5px;line-height:20px;font-size:12.5px;color:#a6a6aa;transform:scaleX(0.89);transform-origin:right center;">پیام خود را وارد کنید</div><div class="a t fa" style="left:20.5px;top:661px;line-height:20px;font-size:12px;color:#fff;"><span style="display:inline-block;transform:scaleX(.92);transform-origin:left center">اسکای‌روم</span></div><div class="a t" style="left:67.7px;top:658.7px;line-height:20px;font-size:9.5px;color:#fff;font-weight:bold;">™</div><div class="a t" style="left:9.3px;top:661.5px;line-height:20px;font-size:13.5px;color:#fff;">©</div><div class="a" style="left:0px;top:686px;width:1280px;height:34px;background:#fff"></div><div class="a" style="left:0px;top:718px;width:1280px;height:2px;background:#111"></div><div class="a" style="left:0px;top:686px;width:100px;height:32px;background:#c6c6c6"></div><div class="a" style="left:100px;top:686px;width:118px;height:32px;background:#fdfdfd;box-shadow:inset -1px 0 0 #ececec"></div><div class="a t" style="left:14px;top:687px;line-height:20px;font-size:13.5px;color:#f4f4f4;font-weight:bold;letter-spacing:.15px;">20 / 2:16 PI</div><div class="a" style="left:412px;top:686px;width:460.5px;height:29.5px;background:linear-gradient(#cbcbcb,#c3c3c3);border-radius:0 0 7px 7px;box-shadow:inset 0 -1.5px 0 #9b9b9b,inset 1px 0 0 #adadad,inset -1px 0 0 #adadad;overflow:hidden"><div class="a" style="left:8px;top:-6px;width:27px;height:27px;border-radius:50%;background:#f4f4f4"></div><svg class="a" style="left:11px;top:-2px" width="22" height="22" viewBox="0 0 22 22"><path d="M4 17L17 2l3 2.5L7 19.5z" fill="#c62828"/><path d="M4 17l-.8 3.5L7 19.5z" fill="#333"/><path d="M8 12.5L18.5 1" stroke="#fff" stroke-width="1"/><path d="M5 21c3-2 6-2 8-1.5s2-1 0-1.5" stroke="#444" stroke-width="1" fill="none"/></svg><svg class="a" style="left:45px;top:1px" width="22" height="18" viewBox="0 0 22 18"><path d="M1 11L10 2l8 5-9 9z" fill="#f48fb1"/><path d="M10 2l3-2 8 4.5-3 2.5z" fill="#5c8fe0"/><path d="M1 11l8 5v1.5l-8-5z" fill="#e27aa0"/></svg><svg class="a" style="left:80px;top:-1px" width="22" height="20" viewBox="0 0 22 20"><path d="M3 15.5L17 0l3.5 3L7 18.5z" fill="#f5d30a"/><path d="M5 13.5L18.5 .5" stroke="#222" stroke-width="1.6"/><path d="M3 15.5l-1.5 4L7 18.5z" fill="#8a6a3a"/><path d="M6 19.5h9l2-4-5 1.5z" fill="#f0b429"/></svg><svg class="a" style="left:121px;top:-1.5px" width="11" height="17" viewBox="0 0 12 18"><path d="M1 1l9.5 9.5H6.3l2.6 5.5-2.3 1.1L4 11.5 1 14.5z" fill="#1f2a55" stroke="#3a3f6a" stroke-width=".6"/></svg><svg class="a" style="left:148px;top:0" width="24" height="20" viewBox="0 0 24 20"><path d="M3 1.5c3 1.5 6 4.5 8 7l5-1c3 0 5 3 5 6.5 0 3-2 5-5 5-4 0-6-2-7.5-5.5-1-3-3-6-6.5-10.5z" fill="#fbe3cf" stroke="#caa27e" stroke-width=".8"/></svg><svg class="a" style="left:187px;top:-1px" width="22" height="21" viewBox="0 0 22 21"><path d="M3 0c1 2 2 4.5 2.5 7L7 2l2 5.5L11 3l1 5 5-1c2.5 1 3.5 4 3.5 7s-2.5 6-6 6c-4 0-6-2-7.5-5.5C6 12 4 8 2 4z" fill="#fbe3cf" stroke="#caa27e" stroke-width=".8"/></svg><svg class="a" style="left:221.5px;top:-2px" width="24" height="22" viewBox="0 0 24 22"><circle cx="7.5" cy="7.5" r="5.8" fill="#e9e9e9" stroke="#333" stroke-width="1.4"/><path d="M5 7.5h5M7.5 5v5" stroke="#333" stroke-width="1.3"/><path d="M12 12l7.5 7" stroke="#333" stroke-width="3.2" stroke-linecap="round"/></svg><svg class="a" style="left:253.5px;top:-2px" width="24" height="22" viewBox="0 0 24 22"><circle cx="7.5" cy="7.5" r="5.8" fill="#e9e9e9" stroke="#333" stroke-width="1.4"/><path d="M5 7.5h5" stroke="#333" stroke-width="1.3"/><path d="M12 12l7.5 7" stroke="#333" stroke-width="3.2" stroke-linecap="round"/></svg><svg class="a" style="left:287px;top:-1px" width="22" height="20" viewBox="0 0 22 20"><path d="M2 18L12 8" stroke="#e53935" stroke-width="1.2"/><path d="M11 9l8-8.5" stroke="#444" stroke-width="3"/><path d="M12.5 7.5l4-4" stroke="#eee" stroke-width="1.6"/></svg><svg class="a" style="left:322px;top:-1px" width="22" height="20" viewBox="0 0 22 20"><path d="M2.5 16L18 0" stroke="#111" stroke-width="1.3"/><circle cx="2.8" cy="16" r="1.8" fill="#111"/></svg><div class="a t" style="left:361px;top:-3px;font-family:'Liberation Serif',serif;font-weight:bold;font-style:italic;font-size:19px;line-height:22px;color:#111">A</div><div class="a" style="left:374.5px;top:-1px;width:1.2px;height:17px;background:#222"></div><div class="a" style="left:396px;top:-3px;width:18px;height:19px;background:#8fd3e8;border-left:1px dashed #2b5fa8;border-right:1px dashed #2b5fa8;box-sizing:border-box"></div><svg class="a" style="left:395px;top:9px" width="20" height="9" viewBox="0 0 20 9"><circle cx="3" cy="3" r="2" fill="none" stroke="#1f3f9f" stroke-width="1.4"/><circle cx="4" cy="6.5" r="2" fill="none" stroke="#1f3f9f" stroke-width="1.4"/><path d="M6 4l13-2M6 5.5l13 1.5" stroke="#9aa3ad" stroke-width="1.3"/></svg><div class="a" style="left:428px;top:3px;width:21px;height:10.5px;background:repeating-linear-gradient(#e8e8e8 0 1.5px,#9a9a9a 1.5px 2.6px);border:1px solid #777;border-bottom:2px solid #666;box-sizing:border-box;border-radius:1px"></div></div><div class="a" style="left:1213px;top:686px;width:64px;height:19.5px;background:linear-gradient(#c9c9c9,#bdbdbd);border-radius:0 0 5px 5px"></div><div class="a t" style="left:1229.8px;top:685.3px;line-height:20px;font-size:13.6px;color:#fff;font-weight:bold;letter-spacing:.2px;">2.0 x</div><svg class="a" style="left:980px;top:706px" width="18" height="14" viewBox="0 0 18 14"><path d="M9 0v14M1 8h16" stroke="#111" stroke-width="1.5"/></svg><div class="a" style="left:720px;top:0px;width:300.4px;height:45.8px;box-shadow:0 0 0 .8px #4a4a4a;overflow:hidden"><div class="a" style="left:0px;top:0px;width:41px;height:47px;background:linear-gradient(#b9b9b9,#8d8d8d);"></div><div class="a" style="left:9.5px;top:11px;width:22px;height:23px;background:#e4002b;border:1.2px solid #f3c9c9;border-radius:2px;box-sizing:border-box"></div><div class="a" style="left:41px;top:0px;width:24px;height:23px;background:linear-gradient(#b9b9b9,#8d8d8d);box-shadow:inset 1px 0 0 #777,inset 0 -1px 0 #777"></div><div class="a" style="left:41px;top:23px;width:24px;height:24px;background:linear-gradient(#b9b9b9,#8d8d8d);box-shadow:inset 1px 0 0 #777"></div><svg class="a" style="left:44px;top:2px" width="18" height="16" viewBox="0 0 18 16"><rect x="1" y="4" width="16" height="11" rx="2" fill="#3b4a78" stroke="#dfe6f3" stroke-width="1"/><rect x="5.5" y="1.5" width="6" height="3.5" rx="1" fill="#3b4a78" stroke="#dfe6f3" stroke-width=".8"/><circle cx="9" cy="9.5" r="3.6" fill="#6d86c6" stroke="#1c2545" stroke-width="1.2"/><circle cx="14.3" cy="6.3" r="1" fill="#f6d34a"/></svg><svg class="a" style="left:45px;top:26px" width="16" height="17" viewBox="0 0 16 17"><rect x="1.5" y="1.5" width="5" height="14" rx="1" fill="#2d7cc4" stroke="#e6eefa" stroke-width="1"/><rect x="9.5" y="1.5" width="5" height="14" rx="1" fill="#2d7cc4" stroke="#e6eefa" stroke-width="1"/></svg><div class="a" style="left:65px;top:0px;width:67px;height:47px;background:#000"></div><div class="a t" style="left:65px;top:9px;width:67px;height:26px;line-height:26px;text-align:center;font-family:'Liberation Mono',monospace;font-size:16px;letter-spacing:-2.3px;color:#041004;-webkit-text-stroke:.5px #98e898;transform:translateY(1.3px) scaleY(1.38) skewX(-6deg)">00:39:09</div><div class="a" style="left:132px;top:0px;width:95px;height:23px;background:linear-gradient(#9c9c9c,#7d7d7d);box-shadow:inset 0 -1px 0 #666"></div><div class="a t" style="left:132px;top:1px;width:95px;line-height:21px;text-align:center;font-family:'Liberation Serif',serif;font-weight:bold;font-size:12.3px;color:#fff;text-shadow:0 0 1.5px #000,0 0 1.5px #000,0 0 1px #000">1914 × 1077</div><div class="a" style="left:227px;top:0px;width:24.7px;height:23px;background:linear-gradient(#f4f4f4,#c9c9c9);box-shadow:inset 1px 0 0 #777,inset 0 -1px 0 #777"></div><div class="a" style="left:233px;top:4.5px;width:13px;height:12px;border:1.7px solid #2fae3a;box-sizing:border-box;background:#e6efe6"></div><div class="a" style="left:251.7px;top:0px;width:24.7px;height:23px;background:linear-gradient(#b9b9b9,#8d8d8d);box-shadow:inset 1px 0 0 #777,inset 0 -1px 0 #777"></div><div class="a" style="left:257.7px;top:11px;width:13px;height:3.5px;background:#3a86cf;border-radius:1px;border:.5px solid #dbe6f5"></div><div class="a" style="left:276.4px;top:0px;width:24.7px;height:23px;background:linear-gradient(#b9b9b9,#8d8d8d);box-shadow:inset 1px 0 0 #777,inset 0 -1px 0 #777"></div><svg class="a" style="left:282.4px;top:4.5px" width="13" height="13" viewBox="0 0 13 13"><path d="M2 2l9 9M11 2l-9 9" stroke="#d0021b" stroke-width="2.3" fill="none"/></svg><div class="a" style="left:132px;top:23px;width:24.142857142857142px;height:24px;background:linear-gradient(#f4f4f4,#c9c9c9);box-shadow:inset 1px 0 0 #888"></div><svg class="a" style="left:135.1px;top:26px" width="18" height="18" viewBox="0 0 18 18"><path d="M2 6.5h3.5L10 3v12l-4.5-3.5H2z" fill="#d7e6f5" stroke="#2c6fb0" stroke-width="1.2"/><path d="M12 6a4.5 4.5 0 0 1 0 6M14 4a7.5 7.5 0 0 1 0 10" stroke="#2c6fb0" stroke-width="1.3" fill="none"/></svg><div class="a" style="left:156.14285714285714px;top:23px;width:24.142857142857142px;height:24px;background:linear-gradient(#f4f4f4,#c9c9c9);box-shadow:inset 1px 0 0 #888"></div><svg class="a" style="left:160.2px;top:25px" width="16" height="20" viewBox="0 0 16 20"><rect x="5" y="1" width="6" height="11" rx="3" fill="#8fb8df" stroke="#2c6fb0" stroke-width="1"/><path d="M2.5 9.5a5.5 5.5 0 0 0 11 0M8 15v3M5 18.5h6" stroke="#2c6fb0" stroke-width="1.2" fill="none"/></svg><div class="a" style="left:180.28571428571428px;top:23px;width:24.142857142857142px;height:24px;background:linear-gradient(#b9b9b9,#8d8d8d);box-shadow:inset 1px 0 0 #888"></div><svg class="a" style="left:183.4px;top:25px" width="18" height="20" viewBox="0 0 18 20"><circle cx="9" cy="9" r="7" fill="#3f6f9f" stroke="#1f3f5f" stroke-width="1"/><circle cx="9" cy="9" r="3.8" fill="#a8c8e8" stroke="#e8f0f8" stroke-width="1"/><path d="M3.5 18.5c1-2.5 10-2.5 11 0z" fill="#3f6f9f"/></svg><div class="a" style="left:204.42857142857144px;top:23px;width:24.142857142857142px;height:24px;background:linear-gradient(#f4f4f4,#c9c9c9);box-shadow:inset 1px 0 0 #888"></div><svg class="a" style="left:209.5px;top:26px" width="14" height="19" viewBox="0 0 14 19"><path d="M2 1.5v13.5l3.3-3 2.4 5.3 2.2-1-2.4-5.2H12z" fill="#fff" stroke="#000" stroke-width="1.4" stroke-linejoin="round"/></svg><div class="a" style="left:228.57142857142856px;top:23px;width:24.142857142857142px;height:24px;background:linear-gradient(#b9b9b9,#8d8d8d);box-shadow:inset 1px 0 0 #888"></div><svg class="a" style="left:231.6px;top:26px" width="18" height="18" viewBox="0 0 18 18"><path d="M3 12l9-9 3.5 3.5-9 9L2 16.5z" fill="#2f8fd8" stroke="#1d5f9c" stroke-width="1"/><path d="M2 16.5l1-4.5 3.5 3.5z" fill="#f2d6a2"/></svg><div class="a" style="left:252.71428571428572px;top:23px;width:24.142857142857142px;height:24px;background:linear-gradient(#b9b9b9,#8d8d8d);box-shadow:inset 1px 0 0 #888"></div><svg class="a" style="left:255.8px;top:27px" width="18" height="16" viewBox="0 0 18 16"><path d="M1 2h6l1.5 2H17v11H1z" fill="#f2c230" stroke="#c8960c" stroke-width=".8"/><path d="M1 15l2.5-8H18l-2 8z" fill="#fbe36a" stroke="#c8960c" stroke-width=".6"/></svg><div class="a" style="left:276.8571428571429px;top:23px;width:24.142857142857142px;height:24px;background:linear-gradient(#b9b9b9,#8d8d8d);box-shadow:inset 1px 0 0 #888"></div><svg class="a" style="left:279.9px;top:26px" width="18" height="18" viewBox="0 0 18 18"><circle cx="9" cy="9" r="5.2" fill="none" stroke="#2f4f6f" stroke-width="3.4" stroke-dasharray="2.7 1.4"/><circle cx="9" cy="9" r="4.3" fill="#3f6587"/><circle cx="9" cy="9" r="2" fill="#9a9a9a"/></svg></div></div></div><div class="a" style="left:45px;top:0px;width:834px;height:0.8px;background:#8d5457"></div><div class="a" style="left:45px;top:0.8px;width:834px;height:1.1px;background:linear-gradient(90deg,#f6d6d6,#f2c0c0)"></div><div class="a" style="left:876.9px;top:0px;width:2.3px;height:470px;background:linear-gradient(#f3a9a9,#ee6660 12%,#ec5f58)"></div></div><div class="a" style="left:958px;top:151px;width:316px;height:216px;background:linear-gradient(#6b6b70,#77777c 60px,#77777c);box-shadow:inset 1px 1px 0 #909094,inset -1px -1px 0 #808085,0 0 0 1px #3c3d40;box-sizing:border-box"></div><svg class="a" style="left:968.5px;top:154px" width="19" height="19" viewBox="0 0 24 24"><path fill="#fff" d="M16 11c1.66 0 2.99-1.34 2.99-3S17.66 5 16 5c-1.66 0-3 1.34-3 3s1.34 3 3 3zm-8 0c1.66 0 2.99-1.34 2.99-3S9.66 5 8 5C6.34 5 5 6.34 5 8s1.34 3 3 3zm0 2c-2.33 0-7 1.17-7 3.5V19h14v-2.5c0-2.33-4.67-3.5-7-3.5zm8 0c-.29 0-.62.02-.97.05 1.16.84 1.97 1.97 1.97 3.45V19h6v-2.5c0-2.33-4.67-3.5-7-3.5z"/></svg><div class="a t" style="left:990.5px;top:153px;line-height:20px;font-size:13px;color:#fff;letter-spacing:-.3px">10</div><div class="a t fa" dir="rtl" style="right:34px;top:152.5px;line-height:20px;font-size:12px;color:#fff;transform:scaleX(0.86);transform-origin:right center;">کاربران</div><svg class="a" style="left:1251px;top:153.5px" width="19" height="19" viewBox="0 0 24 24"><path fill="#fff" d="M12 8c1.1 0 2-.9 2-2s-.9-2-2-2-2 .9-2 2 .9 2 2 2zm0 2c-1.1 0-2 .9-2 2s.9 2 2 2 2-.9 2-2-.9-2-2-2zm0 6c-1.1 0-2 .9-2 2s.9 2 2 2 2-.9 2-2-.9-2-2-2z"/></svg><div class="a" style="left:967.5px;top:178.5px;width:298px;height:178.5px;background:linear-gradient(90deg,#8c8c90 0 99.4%,#606065 99.4%)"></div><div class="a" style="left:968.5px;top:179.5px;width:296px;height:176.5px;background:#323539;overflow:hidden"><svg class="a" style="left:270.7px;top:6px" width="19" height="19" viewBox="0 0 24 24"><path fill="#42a5f5" d="M12 12c2.21 0 4-1.79 4-4s-1.79-4-4-4-4 1.79-4 4 1.79 4 4 4zm0 2c-2.67 0-8 1.34-8 4v2h16v-2c0-2.66-5.33-4-8-4z"/></svg><div class="a t fa" dir="rtl" style="right:27.5px;top:6.5px;line-height:20px;font-weight:bold;font-size:12.5px;color:#fff;transform:scaleX(0.72);transform-origin:right center">استاد آژ دبیر ریاضی</div><svg class="a" style="left:270.7px;top:31.85px" width="19" height="19" viewBox="0 0 24 24"><path fill="#fff" d="M12 12c2.21 0 4-1.79 4-4s-1.79-4-4-4-4 1.79-4 4 1.79 4 4 4zm0 2c-2.67 0-8 1.34-8 4v2h16v-2c0-2.66-5.33-4-8-4z"/></svg><div class="a t" style="right:27.5px;top:32.35px;line-height:20px;font-size:12.3px;color:#fff;letter-spacing:-.35px">asefeh</div><svg class="a" style="left:270.7px;top:57.7px" width="19" height="19" viewBox="0 0 24 24"><path fill="#fff" d="M12 12c2.21 0 4-1.79 4-4s-1.79-4-4-4-4 1.79-4 4 1.79 4 4 4zm0 2c-2.67 0-8 1.34-8 4v2h16v-2c0-2.66-5.33-4-8-4z"/></svg><div class="a t" style="right:27.5px;top:58.2px;line-height:20px;font-size:12.3px;color:#fff;letter-spacing:-.35px">pariya ghanbari</div><svg class="a" style="left:270.7px;top:83.55px" width="19" height="19" viewBox="0 0 24 24"><path fill="#fff" d="M12 12c2.21 0 4-1.79 4-4s-1.79-4-4-4-4 1.79-4 4 1.79 4 4 4zm0 2c-2.67 0-8 1.34-8 4v2h16v-2c0-2.66-5.33-4-8-4z"/></svg><div class="a t fa" dir="rtl" style="right:27.5px;top:84.05px;line-height:20px;font-size:12.5px;color:#fff;transform:scaleX(0.86);transform-origin:right center">فاطمه رئیسی</div><svg class="a" style="left:270.7px;top:109.4px" width="19" height="19" viewBox="0 0 24 24"><path fill="#fff" d="M12 12c2.21 0 4-1.79 4-4s-1.79-4-4-4-4 1.79-4 4 1.79 4 4 4zm0 2c-2.67 0-8 1.34-8 4v2h16v-2c0-2.66-5.33-4-8-4z"/></svg><div class="a t" style="right:27.5px;top:109.9px;line-height:20px;font-size:12.3px;color:#fff;letter-spacing:-.35px">mehdi akbari</div><svg class="a" style="left:270.7px;top:135.25px" width="19" height="19" viewBox="0 0 24 24"><path fill="#fff" d="M12 12c2.21 0 4-1.79 4-4s-1.79-4-4-4-4 1.79-4 4 1.79 4 4 4zm0 2c-2.67 0-8 1.34-8 4v2h16v-2c0-2.66-5.33-4-8-4z"/></svg><div class="a t fa" dir="rtl" style="right:27.5px;top:135.75px;line-height:20px;font-size:12.5px;color:#fff;transform:scaleX(0.86);transform-origin:right center">امیر رضا ابراهیمیان</div><svg class="a" style="left:270.7px;top:161.1px" width="19" height="19" viewBox="0 0 24 24"><path fill="#fff" d="M12 12c2.21 0 4-1.79 4-4s-1.79-4-4-4-4 1.79-4 4 1.79 4 4 4zm0 2c-2.67 0-8 1.34-8 4v2h16v-2c0-2.66-5.33-4-8-4z"/></svg><div class="a t" style="right:27.5px;top:161.6px;line-height:20px;font-size:12.3px;color:#fff;letter-spacing:-.35px">maryam komgo</div><svg class="a" style="left:9px;top:10.2px" width="17" height="17" viewBox="0 0 24 24"><path fill="#2196f3" d="M12 14c1.66 0 2.99-1.34 2.99-3L15 5c0-1.66-1.34-3-3-3S9 3.34 9 5v6c0 1.66 1.34 3 3 3zm5.3-3c0 3-2.54 5.1-5.3 5.1S6.7 14 6.7 11H5c0 3.41 2.72 6.23 6 6.72V21h2v-3.28c3.28-.48 6-3.3 6-6.72h-1.7z"/></svg><svg class="a" style="left:45.5px;top:11.3px" width="17" height="17" viewBox="0 0 24 24"><path fill="#fff" d="M20 18c1.1 0 1.99-.9 1.99-2L22 6c0-1.1-.9-2-2-2H4c-1.1 0-2 .9-2 2v10c0 1.1.9 2 2 2H0v2h24v-2h-4zM4 6h16v10H4V6z"/></svg><svg class="a" style="left:9px;top:37px" width="17" height="17" viewBox="0 0 24 24"><path fill="#fff" d="M12 14c1.66 0 2.99-1.34 2.99-3L15 5c0-1.66-1.34-3-3-3S9 3.34 9 5v6c0 1.66 1.34 3 3 3zm5.3-3c0 3-2.54 5.1-5.3 5.1S6.7 14 6.7 11H5c0 3.41 2.72 6.23 6 6.72V21h2v-3.28c3.28-.48 6-3.3 6-6.72h-1.7z"/></svg></div><div class="a" style="left:958px;top:377px;width:316px;height:280.5px;background:linear-gradient(#6b6b70,#77777c 60px,#77777c);box-shadow:inset 1px 1px 0 #909094,inset -1px -1px 0 #808085,0 0 0 1px #3c3d40;box-sizing:border-box"></div><svg class="a" style="left:970.5px;top:381.5px" width="17" height="17" viewBox="0 0 24 24"><path fill="#fff" d="M20 2H4c-1.1 0-1.99.9-1.99 2L2 22l4-4h14c1.1 0 2-.9 2-2V4c0-1.1-.9-2-2-2zM6 9h12v2H6V9zm8 5H6v-2h8v2zm4-6H6V6h12v2z"/></svg><svg class="a" style="left:1251px;top:380px" width="19" height="19" viewBox="0 0 24 24"><path fill="#fff" d="M12 8c1.1 0 2-.9 2-2s-.9-2-2-2-2 .9-2 2 .9 2 2 2zm0 2c-1.1 0-2 .9-2 2s.9 2 2 2 2-.9 2-2-.9-2-2-2zm0 6c-1.1 0-2 .9-2 2s.9 2 2 2 2-.9 2-2-.9-2-2-2z"/></svg><div class="a" style="left:967.5px;top:405px;width:298px;height:208px;background:linear-gradient(90deg,#85858a 0 99.4%,#5a5a5f 99.4%)"></div><div class="a" style="left:968.5px;top:406px;width:296px;height:206px;background:#323539"></div><div class="a" style="left:1124px;top:406.3px;width:138px;height:28.7px;background:#7f7f84;border-radius:2px;box-shadow:0 0 0 .5px #8b8b90,1.2px 1.2px 1.5px rgba(20,20,24,.65)"></div><svg class="a" style="left:1129.7px;top:413.2px" width="14.6" height="14.6" viewBox="0 0 36 36"><circle cx="18" cy="18" r="16.5" fill="#ffcc4d" stroke="#2b2b2b" stroke-width="2.6"/><path d="M9.5 19.5c1.2 5.2 4.6 8.3 8.5 8.3s7.3-3.1 8.5-8.3c-5.5 1.3-11.5 1.3-17 0z" fill="#5d4037"/><path d="M8 14.5c1.5-2.3 4.5-2.3 6 0M22 14.5c1.5-2.3 4.5-2.3 6 0" fill="none" stroke="#5d4037" stroke-width="2"/><path d="M3.5 18.5c0 3.3 1.8 5 4.2 5s3.3-2.5 1.8-5.5c-2 .9-4 .9-6 .5zM32.5 18.5c0 3.3-1.8 5-4.2 5s-3.3-2.5-1.8-5.5c2 .9 4 .9 6 .5z" fill="#5dadec"/></svg><div class="a" style="left:1124px;top:441.3px;width:138px;height:52px;background:#7f7f84;border-radius:2px;box-shadow:0 0 0 .5px #8b8b90,1.2px 1.2px 1.5px rgba(20,20,24,.65)"></div><div class="a t" style="right:22.5px;top:444.5px;line-height:20px;font-size:12px;color:#fff;font-weight:bold;letter-spacing:-.76px;">maniya salehi</div><div class="a t fa" dir="rtl" style="right:22.5px;top:468.5px;line-height:20px;font-size:12.5px;color:#fff;transform:scaleX(0.92);transform-origin:right center;">دختر خاله ها</div><svg class="a" style="left:1183.7px;top:471.2px" width="14.6" height="14.6" viewBox="0 0 36 36"><circle cx="18" cy="18" r="16.5" fill="#ffcc4d" stroke="#2b2b2b" stroke-width="2.6"/><path d="M9.5 19.5c1.2 5.2 4.6 8.3 8.5 8.3s7.3-3.1 8.5-8.3c-5.5 1.3-11.5 1.3-17 0z" fill="#5d4037"/><path d="M8 14.5c1.5-2.3 4.5-2.3 6 0M22 14.5c1.5-2.3 4.5-2.3 6 0" fill="none" stroke="#5d4037" stroke-width="2"/><path d="M3.5 18.5c0 3.3 1.8 5 4.2 5s3.3-2.5 1.8-5.5c-2 .9-4 .9-6 .5zM32.5 18.5c0 3.3-1.8 5-4.2 5s-3.3-2.5-1.8-5.5c2 .9 4 .9 6 .5z" fill="#5dadec"/></svg><div class="a" style="left:1124px;top:499.3px;width:138px;height:52.5px;background:#7f7f84;border-radius:2px;box-shadow:0 0 0 .5px #8b8b90,1.2px 1.2px 1.5px rgba(20,20,24,.65)"></div><div class="a t" style="right:22.5px;top:502.5px;line-height:20px;font-size:12px;color:#fff;font-weight:bold;letter-spacing:-.76px;">maryam.yaghoobzadeh</div><svg class="a" style="left:1129.7px;top:529.7px" width="14.6" height="14.6" viewBox="0 0 36 36"><circle cx="18" cy="18" r="16.5" fill="#ffcc4d" stroke="#2b2b2b" stroke-width="2.6"/><path d="M9.5 19.5c1.2 5.2 4.6 8.3 8.5 8.3s7.3-3.1 8.5-8.3c-5.5 1.3-11.5 1.3-17 0z" fill="#5d4037"/><path d="M8 14.5c1.5-2.3 4.5-2.3 6 0M22 14.5c1.5-2.3 4.5-2.3 6 0" fill="none" stroke="#5d4037" stroke-width="2"/><path d="M3.5 18.5c0 3.3 1.8 5 4.2 5s3.3-2.5 1.8-5.5c-2 .9-4 .9-6 .5zM32.5 18.5c0 3.3-1.8 5-4.2 5s-3.3-2.5-1.8-5.5c2 .9 4 .9 6 .5z" fill="#5dadec"/></svg><svg class="a" style="left:1145.7px;top:529.7px" width="14.6" height="14.6" viewBox="0 0 36 36"><circle cx="18" cy="18" r="16.5" fill="#ffcc4d" stroke="#2b2b2b" stroke-width="2.6"/><path d="M9.5 19.5c1.2 5.2 4.6 8.3 8.5 8.3s7.3-3.1 8.5-8.3c-5.5 1.3-11.5 1.3-17 0z" fill="#5d4037"/><path d="M8 14.5c1.5-2.3 4.5-2.3 6 0M22 14.5c1.5-2.3 4.5-2.3 6 0" fill="none" stroke="#5d4037" stroke-width="2"/><path d="M3.5 18.5c0 3.3 1.8 5 4.2 5s3.3-2.5 1.8-5.5c-2 .9-4 .9-6 .5zM32.5 18.5c0 3.3-1.8 5-4.2 5s-3.3-2.5-1.8-5.5c2 .9 4 .9 6 .5z" fill="#5dadec"/></svg><div class="a" style="left:1124px;top:557.5px;width:138px;height:52.3px;background:#7f7f84;border-radius:2px;box-shadow:0 0 0 .5px #8b8b90,1.2px 1.2px 1.5px rgba(20,20,24,.65)"></div><div class="a t" style="right:22.5px;top:560.5px;line-height:20px;font-size:12px;color:#fff;font-weight:bold;letter-spacing:-.74px;">mohadeseh jahanbani</div><div class="a t fa" dir="rtl" style="right:22px;top:585.5px;line-height:20px;font-size:12.5px;color:#fff;transform:scaleX(0.91);transform-origin:right center;">'۶ مگه نمیشه ۲۱۶؟</div><div class="a" style="left:967.5px;top:617px;width:298px;height:31.5px;background:#85858a"></div><div class="a" style="left:968.5px;top:618px;width:296px;height:29.5px;background:#323539"></div><svg class="a" style="left:970.5px;top:623px" width="19" height="19" viewBox="0 0 24 24"><path fill="#fff" d="M21.99 21L1 12 21.99 3 22 10 7 12l15 2z"/></svg><svg class="a" style="left:991.5px;top:623px" width="19" height="19" viewBox="0 0 24 24"><path fill="#fff" d="M11.99 2C6.47 2 2 6.48 2 12s4.47 10 9.99 10C17.52 22 22 17.52 22 12S17.52 2 11.99 2zM12 20c-4.42 0-8-3.58-8-8s3.58-8 8-8 8 3.58 8 8-3.58 8-8 8zm3.5-9c.83 0 1.5-.67 1.5-1.5S16.33 8 15.5 8 14 8.67 14 9.5s.67 1.5 1.5 1.5zm-7 0c.83 0 1.5-.67 1.5-1.5S9.33 8 8.5 8 7 8.67 7 9.5 7.67 11 8.5 11zm3.5 6.5c2.33 0 4.31-1.46 5.11-3.5H6.89c.8 2.04 2.78 3.5 5.11 3.5z"/></svg><div class="a t fa" dir="rtl" style="right:21px;top:622.5px;line-height:20px;font-size:12.5px;color:#a6a6aa;transform:scaleX(0.89);transform-origin:right center;">پیام خود را وارد کنید</div><div class="a t fa" style="left:20.5px;top:661px;line-height:20px;font-size:12px;color:#fff;"><span style="display:inline-block;transform:scaleX(.92);transform-origin:left center">اسکای‌روم</span></div><div class="a t" style="left:67.7px;top:658.7px;line-height:20px;font-size:9.5px;color:#fff;font-weight:bold;">™</div><div class="a t" style="left:9.3px;top:661.5px;line-height:20px;font-size:13.5px;color:#fff;">©</div><div class="a" style="left:0px;top:686px;width:1280px;height:34px;background:#fff"></div><div class="a" style="left:0px;top:718px;width:1280px;height:2px;background:#111"></div><div class="a" style="left:0px;top:686px;width:100px;height:32px;background:#c6c6c6"></div><div class="a" style="left:100px;top:686px;width:118px;height:32px;background:#fdfdfd;box-shadow:inset -1px 0 0 #ececec"></div><div class="a t" style="left:14px;top:687px;line-height:20px;font-size:13.5px;color:#f4f4f4;font-weight:bold;letter-spacing:.15px;">20 / 2:16 PI</div><div class="a" style="left:412px;top:686px;width:460.5px;height:29.5px;background:linear-gradient(#cbcbcb,#c3c3c3);border-radius:0 0 7px 7px;box-shadow:inset 0 -1.5px 0 #9b9b9b,inset 1px 0 0 #adadad,inset -1px 0 0 #adadad;overflow:hidden"><div class="a" style="left:8px;top:-6px;width:27px;height:27px;border-radius:50%;background:#f4f4f4"></div><svg class="a" style="left:11px;top:-2px" width="22" height="22" viewBox="0 0 22 22"><path d="M4 17L17 2l3 2.5L7 19.5z" fill="#c62828"/><path d="M4 17l-.8 3.5L7 19.5z" fill="#333"/><path d="M8 12.5L18.5 1" stroke="#fff" stroke-width="1"/><path d="M5 21c3-2 6-2 8-1.5s2-1 0-1.5" stroke="#444" stroke-width="1" fill="none"/></svg><svg class="a" style="left:45px;top:1px" width="22" height="18" viewBox="0 0 22 18"><path d="M1 11L10 2l8 5-9 9z" fill="#f48fb1"/><path d="M10 2l3-2 8 4.5-3 2.5z" fill="#5c8fe0"/><path d="M1 11l8 5v1.5l-8-5z" fill="#e27aa0"/></svg><svg class="a" style="left:80px;top:-1px" width="22" height="20" viewBox="0 0 22 20"><path d="M3 15.5L17 0l3.5 3L7 18.5z" fill="#f5d30a"/><path d="M5 13.5L18.5 .5" stroke="#222" stroke-width="1.6"/><path d="M3 15.5l-1.5 4L7 18.5z" fill="#8a6a3a"/><path d="M6 19.5h9l2-4-5 1.5z" fill="#f0b429"/></svg><svg class="a" style="left:121px;top:-1.5px" width="11" height="17" viewBox="0 0 12 18"><path d="M1 1l9.5 9.5H6.3l2.6 5.5-2.3 1.1L4 11.5 1 14.5z" fill="#1f2a55" stroke="#3a3f6a" stroke-width=".6"/></svg><svg class="a" style="left:148px;top:0" width="24" height="20" viewBox="0 0 24 20"><path d="M3 1.5c3 1.5 6 4.5 8 7l5-1c3 0 5 3 5 6.5 0 3-2 5-5 5-4 0-6-2-7.5-5.5-1-3-3-6-6.5-10.5z" fill="#fbe3cf" stroke="#caa27e" stroke-width=".8"/></svg><svg class="a" style="left:187px;top:-1px" width="22" height="21" viewBox="0 0 22 21"><path d="M3 0c1 2 2 4.5 2.5 7L7 2l2 5.5L11 3l1 5 5-1c2.5 1 3.5 4 3.5 7s-2.5 6-6 6c-4 0-6-2-7.5-5.5C6 12 4 8 2 4z" fill="#fbe3cf" stroke="#caa27e" stroke-width=".8"/></svg><svg class="a" style="left:221.5px;top:-2px" width="24" height="22" viewBox="0 0 24 22"><circle cx="7.5" cy="7.5" r="5.8" fill="#e9e9e9" stroke="#333" stroke-width="1.4"/><path d="M5 7.5h5M7.5 5v5" stroke="#333" stroke-width="1.3"/><path d="M12 12l7.5 7" stroke="#333" stroke-width="3.2" stroke-linecap="round"/></svg><svg class="a" style="left:253.5px;top:-2px" width="24" height="22" viewBox="0 0 24 22"><circle cx="7.5" cy="7.5" r="5.8" fill="#e9e9e9" stroke="#333" stroke-width="1.4"/><path d="M5 7.5h5" stroke="#333" stroke-width="1.3"/><path d="M12 12l7.5 7" stroke="#333" stroke-width="3.2" stroke-linecap="round"/></svg><svg class="a" style="left:287px;top:-1px" width="22" height="20" viewBox="0 0 22 20"><path d="M2 18L12 8" stroke="#e53935" stroke-width="1.2"/><path d="M11 9l8-8.5" stroke="#444" stroke-width="3"/><path d="M12.5 7.5l4-4" stroke="#eee" stroke-width="1.6"/></svg><svg class="a" style="left:322px;top:-1px" width="22" height="20" viewBox="0 0 22 20"><path d="M2.5 16L18 0" stroke="#111" stroke-width="1.3"/><circle cx="2.8" cy="16" r="1.8" fill="#111"/></svg><div class="a t" style="left:361px;top:-3px;font-family:'Liberation Serif',serif;font-weight:bold;font-style:italic;font-size:19px;line-height:22px;color:#111">A</div><div class="a" style="left:374.5px;top:-1px;width:1.2px;height:17px;background:#222"></div><div class="a" style="left:396px;top:-3px;width:18px;height:19px;background:#8fd3e8;border-left:1px dashed #2b5fa8;border-right:1px dashed #2b5fa8;box-sizing:border-box"></div><svg class="a" style="left:395px;top:9px" width="20" height="9" viewBox="0 0 20 9"><circle cx="3" cy="3" r="2" fill="none" stroke="#1f3f9f" stroke-width="1.4"/><circle cx="4" cy="6.5" r="2" fill="none" stroke="#1f3f9f" stroke-width="1.4"/><path d="M6 4l13-2M6 5.5l13 1.5" stroke="#9aa3ad" stroke-width="1.3"/></svg><div class="a" style="left:428px;top:3px;width:21px;height:10.5px;background:repeating-linear-gradient(#e8e8e8 0 1.5px,#9a9a9a 1.5px 2.6px);border:1px solid #777;border-bottom:2px solid #666;box-sizing:border-box;border-radius:1px"></div></div><div class="a" style="left:1213px;top:686px;width:64px;height:19.5px;background:linear-gradient(#c9c9c9,#bdbdbd);border-radius:0 0 5px 5px"></div><div class="a t" style="left:1229.8px;top:685.3px;line-height:20px;font-size:13.6px;color:#fff;font-weight:bold;letter-spacing:.2px;">2.0 x</div><svg class="a" style="left:980px;top:706px" width="18" height="14" viewBox="0 0 18 14"><path d="M9 0v14M1 8h16" stroke="#111" stroke-width="1.5"/></svg><div class="a" style="left:720px;top:0px;width:300.4px;height:45.8px;box-shadow:0 0 0 .8px #4a4a4a;overflow:hidden"><div class="a" style="left:0px;top:0px;width:41px;height:47px;background:linear-gradient(#b9b9b9,#8d8d8d);"></div><div class="a" style="left:9.5px;top:11px;width:22px;height:23px;background:#e4002b;border:1.2px solid #f3c9c9;border-radius:2px;box-sizing:border-box"></div><div class="a" style="left:41px;top:0px;width:24px;height:23px;background:linear-gradient(#b9b9b9,#8d8d8d);box-shadow:inset 1px 0 0 #777,inset 0 -1px 0 #777"></div><div class="a" style="left:41px;top:23px;width:24px;height:24px;background:linear-gradient(#b9b9b9,#8d8d8d);box-shadow:inset 1px 0 0 #777"></div><svg class="a" style="left:44px;top:2px" width="18" height="16" viewBox="0 0 18 16"><rect x="1" y="4" width="16" height="11" rx="2" fill="#3b4a78" stroke="#dfe6f3" stroke-width="1"/><rect x="5.5" y="1.5" width="6" height="3.5" rx="1" fill="#3b4a78" stroke="#dfe6f3" stroke-width=".8"/><circle cx="9" cy="9.5" r="3.6" fill="#6d86c6" stroke="#1c2545" stroke-width="1.2"/><circle cx="14.3" cy="6.3" r="1" fill="#f6d34a"/></svg><svg class="a" style="left:45px;top:26px" width="16" height="17" viewBox="0 0 16 17"><rect x="1.5" y="1.5" width="5" height="14" rx="1" fill="#2d7cc4" stroke="#e6eefa" stroke-width="1"/><rect x="9.5" y="1.5" width="5" height="14" rx="1" fill="#2d7cc4" stroke="#e6eefa" stroke-width="1"/></svg><div class="a" style="left:65px;top:0px;width:67px;height:47px;background:#000"></div><div class="a t" style="left:65px;top:9px;width:67px;height:26px;line-height:26px;text-align:center;font-family:'Liberation Mono',monospace;font-size:16px;letter-spacing:-2.3px;color:#041004;-webkit-text-stroke:.5px #98e898;transform:translateY(1.3px) scaleY(1.38) skewX(-6deg)">00:39:09</div><div class="a" style="left:132px;top:0px;width:95px;height:23px;background:linear-gradient(#9c9c9c,#7d7d7d);box-shadow:inset 0 -1px 0 #666"></div><div class="a t" style="left:132px;top:1px;width:95px;line-height:21px;text-align:center;font-family:'Liberation Serif',serif;font-weight:bold;font-size:12.3px;color:#fff;text-shadow:0 0 1.5px #000,0 0 1.5px #000,0 0 1px #000">1914 × 1077</div><div class="a" style="left:227px;top:0px;width:24.7px;height:23px;background:linear-gradient(#f4f4f4,#c9c9c9);box-shadow:inset 1px 0 0 #777,inset 0 -1px 0 #777"></div><div class="a" style="left:233px;top:4.5px;width:13px;height:12px;border:1.7px solid #2fae3a;box-sizing:border-box;background:#e6efe6"></div><div class="a" style="left:251.7px;top:0px;width:24.7px;height:23px;background:linear-gradient(#b9b9b9,#8d8d8d);box-shadow:inset 1px 0 0 #777,inset 0 -1px 0 #777"></div><div class="a" style="left:257.7px;top:11px;width:13px;height:3.5px;background:#3a86cf;border-radius:1px;border:.5px solid #dbe6f5"></div><div class="a" style="left:276.4px;top:0px;width:24.7px;height:23px;background:linear-gradient(#b9b9b9,#8d8d8d);box-shadow:inset 1px 0 0 #777,inset 0 -1px 0 #777"></div><svg class="a" style="left:282.4px;top:4.5px" width="13" height="13" viewBox="0 0 13 13"><path d="M2 2l9 9M11 2l-9 9" stroke="#d0021b" stroke-width="2.3" fill="none"/></svg><div class="a" style="left:132px;top:23px;width:24.142857142857142px;height:24px;background:linear-gradient(#f4f4f4,#c9c9c9);box-shadow:inset 1px 0 0 #888"></div><svg class="a" style="left:135.1px;top:26px" width="18" height="18" viewBox="0 0 18 18"><path d="M2 6.5h3.5L10 3v12l-4.5-3.5H2z" fill="#d7e6f5" stroke="#2c6fb0" stroke-width="1.2"/><path d="M12 6a4.5 4.5 0 0 1 0 6M14 4a7.5 7.5 0 0 1 0 10" stroke="#2c6fb0" stroke-width="1.3" fill="none"/></svg><div class="a" style="left:156.14285714285714px;top:23px;width:24.142857142857142px;height:24px;background:linear-gradient(#f4f4f4,#c9c9c9);box-shadow:inset 1px 0 0 #888"></div><svg class="a" style="left:160.2px;top:25px" width="16" height="20" viewBox="0 0 16 20"><rect x="5" y="1" width="6" height="11" rx="3" fill="#8fb8df" stroke="#2c6fb0" stroke-width="1"/><path d="M2.5 9.5a5.5 5.5 0 0 0 11 0M8 15v3M5 18.5h6" stroke="#2c6fb0" stroke-width="1.2" fill="none"/></svg><div class="a" style="left:180.28571428571428px;top:23px;width:24.142857142857142px;height:24px;background:linear-gradient(#b9b9b9,#8d8d8d);box-shadow:inset 1px 0 0 #888"></div><svg class="a" style="left:183.4px;top:25px" width="18" height="20" viewBox="0 0 18 20"><circle cx="9" cy="9" r="7" fill="#3f6f9f" stroke="#1f3f5f" stroke-width="1"/><circle cx="9" cy="9" r="3.8" fill="#a8c8e8" stroke="#e8f0f8" stroke-width="1"/><path d="M3.5 18.5c1-2.5 10-2.5 11 0z" fill="#3f6f9f"/></svg><div class="a" style="left:204.42857142857144px;top:23px;width:24.142857142857142px;height:24px;background:linear-gradient(#f4f4f4,#c9c9c9);box-shadow:inset 1px 0 0 #888"></div><svg class="a" style="left:209.5px;top:26px" width="14" height="19" viewBox="0 0 14 19"><path d="M2 1.5v13.5l3.3-3 2.4 5.3 2.2-1-2.4-5.2H12z" fill="#fff" stroke="#000" stroke-width="1.4" stroke-linejoin="round"/></svg><div class="a" style="left:228.57142857142856px;top:23px;width:24.142857142857142px;height:24px;background:linear-gradient(#b9b9b9,#8d8d8d);box-shadow:inset 1px 0 0 #888"></div><svg class="a" style="left:231.6px;top:26px" width="18" height="18" viewBox="0 0 18 18"><path d="M3 12l9-9 3.5 3.5-9 9L2 16.5z" fill="#2f8fd8" stroke="#1d5f9c" stroke-width="1"/><path d="M2 16.5l1-4.5 3.5 3.5z" fill="#f2d6a2"/></svg><div class="a" style="left:252.71428571428572px;top:23px;width:24.142857142857142px;height:24px;background:linear-gradient(#b9b9b9,#8d8d8d);box-shadow:inset 1px 0 0 #888"></div><svg class="a" style="left:255.8px;top:27px" width="18" height="16" viewBox="0 0 18 16"><path d="M1 2h6l1.5 2H17v11H1z" fill="#f2c230" stroke="#c8960c" stroke-width=".8"/><path d="M1 15l2.5-8H18l-2 8z" fill="#fbe36a" stroke="#c8960c" stroke-width=".6"/></svg><div class="a" style="left:276.8571428571429px;top:23px;width:24.142857142857142px;height:24px;background:linear-gradient(#b9b9b9,#8d8d8d);box-shadow:inset 1px 0 0 #888"></div><svg class="a" style="left:279.9px;top:26px" width="18" height="18" viewBox="0 0 18 18"><circle cx="9" cy="9" r="5.2" fill="none" stroke="#2f4f6f" stroke-width="3.4" stroke-dasharray="2.7 1.4"/><circle cx="9" cy="9" r="4.3" fill="#3f6587"/><circle cx="9" cy="9" r="2" fill="#9a9a9a"/></svg></div></div></div><div class="a" style="left:45px;top:0px;width:834px;height:0.8px;background:#8d5457"></div><div class="a" style="left:45px;top:0.8px;width:834px;height:1.1px;background:linear-gradient(90deg,#f6d6d6,#f2c0c0)"></div><div class="a" style="left:876.9px;top:0px;width:2.3px;height:470px;background:linear-gradient(#f3a9a9,#ee6660 12%,#ec5f58)"></div></div><div class="a" style="left:958px;top:151px;width:316px;height:216px;background:linear-gradient(#6b6b70,#77777c 60px,#77777c);box-shadow:inset 1px 1px 0 #909094,inset -1px -1px 0 #808085,0 0 0 1px #3c3d40;box-sizing:border-box"></div><svg class="a" style="left:968.5px;top:154px" width="19" height="19" viewBox="0 0 24 24"><path fill="#fff" d="M16 11c1.66 0 2.99-1.34 2.99-3S17.66 5 16 5c-1.66 0-3 1.34-3 3s1.34 3 3 3zm-8 0c1.66 0 2.99-1.34 2.99-3S9.66 5 8 5C6.34 5 5 6.34 5 8s1.34 3 3 3zm0 2c-2.33 0-7 1.17-7 3.5V19h14v-2.5c0-2.33-4.67-3.5-7-3.5zm8 0c-.29 0-.62.02-.97.05 1.16.84 1.97 1.97 1.97 3.45V19h6v-2.5c0-2.33-4.67-3.5-7-3.5z"/></svg><div class="a t" style="left:990.5px;top:153px;line-height:20px;font-size:13px;color:#fff;letter-spacing:-.3px">10</div><div class="a t fa" dir="rtl" style="right:34px;top:152.5px;line-height:20px;font-size:12px;color:#fff;transform:scaleX(0.86);transform-origin:right center;">کاربران</div><svg class="a" style="left:1251px;top:153.5px" width="19" height="19" viewBox="0 0 24 24"><path fill="#fff" d="M12 8c1.1 0 2-.9 2-2s-.9-2-2-2-2 .9-2 2 .9 2 2 2zm0 2c-1.1 0-2 .9-2 2s.9 2 2 2 2-.9 2-2-.9-2-2-2zm0 6c-1.1 0-2 .9-2 2s.9 2 2 2 2-.9 2-2-.9-2-2-2z"/></svg><div class="a" style="left:967.5px;top:178.5px;width:298px;height:178.5px;background:linear-gradient(90deg,#8c8c90 0 99.4%,#606065 99.4%)"></div><div class="a" style="left:968.5px;top:179.5px;width:296px;height:176.5px;background:#323539;overflow:hidden"><svg class="a" style="left:270.7px;top:6px" width="19" height="19" viewBox="0 0 24 24"><path fill="#42a5f5" d="M12 12c2.21 0 4-1.79 4-4s-1.79-4-4-4-4 1.79-4 4 1.79 4 4 4zm0 2c-2.67 0-8 1.34-8 4v2h16v-2c0-2.66-5.33-4-8-4z"/></svg><div class="a t fa" dir="rtl" style="right:27.5px;top:6.5px;line-height:20px;font-weight:bold;font-size:12.5px;color:#fff;transform:scaleX(0.72);transform-origin:right center">استاد آژ دبیر ریاضی</div><svg class="a" style="left:270.7px;top:31.85px" width="19" height="19" viewBox="0 0 24 24"><path fill="#fff" d="M12 12c2.21 0 4-1.79 4-4s-1.79-4-4-4-4 1.79-4 4 1.79 4 4 4zm0 2c-2.67 0-8 1.34-8 4v2h16v-2c0-2.66-5.33-4-8-4z"/></svg><div class="a t" style="right:27.5px;top:32.35px;line-height:20px;font-size:12.3px;color:#fff;letter-spacing:-.35px">asefeh</div><svg class="a" style="left:270.7px;top:57.7px" width="19" height="19" viewBox="0 0 24 24"><path fill="#fff" d="M12 12c2.21 0 4-1.79 4-4s-1.79-4-4-4-4 1.79-4 4 1.79 4 4 4zm0 2c-2.67 0-8 1.34-8 4v2h16v-2c0-2.66-5.33-4-8-4z"/></svg><div class="a t" style="right:27.5px;top:58.2px;line-height:20px;font-size:12.3px;color:#fff;letter-spacing:-.35px">pariya ghanbari</div><svg class="a" style="left:270.7px;top:83.55px" width="19" height="19" viewBox="0 0 24 24"><path fill="#fff" d="M12 12c2.21 0 4-1.79 4-4s-1.79-4-4-4-4 1.79-4 4 1.79 4 4 4zm0 2c-2.67 0-8 1.34-8 4v2h16v-2c0-2.66-5.33-4-8-4z"/></svg><div class="a t fa" dir="rtl" style="right:27.5px;top:84.05px;line-height:20px;font-size:12.5px;color:#fff;transform:scaleX(0.86);transform-origin:right center">فاطمه رئیسی</div><svg class="a" style="left:270.7px;top:109.4px" width="19" height="19" viewBox="0 0 24 24"><path fill="#fff" d="M12 12c2.21 0 4-1.79 4-4s-1.79-4-4-4-4 1.79-4 4 1.79 4 4 4zm0 2c-2.67 0-8 1.34-8 4v2h16v-2c0-2.66-5.33-4-8-4z"/></svg><div class="a t" style="right:27.5px;top:109.9px;line-height:20px;font-size:12.3px;color:#fff;letter-spacing:-.35px">mehdi akbari</div><svg class="a" style="left:270.7px;top:135.25px" width="19" height="19" viewBox="0 0 24 24"><path fill="#fff" d="M12 12c2.21 0 4-1.79 4-4s-1.79-4-4-4-4 1.79-4 4 1.79 4 4 4zm0 2c-2.67 0-8 1.34-8 4v2h16v-2c0-2.66-5.33-4-8-4z"/></svg><div class="a t fa" dir="rtl" style="right:27.5px;top:135.75px;line-height:20px;font-size:12.5px;color:#fff;transform:scaleX(0.86);transform-origin:right center">امیر رضا ابراهیمیان</div><svg class="a" style="left:270.7px;top:161.1px" width="19" height="19" viewBox="0 0 24 24"><path fill="#fff" d="M12 12c2.21 0 4-1.79 4-4s-1.79-4-4-4-4 1.79-4 4 1.79 4 4 4zm0 2c-2.67 0-8 1.34-8 4v2h16v-2c0-2.66-5.33-4-8-4z"/></svg><div class="a t" style="right:27.5px;top:161.6px;line-height:20px;font-size:12.3px;color:#fff;letter-spacing:-.35px">maryam komgo</div><svg class="a" style="left:9px;top:10.2px" width="17" height="17" viewBox="0 0 24 24"><path fill="#2196f3" d="M12 14c1.66 0 2.99-1.34 2.99-3L15 5c0-1.66-1.34-3-3-3S9 3.34 9 5v6c0 1.66 1.34 3 3 3zm5.3-3c0 3-2.54 5.1-5.3 5.1S6.7 14 6.7 11H5c0 3.41 2.72 6.23 6 6.72V21h2v-3.28c3.28-.48 6-3.3 6-6.72h-1.7z"/></svg><svg class="a" style="left:45.5px;top:11.3px" width="17" height="17" viewBox="0 0 24 24"><path fill="#fff" d="M20 18c1.1 0 1.99-.9 1.99-2L22 6c0-1.1-.9-2-2-2H4c-1.1 0-2 .9-2 2v10c0 1.1.9 2 2 2H0v2h24v-2h-4zM4 6h16v10H4V6z"/></svg><svg class="a" style="left:9px;top:37px" width="17" height="17" viewBox="0 0 24 24"><path fill="#fff" d="M12 14c1.66 0 2.99-1.34 2.99-3L15 5c0-1.66-1.34-3-3-3S9 3.34 9 5v6c0 1.66 1.34 3 3 3zm5.3-3c0 3-2.54 5.1-5.3 5.1S6.7 14 6.7 11H5c0 3.41 2.72 6.23 6 6.72V21h2v-3.28c3.28-.48 6-3.3 6-6.72h-1.7z"/></svg></div><div class="a" style="left:958px;top:377px;width:316px;height:280.5px;background:linear-gradient(#6b6b70,#77777c 60px,#77777c);box-shadow:inset 1px 1px 0 #909094,inset -1px -1px 0 #808085,0 0 0 1px #3c3d40;box-sizing:border-box"></div><svg class="a" style="left:970.5px;top:381.5px" width="17" height="17" viewBox="0 0 24 24"><path fill="#fff" d="M20 2H4c-1.1 0-1.99.9-1.99 2L2 22l4-4h14c1.1 0 2-.9 2-2V4c0-1.1-.9-2-2-2zM6 9h12v2H6V9zm8 5H6v-2h8v2zm4-6H6V6h12v2z"/></svg><svg class="a" style="left:1251px;top:380px" width="19" height="19" viewBox="0 0 24 24"><path fill="#fff" d="M12 8c1.1 0 2-.9 2-2s-.9-2-2-2-2 .9-2 2 .9 2 2 2zm0 2c-1.1 0-2 .9-2 2s.9 2 2 2 2-.9 2-2-.9-2-2-2zm0 6c-1.1 0-2 .9-2 2s.9 2 2 2 2-.9 2-2-.9-2-2-2z"/></svg><div class="a" style="left:967.5px;top:405px;width:298px;height:208px;background:linear-gradient(90deg,#85858a 0 99.4%,#5a5a5f 99.4%)"></div><div class="a" style="left:968.5px;top:406px;width:296px;height:206px;background:#323539"></div><div class="a" style="left:1124px;top:406.3px;width:138px;height:28.7px;background:#7f7f84;border-radius:2px;box-shadow:0 0 0 .5px #8b8b90,1.2px 1.2px 1.5px rgba(20,20,24,.65)"></div><svg class="a" style="left:1129.7px;top:413.2px" width="14.6" height="14.6" viewBox="0 0 36 36"><circle cx="18" cy="18" r="16.5" fill="#ffcc4d" stroke="#2b2b2b" stroke-width="2.6"/><path d="M9.5 19.5c1.2 5.2 4.6 8.3 8.5 8.3s7.3-3.1 8.5-8.3c-5.5 1.3-11.5 1.3-17 0z" fill="#5d4037"/><path d="M8 14.5c1.5-2.3 4.5-2.3 6 0M22 14.5c1.5-2.3 4.5-2.3 6 0" fill="none" stroke="#5d4037" stroke-width="2"/><path d="M3.5 18.5c0 3.3 1.8 5 4.2 5s3.3-2.5 1.8-5.5c-2 .9-4 .9-6 .5zM32.5 18.5c0 3.3-1.8 5-4.2 5s-3.3-2.5-1.8-5.5c2 .9 4 .9 6 .5z" fill="#5dadec"/></svg><div class="a" style="left:1124px;top:441.3px;width:138px;height:52px;background:#7f7f84;border-radius:2px;box-shadow:0 0 0 .5px #8b8b90,1.2px 1.2px 1.5px rgba(20,20,24,.65)"></div><div class="a t" style="right:22.5px;top:444.5px;line-height:20px;font-size:12px;color:#fff;font-weight:bold;letter-spacing:-.76px;">maniya salehi</div><div class="a t fa" dir="rtl" style="right:22.5px;top:468.5px;line-height:20px;font-size:12.5px;color:#fff;transform:scaleX(0.92);transform-origin:right center;">دختر خاله ها</div><svg class="a" style="left:1183.7px;top:471.2px" width="14.6" height="14.6" viewBox="0 0 36 36"><circle cx="18" cy="18" r="16.5" fill="#ffcc4d" stroke="#2b2b2b" stroke-width="2.6"/><path d="M9.5 19.5c1.2 5.2 4.6 8.3 8.5 8.3s7.3-3.1 8.5-8.3c-5.5 1.3-11.5 1.3-17 0z" fill="#5d4037"/><path d="M8 14.5c1.5-2.3 4.5-2.3 6 0M22 14.5c1.5-2.3 4.5-2.3 6 0" fill="none" stroke="#5d4037" stroke-width="2"/><path d="M3.5 18.5c0 3.3 1.8 5 4.2 5s3.3-2.5 1.8-5.5c-2 .9-4 .9-6 .5zM32.5 18.5c0 3.3-1.8 5-4.2 5s-3.3-2.5-1.8-5.5c2 .9 4 .9 6 .5z" fill="#5dadec"/></svg><div class="a" style="left:1124px;top:499.3px;width:138px;height:52.5px;background:#7f7f84;border-radius:2px;box-shadow:0 0 0 .5px #8b8b90,1.2px 1.2px 1.5px rgba(20,20,24,.65)"></div><div class="a t" style="right:22.5px;top:502.5px;line-height:20px;font-size:12px;color:#fff;font-weight:bold;letter-spacing:-.76px;">maryam.yaghoobzadeh</div><svg class="a" style="left:1129.7px;top:529.7px" width="14.6" height="14.6" viewBox="0 0 36 36"><circle cx="18" cy="18" r="16.5" fill="#ffcc4d" stroke="#2b2b2b" stroke-width="2.6"/><path d="M9.5 19.5c1.2 5.2 4.6 8.3 8.5 8.3s7.3-3.1 8.5-8.3c-5.5 1.3-11.5 1.3-17 0z" fill="#5d4037"/><path d="M8 14.5c1.5-2.3 4.5-2.3 6 0M22 14.5c1.5-2.3 4.5-2.3 6 0" fill="none" stroke="#5d4037" stroke-width="2"/><path d="M3.5 18.5c0 3.3 1.8 5 4.2 5s3.3-2.5 1.8-5.5c-2 .9-4 .9-6 .5zM32.5 18.5c0 3.3-1.8 5-4.2 5s-3.3-2.5-1.8-5.5c2 .9 4 .9 6 .5z" fill="#5dadec"/></svg><svg class="a" style="left:1145.7px;top:529.7px" width="14.6" height="14.6" viewBox="0 0 36 36"><circle cx="18" cy="18" r="16.5" fill="#ffcc4d" stroke="#2b2b2b" stroke-width="2.6"/><path d="M9.5 19.5c1.2 5.2 4.6 8.3 8.5 8.3s7.3-3.1 8.5-8.3c-5.5 1.3-11.5 1.3-17 0z" fill="#5d4037"/><path d="M8 14.5c1.5-2.3 4.5-2.3 6 0M22 14.5c1.5-2.3 4.5-2.3 6 0" fill="none" stroke="#5d4037" stroke-width="2"/><path d="M3.5 18.5c0 3.3 1.8 5 4.2 5s3.3-2.5 1.8-5.5c-2 .9-4 .9-6 .5zM32.5 18.5c0 3.3-1.8 5-4.2 5s-3.3-2.5-1.8-5.5c2 .9 4 .9 6 .5z" fill="#5dadec"/></svg><div class="a" style="left:1124px;top:557.5px;width:138px;height:52.3px;background:#7f7f84;border-radius:2px;box-shadow:0 0 0 .5px #8b8b90,1.2px 1.2px 1.5px rgba(20,20,24,.65)"></div><div class="a t" style="right:22.5px;top:560.5px;line-height:20px;font-size:12px;color:#fff;font-weight:bold;letter-spacing:-.74px;">mohadeseh jahanbani</div><div class="a t fa" dir="rtl" style="right:22px;top:585.5px;line-height:20px;font-size:12.5px;color:#fff;transform:scaleX(0.91);transform-origin:right center;">'۶ مگه نمیشه ۲۱۶؟</div><div class="a" style="left:967.5px;top:617px;width:298px;height:31.5px;background:#85858a"></div><div class="a" style="left:968.5px;top:618px;width:296px;height:29.5px;background:#323539"></div><svg class="a" style="left:970.5px;top:623px" width="19" height="19" viewBox="0 0 24 24"><path fill="#fff" d="M21.99 21L1 12 21.99 3 22 10 7 12l15 2z"/></svg><svg class="a" style="left:991.5px;top:623px" width="19" height="19" viewBox="0 0 24 24"><path fill="#fff" d="M11.99 2C6.47 2 2 6.48 2 12s4.47 10 9.99 10C17.52 22 22 17.52 22 12S17.52 2 11.99 2zM12 20c-4.42 0-8-3.58-8-8s3.58-8 8-8 8 3.58 8 8-3.58 8-8 8zm3.5-9c.83 0 1.5-.67 1.5-1.5S16.33 8 15.5 8 14 8.67 14 9.5s.67 1.5 1.5 1.5zm-7 0c.83 0 1.5-.67 1.5-1.5S9.33 8 8.5 8 7 8.67 7 9.5 7.67 11 8.5 11zm3.5 6.5c2.33 0 4.31-1.46 5.11-3.5H6.89c.8 2.04 2.78 3.5 5.11 3.5z"/></svg><div class="a t fa" dir="rtl" style="right:21px;top:622.5px;line-height:20px;font-size:12.5px;color:#a6a6aa;transform:scaleX(0.89);transform-origin:right center;">پیام خود را وارد کنید</div><div class="a t fa" style="left:20.5px;top:661px;line-height:20px;font-size:12px;color:#fff;"><span style="display:inline-block;transform:scaleX(.92);transform-origin:left center">اسکای‌روم</span></div><div class="a t" style="left:67.7px;top:658.7px;line-height:20px;font-size:9.5px;color:#fff;font-weight:bold;">™</div><div class="a t" style="left:9.3px;top:661.5px;line-height:20px;font-size:13.5px;color:#fff;">©</div><div class="a" style="left:0px;top:686px;width:1280px;height:34px;background:#fff"></div><div class="a" style="left:0px;top:718px;width:1280px;height:2px;background:#111"></div><div class="a" style="left:0px;top:686px;width:100px;height:32px;background:#c6c6c6"></div><div class="a" style="left:100px;top:686px;width:118px;height:32px;background:#fdfdfd;box-shadow:inset -1px 0 0 #ececec"></div><div class="a t" style="left:14px;top:687px;line-height:20px;font-size:13.5px;color:#f4f4f4;font-weight:bold;letter-spacing:.15px;">20 / 2:16 PI</div><div class="a" style="left:412px;top:686px;width:460.5px;height:29.5px;background:linear-gradient(#cbcbcb,#c3c3c3);border-radius:0 0 7px 7px;box-shadow:inset 0 -1.5px 0 #9b9b9b,inset 1px 0 0 #adadad,inset -1px 0 0 #adadad;overflow:hidden"><div class="a" style="left:8px;top:-6px;width:27px;height:27px;border-radius:50%;background:#f4f4f4"></div><svg class="a" style="left:11px;top:-2px" width="22" height="22" viewBox="0 0 22 22"><path d="M4 17L17 2l3 2.5L7 19.5z" fill="#c62828"/><path d="M4 17l-.8 3.5L7 19.5z" fill="#333"/><path d="M8 12.5L18.5 1" stroke="#fff" stroke-width="1"/><path d="M5 21c3-2 6-2 8-1.5s2-1 0-1.5" stroke="#444" stroke-width="1" fill="none"/></svg><svg class="a" style="left:45px;top:1px" width="22" height="18" viewBox="0 0 22 18"><path d="M1 11L10 2l8 5-9 9z" fill="#f48fb1"/><path d="M10 2l3-2 8 4.5-3 2.5z" fill="#5c8fe0"/><path d="M1 11l8 5v1.5l-8-5z" fill="#e27aa0"/></svg><svg class="a" style="left:80px;top:-1px" width="22" height="20" viewBox="0 0 22 20"><path d="M3 15.5L17 0l3.5 3L7 18.5z" fill="#f5d30a"/><path d="M5 13.5L18.5 .5" stroke="#222" stroke-width="1.6"/><path d="M3 15.5l-1.5 4L7 18.5z" fill="#8a6a3a"/><path d="M6 19.5h9l2-4-5 1.5z" fill="#f0b429"/></svg><svg class="a" style="left:121px;top:-1.5px" width="11" height="17" viewBox="0 0 12 18"><path d="M1 1l9.5 9.5H6.3l2.6 5.5-2.3 1.1L4 11.5 1 14.5z" fill="#1f2a55" stroke="#3a3f6a" stroke-width=".6"/></svg><svg class="a" style="left:148px;top:0" width="24" height="20" viewBox="0 0 24 20"><path d="M3 1.5c3 1.5 6 4.5 8 7l5-1c3 0 5 3 5 6.5 0 3-2 5-5 5-4 0-6-2-7.5-5.5-1-3-3-6-6.5-10.5z" fill="#fbe3cf" stroke="#caa27e" stroke-width=".8"/></svg><svg class="a" style="left:187px;top:-1px" width="22" height="21" viewBox="0 0 22 21"><path d="M3 0c1 2 2 4.5 2.5 7L7 2l2 5.5L11 3l1 5 5-1c2.5 1 3.5 4 3.5 7s-2.5 6-6 6c-4 0-6-2-7.5-5.5C6 12 4 8 2 4z" fill="#fbe3cf" stroke="#caa27e" stroke-width=".8"/></svg><svg class="a" style="left:221.5px;top:-2px" width="24" height="22" viewBox="0 0 24 22"><circle cx="7.5" cy="7.5" r="5.8" fill="#e9e9e9" stroke="#333" stroke-width="1.4"/><path d="M5 7.5h5M7.5 5v5" stroke="#333" stroke-width="1.3"/><path d="M12 12l7.5 7" stroke="#333" stroke-width="3.2" stroke-linecap="round"/></svg><svg class="a" style="left:253.5px;top:-2px" width="24" height="22" viewBox="0 0 24 22"><circle cx="7.5" cy="7.5" r="5.8" fill="#e9e9e9" stroke="#333" stroke-width="1.4"/><path d="M5 7.5h5" stroke="#333" stroke-width="1.3"/><path d="M12 12l7.5 7" stroke="#333" stroke-width="3.2" stroke-linecap="round"/></svg><svg class="a" style="left:287px;top:-1px" width="22" height="20" viewBox="0 0 22 20"><path d="M2 18L12 8" stroke="#e53935" stroke-width="1.2"/><path d="M11 9l8-8.5" stroke="#444" stroke-width="3"/><path d="M12.5 7.5l4-4" stroke="#eee" stroke-width="1.6"/></svg><svg class="a" style="left:322px;top:-1px" width="22" height="20" viewBox="0 0 22 20"><path d="M2.5 16L18 0" stroke="#111" stroke-width="1.3"/><circle cx="2.8" cy="16" r="1.8" fill="#111"/></svg><div class="a t" style="left:361px;top:-3px;font-family:'Liberation Serif',serif;font-weight:bold;font-style:italic;font-size:19px;line-height:22px;color:#111">A</div><div class="a" style="left:374.5px;top:-1px;width:1.2px;height:17px;background:#222"></div><div class="a" style="left:396px;top:-3px;width:18px;height:19px;background:#8fd3e8;border-left:1px dashed #2b5fa8;border-right:1px dashed #2b5fa8;box-sizing:border-box"></div><svg class="a" style="left:395px;top:9px" width="20" height="9" viewBox="0 0 20 9"><circle cx="3" cy="3" r="2" fill="none" stroke="#1f3f9f" stroke-width="1.4"/><circle cx="4" cy="6.5" r="2" fill="none" stroke="#1f3f9f" stroke-width="1.4"/><path d="M6 4l13-2M6 5.5l13 1.5" stroke="#9aa3ad" stroke-width="1.3"/></svg><div class="a" style="left:428px;top:3px;width:21px;height:10.5px;background:repeating-linear-gradient(#e8e8e8 0 1.5px,#9a9a9a 1.5px 2.6px);border:1px solid #777;border-bottom:2px solid #666;box-sizing:border-box;border-radius:1px"></div></div><div class="a" style="left:1213px;top:686px;width:64px;height:19.5px;background:linear-gradient(#c9c9c9,#bdbdbd);border-radius:0 0 5px 5px"></div><div class="a t" style="left:1229.8px;top:685.3px;line-height:20px;font-size:13.6px;color:#fff;font-weight:bold;letter-spacing:.2px;">2.0 x</div><svg class="a" style="left:980px;top:706px" width="18" height="14" viewBox="0 0 18 14"><path d="M9 0v14M1 8h16" stroke="#111" stroke-width="1.5"/></svg><div class="a" style="left:720px;top:0px;width:300.4px;height:45.8px;box-shadow:0 0 0 .8px #4a4a4a;overflow:hidden"><div class="a" style="left:0px;top:0px;width:41px;height:47px;background:linear-gradient(#b9b9b9,#8d8d8d);"></div><div class="a" style="left:9.5px;top:11px;width:22px;height:23px;background:#e4002b;border:1.2px solid #f3c9c9;border-radius:2px;box-sizing:border-box"></div><div class="a" style="left:41px;top:0px;width:24px;height:23px;background:linear-gradient(#b9b9b9,#8d8d8d);box-shadow:inset 1px 0 0 #777,inset 0 -1px 0 #777"></div><div class="a" style="left:41px;top:23px;width:24px;height:24px;background:linear-gradient(#b9b9b9,#8d8d8d);box-shadow:inset 1px 0 0 #777"></div><svg class="a" style="left:44px;top:2px" width="18" height="16" viewBox="0 0 18 16"><rect x="1" y="4" width="16" height="11" rx="2" fill="#3b4a78" stroke="#dfe6f3" stroke-width="1"/><rect x="5.5" y="1.5" width="6" height="3.5" rx="1" fill="#3b4a78" stroke="#dfe6f3" stroke-width=".8"/><circle cx="9" cy="9.5" r="3.6" fill="#6d86c6" stroke="#1c2545" stroke-width="1.2"/><circle cx="14.3" cy="6.3" r="1" fill="#f6d34a"/></svg><svg class="a" style="left:45px;top:26px" width="16" height="17" viewBox="0 0 16 17"><rect x="1.5" y="1.5" width="5" height="14" rx="1" fill="#2d7cc4" stroke="#e6eefa" stroke-width="1"/><rect x="9.5" y="1.5" width="5" height="14" rx="1" fill="#2d7cc4" stroke="#e6eefa" stroke-width="1"/></svg><div class="a" style="left:65px;top:0px;width:67px;height:47px;background:#000"></div><div class="a t" style="left:65px;top:9px;width:67px;height:26px;line-height:26px;text-align:center;font-family:'Liberation Mono',monospace;font-size:16px;letter-spacing:-2.3px;color:#041004;-webkit-text-stroke:.5px #98e898;transform:translateY(1.3px) scaleY(1.38) skewX(-6deg)">00:39:09</div><div class="a" style="left:132px;top:0px;width:95px;height:23px;background:linear-gradient(#9c9c9c,#7d7d7d);box-shadow:inset 0 -1px 0 #666"></div><div class="a t" style="left:132px;top:1px;width:95px;line-height:21px;text-align:center;font-family:'Liberation Serif',serif;font-weight:bold;font-size:12.3px;color:#fff;text-shadow:0 0 1.5px #000,0 0 1.5px #000,0 0 1px #000">1914 × 1077</div><div class="a" style="left:227px;top:0px;width:24.7px;height:23px;background:linear-gradient(#f4f4f4,#c9c9c9);box-shadow:inset 1px 0 0 #777,inset 0 -1px 0 #777"></div><div class="a" style="left:233px;top:4.5px;width:13px;height:12px;border:1.7px solid #2fae3a;box-sizing:border-box;background:#e6efe6"></div><div class="a" style="left:251.7px;top:0px;width:24.7px;height:23px;background:linear-gradient(#b9b9b9,#8d8d8d);box-shadow:inset 1px 0 0 #777,inset 0 -1px 0 #777"></div><div class="a" style="left:257.7px;top:11px;width:13px;height:3.5px;background:#3a86cf;border-radius:1px;border:.5px solid #dbe6f5"></div><div class="a" style="left:276.4px;top:0px;width:24.7px;height:23px;background:linear-gradient(#b9b9b9,#8d8d8d);box-shadow:inset 1px 0 0 #777,inset 0 -1px 0 #777"></div><svg class="a" style="left:282.4px;top:4.5px" width="13" height="13" viewBox="0 0 13 13"><path d="M2 2l9 9M11 2l-9 9" stroke="#d0021b" stroke-width="2.3" fill="none"/></svg><div class="a" style="left:132px;top:23px;width:24.142857142857142px;height:24px;background:linear-gradient(#f4f4f4,#c9c9c9);box-shadow:inset 1px 0 0 #888"></div><svg class="a" style="left:135.1px;top:26px" width="18" height="18" viewBox="0 0 18 18"><path d="M2 6.5h3.5L10 3v12l-4.5-3.5H2z" fill="#d7e6f5" stroke="#2c6fb0" stroke-width="1.2"/><path d="M12 6a4.5 4.5 0 0 1 0 6M14 4a7.5 7.5 0 0 1 0 10" stroke="#2c6fb0" stroke-width="1.3" fill="none"/></svg><div class="a" style="left:156.14285714285714px;top:23px;width:24.142857142857142px;height:24px;background:linear-gradient(#f4f4f4,#c9c9c9);box-shadow:inset 1px 0 0 #888"></div><svg class="a" style="left:160.2px;top:25px" width="16" height="20" viewBox="0 0 16 20"><rect x="5" y="1" width="6" height="11" rx="3" fill="#8fb8df" stroke="#2c6fb0" stroke-width="1"/><path d="M2.5 9.5a5.5 5.5 0 0 0 11 0M8 15v3M5 18.5h6" stroke="#2c6fb0" stroke-width="1.2" fill="none"/></svg><div class="a" style="left:180.28571428571428px;top:23px;width:24.142857142857142px;height:24px;background:linear-gradient(#b9b9b9,#8d8d8d);box-shadow:inset 1px 0 0 #888"></div><svg class="a" style="left:183.4px;top:25px" width="18" height="20" viewBox="0 0 18 20"><circle cx="9" cy="9" r="7" fill="#3f6f9f" stroke="#1f3f5f" stroke-width="1"/><circle cx="9" cy="9" r="3.8" fill="#a8c8e8" stroke="#e8f0f8" stroke-width="1"/><path d="M3.5 18.5c1-2.5 10-2.5 11 0z" fill="#3f6f9f"/></svg><div class="a" style="left:204.42857142857144px;top:23px;width:24.142857142857142px;height:24px;background:linear-gradient(#f4f4f4,#c9c9c9);box-shadow:inset 1px 0 0 #888"></div><svg class="a" style="left:209.5px;top:26px" width="14" height="19" viewBox="0 0 14 19"><path d="M2 1.5v13.5l3.3-3 2.4 5.3 2.2-1-2.4-5.2H12z" fill="#fff" stroke="#000" stroke-width="1.4" stroke-linejoin="round"/></svg><div class="a" style="left:228.57142857142856px;top:23px;width:24.142857142857142px;height:24px;background:linear-gradient(#b9b9b9,#8d8d8d);box-shadow:inset 1px 0 0 #888"></div><svg class="a" style="left:231.6px;top:26px" width="18" height="18" viewBox="0 0 18 18"><path d="M3 12l9-9 3.5 3.5-9 9L2 16.5z" fill="#2f8fd8" stroke="#1d5f9c" stroke-width="1"/><path d="M2 16.5l1-4.5 3.5 3.5z" fill="#f2d6a2"/></svg><div class="a" style="left:252.71428571428572px;top:23px;width:24.142857142857142px;height:24px;background:linear-gradient(#b9b9b9,#8d8d8d);box-shadow:inset 1px 0 0 #888"></div><svg class="a" style="left:255.8px;top:27px" width="18" height="16" viewBox="0 0 18 16"><path d="M1 2h6l1.5 2H17v11H1z" fill="#f2c230" stroke="#c8960c" stroke-width=".8"/><path d="M1 15l2.5-8H18l-2 8z" fill="#fbe36a" stroke="#c8960c" stroke-width=".6"/></svg><div class="a" style="left:276.8571428571429px;top:23px;width:24.142857142857142px;height:24px;background:linear-gradient(#b9b9b9,#8d8d8d);box-shadow:inset 1px 0 0 #888"></div><svg class="a" style="left:279.9px;top:26px" width="18" height="18" viewBox="0 0 18 18"><circle cx="9" cy="9" r="5.2" fill="none" stroke="#2f4f6f" stroke-width="3.4" stroke-dasharray="2.7 1.4"/><circle cx="9" cy="9" r="4.3" fill="#3f6587"/><circle cx="9" cy="9" r="2" fill="#9a9a9a"/></svg></div></div></div><div class="a" style="left:45px;top:0px;width:834px;height:0.8px;background:#8d5457"></div><div class="a" style="left:45px;top:0.8px;width:834px;height:1.1px;background:linear-gradient(90deg,#f6d6d6,#f2c0c0)"></div><div class="a" style="left:876.9px;top:0px;width:2.3px;height:470px;background:linear-gradient(#f3a9a9,#ee6660 12%,#ec5f58)"></div></div><div class="a" style="left:958px;top:151px;width:316px;height:216px;background:linear-gradient(#6b6b70,#77777c 60px,#77777c);box-shadow:inset 1px 1px 0 #909094,inset -1px -1px 0 #808085,0 0 0 1px #3c3d40;box-sizing:border-box"></div><svg class="a" style="left:968.5px;top:154px" width="19" height="19" viewBox="0 0 24 24"><path fill="#fff" d="M16 11c1.66 0 2.99-1.34 2.99-3S17.66 5 16 5c-1.66 0-3 1.34-3 3s1.34 3 3 3zm-8 0c1.66 0 2.99-1.34 2.99-3S9.66 5 8 5C6.34 5 5 6.34 5 8s1.34 3 3 3zm0 2c-2.33 0-7 1.17-7 3.5V19h14v-2.5c0-2.33-4.67-3.5-7-3.5zm8 0c-.29 0-.62.02-.97.05 1.16.84 1.97 1.97 1.97 3.45V19h6v-2.5c0-2.33-4.67-3.5-7-3.5z"/></svg><div class="a t" style="left:990.5px;top:153px;line-height:20px;font-size:13px;color:#fff;letter-spacing:-.3px">10</div><div class="a t fa" dir="rtl" style="right:34px;top:152.5px;line-height:20px;font-size:12px;color:#fff;transform:scaleX(0.86);transform-origin:right center;">کاربران</div><svg class="a" style="left:1251px;top:153.5px" width="19" height="19" viewBox="0 0 24 24"><path fill="#fff" d="M12 8c1.1 0 2-.9 2-2s-.9-2-2-2-2 .9-2 2 .9 2 2 2zm0 2c-1.1 0-2 .9-2 2s.9 2 2 2 2-.9 2-2-.9-2-2-2zm0 6c-1.1 0-2 .9-2 2s.9 2 2 2 2-.9 2-2-.9-2-2-2z"/></svg><div class="a" style="left:967.5px;top:178.5px;width:298px;height:178.5px;background:linear-gradient(90deg,#8c8c90 0 99.4%,#606065 99.4%)"></div><div class="a" style="left:968.5px;top:179.5px;width:296px;height:176.5px;background:#323539;overflow:hidden"><svg class="a" style="left:270.7px;top:6px" width="19" height="19" viewBox="0 0 24 24"><path fill="#42a5f5" d="M12 12c2.21 0 4-1.79 4-4s-1.79-4-4-4-4 1.79-4 4 1.79 4 4 4zm0 2c-2.67 0-8 1.34-8 4v2h16v-2c0-2.66-5.33-4-8-4z"/></svg><div class="a t fa" dir="rtl" style="right:27.5px;top:6.5px;line-height:20px;font-weight:bold;font-size:12.5px;color:#fff;transform:scaleX(0.72);transform-origin:right center">استاد آژ دبیر ریاضی</div><svg class="a" style="left:270.7px;top:31.85px" width="19" height="19" viewBox="0 0 24 24"><path fill="#fff" d="M12 12c2.21 0 4-1.79 4-4s-1.79-4-4-4-4 1.79-4 4 1.79 4 4 4zm0 2c-2.67 0-8 1.34-8 4v2h16v-2c0-2.66-5.33-4-8-4z"/></svg><div class="a t" style="right:27.5px;top:32.35px;line-height:20px;font-size:12.3px;color:#fff;letter-spacing:-.35px">asefeh</div><svg class="a" style="left:270.7px;top:57.7px" width="19" height="19" viewBox="0 0 24 24"><path fill="#fff" d="M12 12c2.21 0 4-1.79 4-4s-1.79-4-4-4-4 1.79-4 4 1.79 4 4 4zm0 2c-2.67 0-8 1.34-8 4v2h16v-2c0-2.66-5.33-4-8-4z"/></svg><div class="a t" style="right:27.5px;top:58.2px;line-height:20px;font-size:12.3px;color:#fff;letter-spacing:-.35px">pariya ghanbari</div><svg class="a" style="left:270.7px;top:83.55px" width="19" height="19" viewBox="0 0 24 24"><path fill="#fff" d="M12 12c2.21 0 4-1.79 4-4s-1.79-4-4-4-4 1.79-4 4 1.79 4 4 4zm0 2c-2.67 0-8 1.34-8 4v2h16v-2c0-2.66-5.33-4-8-4z"/></svg><div class="a t fa" dir="rtl" style="right:27.5px;top:84.05px;line-height:20px;font-size:12.5px;color:#fff;transform:scaleX(0.86);transform-origin:right center">فاطمه رئیسی</div><svg class="a" style="left:270.7px;top:109.4px" width="19" height="19" viewBox="0 0 24 24"><path fill="#fff" d="M12 12c2.21 0 4-1.79 4-4s-1.79-4-4-4-4 1.79-4 4 1.79 4 4 4zm0 2c-2.67 0-8 1.34-8 4v2h16v-2c0-2.66-5.33-4-8-4z"/></svg><div class="a t" style="right:27.5px;top:109.9px;line-height:20px;font-size:12.3px;color:#fff;letter-spacing:-.35px">mehdi akbari</div><svg class="a" style="left:270.7px;top:135.25px" width="19" height="19" viewBox="0 0 24 24"><path fill="#fff" d="M12 12c2.21 0 4-1.79 4-4s-1.79-4-4-4-4 1.79-4 4 1.79 4 4 4zm0 2c-2.67 0-8 1.34-8 4v2h16v-2c0-2.66-5.33-4-8-4z"/></svg><div class="a t fa" dir="rtl" style="right:27.5px;top:135.75px;line-height:20px;font-size:12.5px;color:#fff;transform:scaleX(0.86);transform-origin:right center">امیر رضا ابراهیمیان</div><svg class="a" style="left:270.7px;top:161.1px" width="19" height="19" viewBox="0 0 24 24"><path fill="#fff" d="M12 12c2.21 0 4-1.79 4-4s-1.79-4-4-4-4 1.79-4 4 1.79 4 4 4zm0 2c-2.67 0-8 1.34-8 4v2h16v-2c0-2.66-5.33-4-8-4z"/></svg><div class="a t" style="right:27.5px;top:161.6px;line-height:20px;font-size:12.3px;color:#fff;letter-spacing:-.35px">maryam komgo</div><svg class="a" style="left:9px;top:10.2px" width="17" height="17" viewBox="0 0 24 24"><path fill="#2196f3" d="M12 14c1.66 0 2.99-1.34 2.99-3L15 5c0-1.66-1.34-3-3-3S9 3.34 9 5v6c0 1.66 1.34 3 3 3zm5.3-3c0 3-2.54 5.1-5.3 5.1S6.7 14 6.7 11H5c0 3.41 2.72 6.23 6 6.72V21h2v-3.28c3.28-.48 6-3.3 6-6.72h-1.7z"/></svg><svg class="a" style="left:45.5px;top:11.3px" width="17" height="17" viewBox="0 0 24 24"><path fill="#fff" d="M20 18c1.1 0 1.99-.9 1.99-2L22 6c0-1.1-.9-2-2-2H4c-1.1 0-2 .9-2 2v10c0 1.1.9 2 2 2H0v2h24v-2h-4zM4 6h16v10H4V6z"/></svg><svg class="a" style="left:9px;top:37px" width="17" height="17" viewBox="0 0 24 24"><path fill="#fff" d="M12 14c1.66 0 2.99-1.34 2.99-3L15 5c0-1.66-1.34-3-3-3S9 3.34 9 5v6c0 1.66 1.34 3 3 3zm5.3-3c0 3-2.54 5.1-5.3 5.1S6.7 14 6.7 11H5c0 3.41 2.72 6.23 6 6.72V21h2v-3.28c3.28-.48 6-3.3 6-6.72h-1.7z"/></svg></div><div class="a" style="left:958px;top:377px;width:316px;height:280.5px;background:linear-gradient(#6b6b70,#77777c 60px,#77777c);box-shadow:inset 1px 1px 0 #909094,inset -1px -1px 0 #808085,0 0 0 1px #3c3d40;box-sizing:border-box"></div><svg class="a" style="left:970.5px;top:381.5px" width="17" height="17" viewBox="0 0 24 24"><path fill="#fff" d="M20 2H4c-1.1 0-1.99.9-1.99 2L2 22l4-4h14c1.1 0 2-.9 2-2V4c0-1.1-.9-2-2-2zM6 9h12v2H6V9zm8 5H6v-2h8v2zm4-6H6V6h12v2z"/></svg><svg class="a" style="left:1251px;top:380px" width="19" height="19" viewBox="0 0 24 24"><path fill="#fff" d="M12 8c1.1 0 2-.9 2-2s-.9-2-2-2-2 .9-2 2 .9 2 2 2zm0 2c-1.1 0-2 .9-2 2s.9 2 2 2 2-.9 2-2-.9-2-2-2zm0 6c-1.1 0-2 .9-2 2s.9 2 2 2 2-.9 2-2-.9-2-2-2z"/></svg><div class="a" style="left:967.5px;top:405px;width:298px;height:208px;background:linear-gradient(90deg,#85858a 0 99.4%,#5a5a5f 99.4%)"></div><div class="a" style="left:968.5px;top:406px;width:296px;height:206px;background:#323539"></div><div class="a" style="left:1124px;top:406.3px;width:138px;height:28.7px;background:#7f7f84;border-radius:2px;box-shadow:0 0 0 .5px #8b8b90,1.2px 1.2px 1.5px rgba(20,20,24,.65)"></div><svg class="a" style="left:1129.7px;top:413.2px" width="14.6" height="14.6" viewBox="0 0 36 36"><circle cx="18" cy="18" r="16.5" fill="#ffcc4d" stroke="#2b2b2b" stroke-width="2.6"/><path d="M9.5 19.5c1.2 5.2 4.6 8.3 8.5 8.3s7.3-3.1 8.5-8.3c-5.5 1.3-11.5 1.3-17 0z" fill="#5d4037"/><path d="M8 14.5c1.5-2.3 4.5-2.3 6 0M22 14.5c1.5-2.3 4.5-2.3 6 0" fill="none" stroke="#5d4037" stroke-width="2"/><path d="M3.5 18.5c0 3.3 1.8 5 4.2 5s3.3-2.5 1.8-5.5c-2 .9-4 .9-6 .5zM32.5 18.5c0 3.3-1.8 5-4.2 5s-3.3-2.5-1.8-5.5c2 .9 4 .9 6 .5z" fill="#5dadec"/></svg><div class="a" style="left:1124px;top:441.3px;width:138px;height:52px;background:#7f7f84;border-radius:2px;box-shadow:0 0 0 .5px #8b8b90,1.2px 1.2px 1.5px rgba(20,20,24,.65)"></div><div class="a t" style="right:22.5px;top:444.5px;line-height:20px;font-size:12px;color:#fff;font-weight:bold;letter-spacing:-.76px;">maniya salehi</div><div class="a t fa" dir="rtl" style="right:22.5px;top:468.5px;line-height:20px;font-size:12.5px;color:#fff;transform:scaleX(0.92);transform-origin:right center;">دختر خاله ها</div><svg class="a" style="left:1183.7px;top:471.2px" width="14.6" height="14.6" viewBox="0 0 36 36"><circle cx="18" cy="18" r="16.5" fill="#ffcc4d" stroke="#2b2b2b" stroke-width="2.6"/><path d="M9.5 19.5c1.2 5.2 4.6 8.3 8.5 8.3s7.3-3.1 8.5-8.3c-5.5 1.3-11.5 1.3-17 0z" fill="#5d4037"/><path d="M8 14.5c1.5-2.3 4.5-2.3 6 0M22 14.5c1.5-2.3 4.5-2.3 6 0" fill="none" stroke="#5d4037" stroke-width="2"/><path d="M3.5 18.5c0 3.3 1.8 5 4.2 5s3.3-2.5 1.8-5.5c-2 .9-4 .9-6 .5zM32.5 18.5c0 3.3-1.8 5-4.2 5s-3.3-2.5-1.8-5.5c2 .9 4 .9 6 .5z" fill="#5dadec"/></svg><div class="a" style="left:1124px;top:499.3px;width:138px;height:52.5px;background:#7f7f84;border-radius:2px;box-shadow:0 0 0 .5px #8b8b90,1.2px 1.2px 1.5px rgba(20,20,24,.65)"></div><div class="a t" style="right:22.5px;top:502.5px;line-height:20px;font-size:12px;color:#fff;font-weight:bold;letter-spacing:-.76px;">maryam.yaghoobzadeh</div><svg class="a" style="left:1129.7px;top:529.7px" width="14.6" height="14.6" viewBox="0 0 36 36"><circle cx="18" cy="18" r="16.5" fill="#ffcc4d" stroke="#2b2b2b" stroke-width="2.6"/><path d="M9.5 19.5c1.2 5.2 4.6 8.3 8.5 8.3s7.3-3.1 8.5-8.3c-5.5 1.3-11.5 1.3-17 0z" fill="#5d4037"/><path d="M8 14.5c1.5-2.3 4.5-2.3 6 0M22 14.5c1.5-2.3 4.5-2.3 6 0" fill="none" stroke="#5d4037" stroke-width="2"/><path d="M3.5 18.5c0 3.3 1.8 5 4.2 5s3.3-2.5 1.8-5.5c-2 .9-4 .9-6 .5zM32.5 18.5c0 3.3-1.8 5-4.2 5s-3.3-2.5-1.8-5.5c2 .9 4 .9 6 .5z" fill="#5dadec"/></svg><svg class="a" style="left:1145.7px;top:529.7px" width="14.6" height="14.6" viewBox="0 0 36 36"><circle cx="18" cy="18" r="16.5" fill="#ffcc4d" stroke="#2b2b2b" stroke-width="2.6"/><path d="M9.5 19.5c1.2 5.2 4.6 8.3 8.5 8.3s7.3-3.1 8.5-8.3c-5.5 1.3-11.5 1.3-17 0z" fill="#5d4037"/><path d="M8 14.5c1.5-2.3 4.5-2.3 6 0M22 14.5c1.5-2.3 4.5-2.3 6 0" fill="none" stroke="#5d4037" stroke-width="2"/><path d="M3.5 18.5c0 3.3 1.8 5 4.2 5s3.3-2.5 1.8-5.5c-2 .9-4 .9-6 .5zM32.5 18.5c0 3.3-1.8 5-4.2 5s-3.3-2.5-1.8-5.5c2 .9 4 .9 6 .5z" fill="#5dadec"/></svg><div class="a" style="left:1124px;top:557.5px;width:138px;height:52.3px;background:#7f7f84;border-radius:2px;box-shadow:0 0 0 .5px #8b8b90,1.2px 1.2px 1.5px rgba(20,20,24,.65)"></div><div class="a t" style="right:22.5px;top:560.5px;line-height:20px;font-size:12px;color:#fff;font-weight:bold;letter-spacing:-.74px;">mohadeseh jahanbani</div><div class="a t fa" dir="rtl" style="right:22px;top:585.5px;line-height:20px;font-size:12.5px;color:#fff;transform:scaleX(0.91);transform-origin:right center;">'۶ مگه نمیشه ۲۱۶؟</div><div class="a" style="left:967.5px;top:617px;width:298px;height:31.5px;background:#85858a"></div><div class="a" style="left:968.5px;top:618px;width:296px;height:29.5px;background:#323539"></div><svg class="a" style="left:970.5px;top:623px" width="19" height="19" viewBox="0 0 24 24"><path fill="#fff" d="M21.99 21L1 12 21.99 3 22 10 7 12l15 2z"/></svg><svg class="a" style="left:991.5px;top:623px" width="19" height="19" viewBox="0 0 24 24"><path fill="#fff" d="M11.99 2C6.47 2 2 6.48 2 12s4.47 10 9.99 10C17.52 22 22 17.52 22 12S17.52 2 11.99 2zM12 20c-4.42 0-8-3.58-8-8s3.58-8 8-8 8 3.58 8 8-3.58 8-8 8zm3.5-9c.83 0 1.5-.67 1.5-1.5S16.33 8 15.5 8 14 8.67 14 9.5s.67 1.5 1.5 1.5zm-7 0c.83 0 1.5-.67 1.5-1.5S9.33 8 8.5 8 7 8.67 7 9.5 7.67 11 8.5 11zm3.5 6.5c2.33 0 4.31-1.46 5.11-3.5H6.89c.8 2.04 2.78 3.5 5.11 3.5z"/></svg><div class="a t fa" dir="rtl" style="right:21px;top:622.5px;line-height:20px;font-size:12.5px;color:#a6a6aa;transform:scaleX(0.89);transform-origin:right center;">پیام خود را وارد کنید</div><div class="a t fa" style="left:20.5px;top:661px;line-height:20px;font-size:12px;color:#fff;"><span style="display:inline-block;transform:scaleX(.92);transform-origin:left center">اسکای‌روم</span></div><div class="a t" style="left:67.7px;top:658.7px;line-height:20px;font-size:9.5px;color:#fff;font-weight:bold;">™</div><div class="a t" style="left:9.3px;top:661.5px;line-height:20px;font-size:13.5px;color:#fff;">©</div><div class="a" style="left:0px;top:686px;width:1280px;height:34px;background:#fff"></div><div class="a" style="left:0px;top:718px;width:1280px;height:2px;background:#111"></div><div class="a" style="left:0px;top:686px;width:100px;height:32px;background:#c6c6c6"></div><div class="a" style="left:100px;top:686px;width:118px;height:32px;background:#fdfdfd;box-shadow:inset -1px 0 0 #ececec"></div><div class="a t" style="left:14px;top:687px;line-height:20px;font-size:13.5px;color:#f4f4f4;font-weight:bold;letter-spacing:.15px;">20 / 2:16 PI</div><div class="a" style="left:412px;top:686px;width:460.5px;height:29.5px;background:linear-gradient(#cbcbcb,#c3c3c3);border-radius:0 0 7px 7px;box-shadow:inset 0 -1.5px 0 #9b9b9b,inset 1px 0 0 #adadad,inset -1px 0 0 #adadad;overflow:hidden"><div class="a" style="left:8px;top:-6px;width:27px;height:27px;border-radius:50%;background:#f4f4f4"></div><svg class="a" style="left:11px;top:-2px" width="22" height="22" viewBox="0 0 22 22"><path d="M4 17L17 2l3 2.5L7 19.5z" fill="#c62828"/><path d="M4 17l-.8 3.5L7 19.5z" fill="#333"/><path d="M8 12.5L18.5 1" stroke="#fff" stroke-width="1"/><path d="M5 21c3-2 6-2 8-1.5s2-1 0-1.5" stroke="#444" stroke-width="1" fill="none"/></svg><svg class="a" style="left:45px;top:1px" width="22" height="18" viewBox="0 0 22 18"><path d="M1 11L10 2l8 5-9 9z" fill="#f48fb1"/><path d="M10 2l3-2 8 4.5-3 2.5z" fill="#5c8fe0"/><path d="M1 11l8 5v1.5l-8-5z" fill="#e27aa0"/></svg><svg class="a" style="left:80px;top:-1px" width="22" height="20" viewBox="0 0 22 20"><path d="M3 15.5L17 0l3.5 3L7 18.5z" fill="#f5d30a"/><path d="M5 13.5L18.5 .5" stroke="#222" stroke-width="1.6"/><path d="M3 15.5l-1.5 4L7 18.5z" fill="#8a6a3a"/><path d="M6 19.5h9l2-4-5 1.5z" fill="#f0b429"/></svg><svg class="a" style="left:121px;top:-1.5px" width="11" height="17" viewBox="0 0 12 18"><path d="M1 1l9.5 9.5H6.3l2.6 5.5-2.3 1.1L4 11.5 1 14.5z" fill="#1f2a55" stroke="#3a3f6a" stroke-width=".6"/></svg><svg class="a" style="left:148px;top:0" width="24" height="20" viewBox="0 0 24 20"><path d="M3 1.5c3 1.5 6 4.5 8 7l5-1c3 0 5 3 5 6.5 0 3-2 5-5 5-4 0-6-2-7.5-5.5-1-3-3-6-6.5-10.5z" fill="#fbe3cf" stroke="#caa27e" stroke-width=".8"/></svg><svg class="a" style="left:187px;top:-1px" width="22" height="21" viewBox="0 0 22 21"><path d="M3 0c1 2 2 4.5 2.5 7L7 2l2 5.5L11 3l1 5 5-1c2.5 1 3.5 4 3.5 7s-2.5 6-6 6c-4 0-6-2-7.5-5.5C6 12 4 8 2 4z" fill="#fbe3cf" stroke="#caa27e" stroke-width=".8"/></svg><svg class="a" style="left:221.5px;top:-2px" width="24" height="22" viewBox="0 0 24 22"><circle cx="7.5" cy="7.5" r="5.8" fill="#e9e9e9" stroke="#333" stroke-width="1.4"/><path d="M5 7.5h5M7.5 5v5" stroke="#333" stroke-width="1.3"/><path d="M12 12l7.5 7" stroke="#333" stroke-width="3.2" stroke-linecap="round"/></svg><svg class="a" style="left:253.5px;top:-2px" width="24" height="22" viewBox="0 0 24 22"><circle cx="7.5" cy="7.5" r="5.8" fill="#e9e9e9" stroke="#333" stroke-width="1.4"/><path d="M5 7.5h5" stroke="#333" stroke-width="1.3"/><path d="M12 12l7.5 7" stroke="#333" stroke-width="3.2" stroke-linecap="round"/></svg><svg class="a" style="left:287px;top:-1px" width="22" height="20" viewBox="0 0 22 20"><path d="M2 18L12 8" stroke="#e53935" stroke-width="1.2"/><path d="M11 9l8-8.5" stroke="#444" stroke-width="3"/><path d="M12.5 7.5l4-4" stroke="#eee" stroke-width="1.6"/></svg><svg class="a" style="left:322px;top:-1px" width="22" height="20" viewBox="0 0 22 20"><path d="M2.5 16L18 0" stroke="#111" stroke-width="1.3"/><circle cx="2.8" cy="16" r="1.8" fill="#111"/></svg><div class="a t" style="left:361px;top:-3px;font-family:'Liberation Serif',serif;font-weight:bold;font-style:italic;font-size:19px;line-height:22px;color:#111">A</div><div class="a" style="left:374.5px;top:-1px;width:1.2px;height:17px;background:#222"></div><div class="a" style="left:396px;top:-3px;width:18px;height:19px;background:#8fd3e8;border-left:1px dashed #2b5fa8;border-right:1px dashed #2b5fa8;box-sizing:border-box"></div><svg class="a" style="left:395px;top:9px" width="20" height="9" viewBox="0 0 20 9"><circle cx="3" cy="3" r="2" fill="none" stroke="#1f3f9f" stroke-width="1.4"/><circle cx="4" cy="6.5" r="2" fill="none" stroke="#1f3f9f" stroke-width="1.4"/><path d="M6 4l13-2M6 5.5l13 1.5" stroke="#9aa3ad" stroke-width="1.3"/></svg><div class="a" style="left:428px;top:3px;width:21px;height:10.5px;background:repeating-linear-gradient(#e8e8e8 0 1.5px,#9a9a9a 1.5px 2.6px);border:1px solid #777;border-bottom:2px solid #666;box-sizing:border-box;border-radius:1px"></div></div><div class="a" style="left:1213px;top:686px;width:64px;height:19.5px;background:linear-gradient(#c9c9c9,#bdbdbd);border-radius:0 0 5px 5px"></div><div class="a t" style="left:1229.8px;top:685.3px;line-height:20px;font-size:13.6px;color:#fff;font-weight:bold;letter-spacing:.2px;">2.0 x</div><svg class="a" style="left:980px;top:706px" width="18" height="14" viewBox="0 0 18 14"><path d="M9 0v14M1 8h16" stroke="#111" stroke-width="1.5"/></svg><div class="a" style="left:720px;top:0px;width:300.4px;height:45.8px;box-shadow:0 0 0 .8px #4a4a4a;overflow:hidden"><div class="a" style="left:0px;top:0px;width:41px;height:47px;background:linear-gradient(#b9b9b9,#8d8d8d);"></div><div class="a" style="left:9.5px;top:11px;width:22px;height:23px;background:#e4002b;border:1.2px solid #f3c9c9;border-radius:2px;box-sizing:border-box"></div><div class="a" style="left:41px;top:0px;width:24px;height:23px;background:linear-gradient(#b9b9b9,#8d8d8d);box-shadow:inset 1px 0 0 #777,inset 0 -1px 0 #777"></div><div class="a" style="left:41px;top:23px;width:24px;height:24px;background:linear-gradient(#b9b9b9,#8d8d8d);box-shadow:inset 1px 0 0 #777"></div><svg class="a" style="left:44px;top:2px" width="18" height="16" viewBox="0 0 18 16"><rect x="1" y="4" width="16" height="11" rx="2" fill="#3b4a78" stroke="#dfe6f3" stroke-width="1"/><rect x="5.5" y="1.5" width="6" height="3.5" rx="1" fill="#3b4a78" stroke="#dfe6f3" stroke-width=".8"/><circle cx="9" cy="9.5" r="3.6" fill="#6d86c6" stroke="#1c2545" stroke-width="1.2"/><circle cx="14.3" cy="6.3" r="1" fill="#f6d34a"/></svg><svg class="a" style="left:45px;top:26px" width="16" height="17" viewBox="0 0 16 17"><rect x="1.5" y="1.5" width="5" height="14" rx="1" fill="#2d7cc4" stroke="#e6eefa" stroke-width="1"/><rect x="9.5" y="1.5" width="5" height="14" rx="1" fill="#2d7cc4" stroke="#e6eefa" stroke-width="1"/></svg><div class="a" style="left:65px;top:0px;width:67px;height:47px;background:#000"></div><div class="a t" style="left:65px;top:9px;width:67px;height:26px;line-height:26px;text-align:center;font-family:'Liberation Mono',monospace;font-size:16px;letter-spacing:-2.3px;color:#041004;-webkit-text-stroke:.5px #98e898;transform:translateY(1.3px) scaleY(1.38) skewX(-6deg)">00:39:09</div><div class="a" style="left:132px;top:0px;width:95px;height:23px;background:linear-gradient(#9c9c9c,#7d7d7d);box-shadow:inset 0 -1px 0 #666"></div><div class="a t" style="left:132px;top:1px;width:95px;line-height:21px;text-align:center;font-family:'Liberation Serif',serif;font-weight:bold;font-size:12.3px;color:#fff;text-shadow:0 0 1.5px #000,0 0 1.5px #000,0 0 1px #000">1914 × 1077</div><div class="a" style="left:227px;top:0px;width:24.7px;height:23px;background:linear-gradient(#f4f4f4,#c9c9c9);box-shadow:inset 1px 0 0 #777,inset 0 -1px 0 #777"></div><div class="a" style="left:233px;top:4.5px;width:13px;height:12px;border:1.7px solid #2fae3a;box-sizing:border-box;background:#e6efe6"></div><div class="a" style="left:251.7px;top:0px;width:24.7px;height:23px;background:linear-gradient(#b9b9b9,#8d8d8d);box-shadow:inset 1px 0 0 #777,inset 0 -1px 0 #777"></div><div class="a" style="left:257.7px;top:11px;width:13px;height:3.5px;background:#3a86cf;border-radius:1px;border:.5px solid #dbe6f5"></div><div class="a" style="left:276.4px;top:0px;width:24.7px;height:23px;background:linear-gradient(#b9b9b9,#8d8d8d);box-shadow:inset 1px 0 0 #777,inset 0 -1px 0 #777"></div><svg class="a" style="left:282.4px;top:4.5px" width="13" height="13" viewBox="0 0 13 13"><path d="M2 2l9 9M11 2l-9 9" stroke="#d0021b" stroke-width="2.3" fill="none"/></svg><div class="a" style="left:132px;top:23px;width:24.142857142857142px;height:24px;background:linear-gradient(#f4f4f4,#c9c9c9);box-shadow:inset 1px 0 0 #888"></div><svg class="a" style="left:135.1px;top:26px" width="18" height="18" viewBox="0 0 18 18"><path d="M2 6.5h3.5L10 3v12l-4.5-3.5H2z" fill="#d7e6f5" stroke="#2c6fb0" stroke-width="1.2"/><path d="M12 6a4.5 4.5 0 0 1 0 6M14 4a7.5 7.5 0 0 1 0 10" stroke="#2c6fb0" stroke-width="1.3" fill="none"/></svg><div class="a" style="left:156.14285714285714px;top:23px;width:24.142857142857142px;height:24px;background:linear-gradient(#f4f4f4,#c9c9c9);box-shadow:inset 1px 0 0 #888"></div><svg class="a" style="left:160.2px;top:25px" width="16" height="20" viewBox="0 0 16 20"><rect x="5" y="1" width="6" height="11" rx="3" fill="#8fb8df" stroke="#2c6fb0" stroke-width="1"/><path d="M2.5 9.5a5.5 5.5 0 0 0 11 0M8 15v3M5 18.5h6" stroke="#2c6fb0" stroke-width="1.2" fill="none"/></svg><div class="a" style="left:180.28571428571428px;top:23px;width:24.142857142857142px;height:24px;background:linear-gradient(#b9b9b9,#8d8d8d);box-shadow:inset 1px 0 0 #888"></div><svg class="a" style="left:183.4px;top:25px" width="18" height="20" viewBox="0 0 18 20"><circle cx="9" cy="9" r="7" fill="#3f6f9f" stroke="#1f3f5f" stroke-width="1"/><circle cx="9" cy="9" r="3.8" fill="#a8c8e8" stroke="#e8f0f8" stroke-width="1"/><path d="M3.5 18.5c1-2.5 10-2.5 11 0z" fill="#3f6f9f"/></svg><div class="a" style="left:204.42857142857144px;top:23px;width:24.142857142857142px;height:24px;background:linear-gradient(#f4f4f4,#c9c9c9);box-shadow:inset 1px 0 0 #888"></div><svg class="a" style="left:209.5px;top:26px" width="14" height="19" viewBox="0 0 14 19"><path d="M2 1.5v13.5l3.3-3 2.4 5.3 2.2-1-2.4-5.2H12z" fill="#fff" stroke="#000" stroke-width="1.4" stroke-linejoin="round"/></svg><div class="a" style="left:228.57142857142856px;top:23px;width:24.142857142857142px;height:24px;background:linear-gradient(#b9b9b9,#8d8d8d);box-shadow:inset 1px 0 0 #888"></div><svg class="a" style="left:231.6px;top:26px" width="18" height="18" viewBox="0 0 18 18"><path d="M3 12l9-9 3.5 3.5-9 9L2 16.5z" fill="#2f8fd8" stroke="#1d5f9c" stroke-width="1"/><path d="M2 16.5l1-4.5 3.5 3.5z" fill="#f2d6a2"/></svg><div class="a" style="left:252.71428571428572px;top:23px;width:24.142857142857142px;height:24px;background:linear-gradient(#b9b9b9,#8d8d8d);box-shadow:inset 1px 0 0 #888"></div><svg class="a" style="left:255.8px;top:27px" width="18" height="16" viewBox="0 0 18 16"><path d="M1 2h6l1.5 2H17v11H1z" fill="#f2c230" stroke="#c8960c" stroke-width=".8"/><path d="M1 15l2.5-8H18l-2 8z" fill="#fbe36a" stroke="#c8960c" stroke-width=".6"/></svg><div class="a" style="left:276.8571428571429px;top:23px;width:24.142857142857142px;height:24px;background:linear-gradient(#b9b9b9,#8d8d8d);box-shadow:inset 1px 0 0 #888"></div><svg class="a" style="left:279.9px;top:26px" width="18" height="18" viewBox="0 0 18 18"><circle cx="9" cy="9" r="5.2" fill="none" stroke="#2f4f6f" stroke-width="3.4" stroke-dasharray="2.7 1.4"/><circle cx="9" cy="9" r="4.3" fill="#3f6587"/><circle cx="9" cy="9" r="2" fill="#9a9a9a"/></svg></div></div></div><div class="a" style="left:45px;top:0px;width:834px;height:0.8px;background:#8d5457"></div><div class="a" style="left:45px;top:0.8px;width:834px;height:1.1px;background:linear-gradient(90deg,#f6d6d6,#f2c0c0)"></div><div class="a" style="left:876.9px;top:0px;width:2.3px;height:470px;background:linear-gradient(#f3a9a9,#ee6660 12%,#ec5f58)"></div></div><div class="a" style="left:958px;top:151px;width:316px;height:216px;background:linear-gradient(#6b6b70,#77777c 60px,#77777c);box-shadow:inset 1px 1px 0 #909094,inset -1px -1px 0 #808085,0 0 0 1px #3c3d40;box-sizing:border-box"></div><svg class="a" style="left:968.5px;top:154px" width="19" height="19" viewBox="0 0 24 24"><path fill="#fff" d="M16 11c1.66 0 2.99-1.34 2.99-3S17.66 5 16 5c-1.66 0-3 1.34-3 3s1.34 3 3 3zm-8 0c1.66 0 2.99-1.34 2.99-3S9.66 5 8 5C6.34 5 5 6.34 5 8s1.34 3 3 3zm0 2c-2.33 0-7 1.17-7 3.5V19h14v-2.5c0-2.33-4.67-3.5-7-3.5zm8 0c-.29 0-.62.02-.97.05 1.16.84 1.97 1.97 1.97 3.45V19h6v-2.5c0-2.33-4.67-3.5-7-3.5z"/></svg><div class="a t" style="left:990.5px;top:153px;line-height:20px;font-size:13px;color:#fff;letter-spacing:-.3px">10</div><div class="a t fa" dir="rtl" style="right:34px;top:152.5px;line-height:20px;font-size:12px;color:#fff;transform:scaleX(0.86);transform-origin:right center;">کاربران</div><svg class="a" style="left:1251px;top:153.5px" width="19" height="19" viewBox="0 0 24 24"><path fill="#fff" d="M12 8c1.1 0 2-.9 2-2s-.9-2-2-2-2 .9-2 2 .9 2 2 2zm0 2c-1.1 0-2 .9-2 2s.9 2 2 2 2-.9 2-2-.9-2-2-2zm0 6c-1.1 0-2 .9-2 2s.9 2 2 2 2-.9 2-2-.9-2-2-2z"/></svg><div class="a" style="left:967.5px;top:178.5px;width:298px;height:178.5px;background:linear-gradient(90deg,#8c8c90 0 99.4%,#606065 99.4%)"></div><div class="a" style="left:968.5px;top:179.5px;width:296px;height:176.5px;background:#323539;overflow:hidden"><svg class="a" style="left:270.7px;top:6px" width="19" height="19" viewBox="0 0 24 24"><path fill="#42a5f5" d="M12 12c2.21 0 4-1.79 4-4s-1.79-4-4-4-4 1.79-4 4 1.79 4 4 4zm0 2c-2.67 0-8 1.34-8 4v2h16v-2c0-2.66-5.33-4-8-4z"/></svg><div class="a t fa" dir="rtl" style="right:27.5px;top:6.5px;line-height:20px;font-weight:bold;font-size:12.5px;color:#fff;transform:scaleX(0.72);transform-origin:right center">استاد آژ دبیر ریاضی</div><svg class="a" style="left:270.7px;top:31.85px" width="19" height="19" viewBox="0 0 24 24"><path fill="#fff" d="M12 12c2.21 0 4-1.79 4-4s-1.79-4-4-4-4 1.79-4 4 1.79 4 4 4zm0 2c-2.67 0-8 1.34-8 4v2h16v-2c0-2.66-5.33-4-8-4z"/></svg><div class="a t" style="right:27.5px;top:32.35px;line-height:20px;font-size:12.3px;color:#fff;letter-spacing:-.35px">asefeh</div><svg class="a" style="left:270.7px;top:57.7px" width="19" height="19" viewBox="0 0 24 24"><path fill="#fff" d="M12 12c2.21 0 4-1.79 4-4s-1.79-4-4-4-4 1.79-4 4 1.79 4 4 4zm0 2c-2.67 0-8 1.34-8 4v2h16v-2c0-2.66-5.33-4-8-4z"/></svg><div class="a t" style="right:27.5px;top:58.2px;line-height:20px;font-size:12.3px;color:#fff;letter-spacing:-.35px">pariya ghanbari</div><svg class="a" style="left:270.7px;top:83.55px" width="19" height="19" viewBox="0 0 24 24"><path fill="#fff" d="M12 12c2.21 0 4-1.79 4-4s-1.79-4-4-4-4 1.79-4 4 1.79 4 4 4zm0 2c-2.67 0-8 1.34-8 4v2h16v-2c0-2.66-5.33-4-8-4z"/></svg><div class="a t fa" dir="rtl" style="right:27.5px;top:84.05px;line-height:20px;font-size:12.5px;color:#fff;transform:scaleX(0.86);transform-origin:right center">فاطمه رئیسی</div><svg class="a" style="left:270.7px;top:109.4px" width="19" height="19" viewBox="0 0 24 24"><path fill="#fff" d="M12 12c2.21 0 4-1.79 4-4s-1.79-4-4-4-4 1.79-4 4 1.79 4 4 4zm0 2c-2.67 0-8 1.34-8 4v2h16v-2c0-2.66-5.33-4-8-4z"/></svg><div class="a t" style="right:27.5px;top:109.9px;line-height:20px;font-size:12.3px;color:#fff;letter-spacing:-.35px">mehdi akbari</div><svg class="a" style="left:270.7px;top:135.25px" width="19" height="19" viewBox="0 0 24 24"><path fill="#fff" d="M12 12c2.21 0 4-1.79 4-4s-1.79-4-4-4-4 1.79-4 4 1.79 4 4 4zm0 2c-2.67 0-8 1.34-8 4v2h16v-2c0-2.66-5.33-4-8-4z"/></svg><div class="a t fa" dir="rtl" style="right:27.5px;top:135.75px;line-height:20px;font-size:12.5px;color:#fff;transform:scaleX(0.86);transform-origin:right center">امیر رضا ابراهیمیان</div><svg class="a" style="left:270.7px;top:161.1px" width="19" height="19" viewBox="0 0 24 24"><path fill="#fff" d="M12 12c2.21 0 4-1.79 4-4s-1.79-4-4-4-4 1.79-4 4 1.79 4 4 4zm0 2c-2.67 0-8 1.34-8 4v2h16v-2c0-2.66-5.33-4-8-4z"/></svg><div class="a t" style="right:27.5px;top:161.6px;line-height:20px;font-size:12.3px;color:#fff;letter-spacing:-.35px">maryam komgo</div><svg class="a" style="left:9px;top:10.2px" width="17" height="17" viewBox="0 0 24 24"><path fill="#2196f3" d="M12 14c1.66 0 2.99-1.34 2.99-3L15 5c0-1.66-1.34-3-3-3S9 3.34 9 5v6c0 1.66 1.34 3 3 3zm5.3-3c0 3-2.54 5.1-5.3 5.1S6.7 14 6.7 11H5c0 3.41 2.72 6.23 6 6.72V21h2v-3.28c3.28-.48 6-3.3 6-6.72h-1.7z"/></svg><svg class="a" style="left:45.5px;top:11.3px" width="17" height="17" viewBox="0 0 24 24"><path fill="#fff" d="M20 18c1.1 0 1.99-.9 1.99-2L22 6c0-1.1-.9-2-2-2H4c-1.1 0-2 .9-2 2v10c0 1.1.9 2 2 2H0v2h24v-2h-4zM4 6h16v10H4V6z"/></svg><svg class="a" style="left:9px;top:37px" width="17" height="17" viewBox="0 0 24 24"><path fill="#fff" d="M12 14c1.66 0 2.99-1.34 2.99-3L15 5c0-1.66-1.34-3-3-3S9 3.34 9 5v6c0 1.66 1.34 3 3 3zm5.3-3c0 3-2.54 5.1-5.3 5.1S6.7 14 6.7 11H5c0 3.41 2.72 6.23 6 6.72V21h2v-3.28c3.28-.48 6-3.3 6-6.72h-1.7z"/></svg></div><div class="a" style="left:958px;top:377px;width:316px;height:280.5px;background:linear-gradient(#6b6b70,#77777c 60px,#77777c);box-shadow:inset 1px 1px 0 #909094,inset -1px -1px 0 #808085,0 0 0 1px #3c3d40;box-sizing:border-box"></div><svg class="a" style="left:970.5px;top:381.5px" width="17" height="17" viewBox="0 0 24 24"><path fill="#fff" d="M20 2H4c-1.1 0-1.99.9-1.99 2L2 22l4-4h14c1.1 0 2-.9 2-2V4c0-1.1-.9-2-2-2zM6 9h12v2H6V9zm8 5H6v-2h8v2zm4-6H6V6h12v2z"/></svg><svg class="a" style="left:1251px;top:380px" width="19" height="19" viewBox="0 0 24 24"><path fill="#fff" d="M12 8c1.1 0 2-.9 2-2s-.9-2-2-2-2 .9-2 2 .9 2 2 2zm0 2c-1.1 0-2 .9-2 2s.9 2 2 2 2-.9 2-2-.9-2-2-2zm0 6c-1.1 0-2 .9-2 2s.9 2 2 2 2-.9 2-2-.9-2-2-2z"/></svg><div class="a" style="left:967.5px;top:405px;width:298px;height:208px;background:linear-gradient(90deg,#85858a 0 99.4%,#5a5a5f 99.4%)"></div><div class="a" style="left:968.5px;top:406px;width:296px;height:206px;background:#323539"></div><div class="a" style="left:1124px;top:406.3px;width:138px;height:28.7px;background:#7f7f84;border-radius:2px;box-shadow:0 0 0 .5px #8b8b90,1.2px 1.2px 1.5px rgba(20,20,24,.65)"></div><svg class="a" style="left:1129.7px;top:413.2px" width="14.6" height="14.6" viewBox="0 0 36 36"><circle cx="18" cy="18" r="16.5" fill="#ffcc4d" stroke="#2b2b2b" stroke-width="2.6"/><path d="M9.5 19.5c1.2 5.2 4.6 8.3 8.5 8.3s7.3-3.1 8.5-8.3c-5.5 1.3-11.5 1.3-17 0z" fill="#5d4037"/><path d="M8 14.5c1.5-2.3 4.5-2.3 6 0M22 14.5c1.5-2.3 4.5-2.3 6 0" fill="none" stroke="#5d4037" stroke-width="2"/><path d="M3.5 18.5c0 3.3 1.8 5 4.2 5s3.3-2.5 1.8-5.5c-2 .9-4 .9-6 .5zM32.5 18.5c0 3.3-1.8 5-4.2 5s-3.3-2.5-1.8-5.5c2 .9 4 .9 6 .5z" fill="#5dadec"/></svg><div class="a" style="left:1124px;top:441.3px;width:138px;height:52px;background:#7f7f84;border-radius:2px;box-shadow:0 0 0 .5px #8b8b90,1.2px 1.2px 1.5px rgba(20,20,24,.65)"></div><div class="a t" style="right:22.5px;top:444.5px;line-height:20px;font-size:12px;color:#fff;font-weight:bold;letter-spacing:-.76px;">maniya salehi</div><div class="a t fa" dir="rtl" style="right:22.5px;top:468.5px;line-height:20px;font-size:12.5px;color:#fff;transform:scaleX(0.92);transform-origin:right center;">دختر خاله ها</div><svg class="a" style="left:1183.7px;top:471.2px" width="14.6" height="14.6" viewBox="0 0 36 36"><circle cx="18" cy="18" r="16.5" fill="#ffcc4d" stroke="#2b2b2b" stroke-width="2.6"/><path d="M9.5 19.5c1.2 5.2 4.6 8.3 8.5 8.3s7.3-3.1 8.5-8.3c-5.5 1.3-11.5 1.3-17 0z" fill="#5d4037"/><path d="M8 14.5c1.5-2.3 4.5-2.3 6 0M22 14.5c1.5-2.3 4.5-2.3 6 0" fill="none" stroke="#5d4037" stroke-width="2"/><path d="M3.5 18.5c0 3.3 1.8 5 4.2 5s3.3-2.5 1.8-5.5c-2 .9-4 .9-6 .5zM32.5 18.5c0 3.3-1.8 5-4.2 5s-3.3-2.5-1.8-5.5c2 .9 4 .9 6 .5z" fill="#5dadec"/></svg><div class="a" style="left:1124px;top:499.3px;width:138px;height:52.5px;background:#7f7f84;border-radius:2px;box-shadow:0 0 0 .5px #8b8b90,1.2px 1.2px 1.5px rgba(20,20,24,.65)"></div><div class="a t" style="right:22.5px;top:502.5px;line-height:20px;font-size:12px;color:#fff;font-weight:bold;letter-spacing:-.76px;">maryam.yaghoobzadeh</div><svg class="a" style="left:1129.7px;top:529.7px" width="14.6" height="14.6" viewBox="0 0 36 36"><circle cx="18" cy="18" r="16.5" fill="#ffcc4d" stroke="#2b2b2b" stroke-width="2.6"/><path d="M9.5 19.5c1.2 5.2 4.6 8.3 8.5 8.3s7.3-3.1 8.5-8.3c-5.5 1.3-11.5 1.3-17 0z" fill="#5d4037"/><path d="M8 14.5c1.5-2.3 4.5-2.3 6 0M22 14.5c1.5-2.3 4.5-2.3 6 0" fill="none" stroke="#5d4037" stroke-width="2"/><path d="M3.5 18.5c0 3.3 1.8 5 4.2 5s3.3-2.5 1.8-5.5c-2 .9-4 .9-6 .5zM32.5 18.5c0 3.3-1.8 5-4.2 5s-3.3-2.5-1.8-5.5c2 .9 4 .9 6 .5z" fill="#5dadec"/></svg><svg class="a" style="left:1145.7px;top:529.7px" width="14.6" height="14.6" viewBox="0 0 36 36"><circle cx="18" cy="18" r="16.5" fill="#ffcc4d" stroke="#2b2b2b" stroke-width="2.6"/><path d="M9.5 19.5c1.2 5.2 4.6 8.3 8.5 8.3s7.3-3.1 8.5-8.3c-5.5 1.3-11.5 1.3-17 0z" fill="#5d4037"/><path d="M8 14.5c1.5-2.3 4.5-2.3 6 0M22 14.5c1.5-2.3 4.5-2.3 6 0" fill="none" stroke="#5d4037" stroke-width="2"/><path d="M3.5 18.5c0 3.3 1.8 5 4.2 5s3.3-2.5 1.8-5.5c-2 .9-4 .9-6 .5zM32.5 18.5c0 3.3-1.8 5-4.2 5s-3.3-2.5-1.8-5.5c2 .9 4 .9 6 .5z" fill="#5dadec"/></svg><div class="a" style="left:1124px;top:557.5px;width:138px;height:52.3px;background:#7f7f84;border-radius:2px;box-shadow:0 0 0 .5px #8b8b90,1.2px 1.2px 1.5px rgba(20,20,24,.65)"></div><div class="a t" style="right:22.5px;top:560.5px;line-height:20px;font-size:12px;color:#fff;font-weight:bold;letter-spacing:-.74px;">mohadeseh jahanbani</div><div class="a t fa" dir="rtl" style="right:22px;top:585.5px;line-height:20px;font-size:12.5px;color:#fff;transform:scaleX(0.91);transform-origin:right center;">'۶ مگه نمیشه ۲۱۶؟</div><div class="a" style="left:967.5px;top:617px;width:298px;height:31.5px;background:#85858a"></div><div class="a" style="left:968.5px;top:618px;width:296px;height:29.5px;background:#323539"></div><svg class="a" style="left:970.5px;top:623px" width="19" height="19" viewBox="0 0 24 24"><path fill="#fff" d="M21.99 21L1 12 21.99 3 22 10 7 12l15 2z"/></svg><svg class="a" style="left:991.5px;top:623px" width="19" height="19" viewBox="0 0 24 24"><path fill="#fff" d="M11.99 2C6.47 2 2 6.48 2 12s4.47 10 9.99 10C17.52 22 22 17.52 22 12S17.52 2 11.99 2zM12 20c-4.42 0-8-3.58-8-8s3.58-8 8-8 8 3.58 8 8-3.58 8-8 8zm3.5-9c.83 0 1.5-.67 1.5-1.5S16.33 8 15.5 8 14 8.67 14 9.5s.67 1.5 1.5 1.5zm-7 0c.83 0 1.5-.67 1.5-1.5S9.33 8 8.5 8 7 8.67 7 9.5 7.67 11 8.5 11zm3.5 6.5c2.33 0 4.31-1.46 5.11-3.5H6.89c.8 2.04 2.78 3.5 5.11 3.5z"/></svg><div class="a t fa" dir="rtl" style="right:21px;top:622.5px;line-height:20px;font-size:12.5px;color:#a6a6aa;transform:scaleX(0.89);transform-origin:right center;">پیام خود را وارد کنید</div><div class="a t fa" style="left:20.5px;top:661px;line-height:20px;font-size:12px;color:#fff;"><span style="display:inline-block;transform:scaleX(.92);transform-origin:left center">اسکای‌روم</span></div><div class="a t" style="left:67.7px;top:658.7px;line-height:20px;font-size:9.5px;color:#fff;font-weight:bold;">™</div><div class="a t" style="left:9.3px;top:661.5px;line-height:20px;font-size:13.5px;color:#fff;">©</div><div class="a" style="left:0px;top:686px;width:1280px;height:34px;background:#fff"></div><div class="a" style="left:0px;top:718px;width:1280px;height:2px;background:#111"></div><div class="a" style="left:0px;top:686px;width:100px;height:32px;background:#c6c6c6"></div><div class="a" style="left:100px;top:686px;width:118px;height:32px;background:#fdfdfd;box-shadow:inset -1px 0 0 #ececec"></div><div class="a t" style="left:14px;top:687px;line-height:20px;font-size:13.5px;color:#f4f4f4;font-weight:bold;letter-spacing:.15px;">20 / 2:16 PI</div><div class="a" style="left:412px;top:686px;width:460.5px;height:29.5px;background:linear-gradient(#cbcbcb,#c3c3c3);border-radius:0 0 7px 7px;box-shadow:inset 0 -1.5px 0 #9b9b9b,inset 1px 0 0 #adadad,inset -1px 0 0 #adadad;overflow:hidden"><div class="a" style="left:8px;top:-6px;width:27px;height:27px;border-radius:50%;background:#f4f4f4"></div><svg class="a" style="left:11px;top:-2px" width="22" height="22" viewBox="0 0 22 22"><path d="M4 17L17 2l3 2.5L7 19.5z" fill="#c62828"/><path d="M4 17l-.8 3.5L7 19.5z" fill="#333"/><path d="M8 12.5L18.5 1" stroke="#fff" stroke-width="1"/><path d="M5 21c3-2 6-2 8-1.5s2-1 0-1.5" stroke="#444" stroke-width="1" fill="none"/></svg><svg class="a" style="left:45px;top:1px" width="22" height="18" viewBox="0 0 22 18"><path d="M1 11L10 2l8 5-9 9z" fill="#f48fb1"/><path d="M10 2l3-2 8 4.5-3 2.5z" fill="#5c8fe0"/><path d="M1 11l8 5v1.5l-8-5z" fill="#e27aa0"/></svg><svg class="a" style="left:80px;top:-1px" width="22" height="20" viewBox="0 0 22 20"><path d="M3 15.5L17 0l3.5 3L7 18.5z" fill="#f5d30a"/><path d="M5 13.5L18.5 .5" stroke="#222" stroke-width="1.6"/><path d="M3 15.5l-1.5 4L7 18.5z" fill="#8a6a3a"/><path d="M6 19.5h9l2-4-5 1.5z" fill="#f0b429"/></svg><svg class="a" style="left:121px;top:-1.5px" width="11" height="17" viewBox="0 0 12 18"><path d="M1 1l9.5 9.5H6.3l2.6 5.5-2.3 1.1L4 11.5 1 14.5z" fill="#1f2a55" stroke="#3a3f6a" stroke-width=".6"/></svg><svg class="a" style="left:148px;top:0" width="24" height="20" viewBox="0 0 24 20"><path d="M3 1.5c3 1.5 6 4.5 8 7l5-1c3 0 5 3 5 6.5 0 3-2 5-5 5-4 0-6-2-7.5-5.5-1-3-3-6-6.5-10.5z" fill="#fbe3cf" stroke="#caa27e" stroke-width=".8"/></svg><svg class="a" style="left:187px;top:-1px" width="22" height="21" viewBox="0 0 22 21"><path d="M3 0c1 2 2 4.5 2.5 7L7 2l2 5.5L11 3l1 5 5-1c2.5 1 3.5 4 3.5 7s-2.5 6-6 6c-4 0-6-2-7.5-5.5C6 12 4 8 2 4z" fill="#fbe3cf" stroke="#caa27e" stroke-width=".8"/></svg><svg class="a" style="left:221.5px;top:-2px" width="24" height="22" viewBox="0 0 24 22"><circle cx="7.5" cy="7.5" r="5.8" fill="#e9e9e9" stroke="#333" stroke-width="1.4"/><path d="M5 7.5h5M7.5 5v5" stroke="#333" stroke-width="1.3"/><path d="M12 12l7.5 7" stroke="#333" stroke-width="3.2" stroke-linecap="round"/></svg><svg class="a" style="left:253.5px;top:-2px" width="24" height="22" viewBox="0 0 24 22"><circle cx="7.5" cy="7.5" r="5.8" fill="#e9e9e9" stroke="#333" stroke-width="1.4"/><path d="M5 7.5h5" stroke="#333" stroke-width="1.3"/><path d="M12 12l7.5 7" stroke="#333" stroke-width="3.2" stroke-linecap="round"/></svg><svg class="a" style="left:287px;top:-1px" width="22" height="20" viewBox="0 0 22 20"><path d="M2 18L12 8" stroke="#e53935" stroke-width="1.2"/><path d="M11 9l8-8.5" stroke="#444" stroke-width="3"/><path d="M12.5 7.5l4-4" stroke="#eee" stroke-width="1.6"/></svg><svg class="a" style="left:322px;top:-1px" width="22" height="20" viewBox="0 0 22 20"><path d="M2.5 16L18 0" stroke="#111" stroke-width="1.3"/><circle cx="2.8" cy="16" r="1.8" fill="#111"/></svg><div class="a t" style="left:361px;top:-3px;font-family:'Liberation Serif',serif;font-weight:bold;font-style:italic;font-size:19px;line-height:22px;color:#111">A</div><div class="a" style="left:374.5px;top:-1px;width:1.2px;height:17px;background:#222"></div><div class="a" style="left:396px;top:-3px;width:18px;height:19px;background:#8fd3e8;border-left:1px dashed #2b5fa8;border-right:1px dashed #2b5fa8;box-sizing:border-box"></div><svg class="a" style="left:395px;top:9px" width="20" height="9" viewBox="0 0 20 9"><circle cx="3" cy="3" r="2" fill="none" stroke="#1f3f9f" stroke-width="1.4"/><circle cx="4" cy="6.5" r="2" fill="none" stroke="#1f3f9f" stroke-width="1.4"/><path d="M6 4l13-2M6 5.5l13 1.5" stroke="#9aa3ad" stroke-width="1.3"/></svg><div class="a" style="left:428px;top:3px;width:21px;height:10.5px;background:repeating-linear-gradient(#e8e8e8 0 1.5px,#9a9a9a 1.5px 2.6px);border:1px solid #777;border-bottom:2px solid #666;box-sizing:border-box;border-radius:1px"></div></div><div class="a" style="left:1213px;top:686px;width:64px;height:19.5px;background:linear-gradient(#c9c9c9,#bdbdbd);border-radius:0 0 5px 5px"></div><div class="a t" style="left:1229.8px;top:685.3px;line-height:20px;font-size:13.6px;color:#fff;font-weight:bold;letter-spacing:.2px;">2.0 x</div><svg class="a" style="left:980px;top:706px" width="18" height="14" viewBox="0 0 18 14"><path d="M9 0v14M1 8h16" stroke="#111" stroke-width="1.5"/></svg><div class="a" style="left:720px;top:0px;width:300.4px;height:45.8px;box-shadow:0 0 0 .8px #4a4a4a;overflow:hidden"><div class="a" style="left:0px;top:0px;width:41px;height:47px;background:linear-gradient(#b9b9b9,#8d8d8d);"></div><div class="a" style="left:9.5px;top:11px;width:22px;height:23px;background:#e4002b;border:1.2px solid #f3c9c9;border-radius:2px;box-sizing:border-box"></div><div class="a" style="left:41px;top:0px;width:24px;height:23px;background:linear-gradient(#b9b9b9,#8d8d8d);box-shadow:inset 1px 0 0 #777,inset 0 -1px 0 #777"></div><div class="a" style="left:41px;top:23px;width:24px;height:24px;background:linear-gradient(#b9b9b9,#8d8d8d);box-shadow:inset 1px 0 0 #777"></div><svg class="a" style="left:44px;top:2px" width="18" height="16" viewBox="0 0 18 16"><rect x="1" y="4" width="16" height="11" rx="2" fill="#3b4a78" stroke="#dfe6f3" stroke-width="1"/><rect x="5.5" y="1.5" width="6" height="3.5" rx="1" fill="#3b4a78" stroke="#dfe6f3" stroke-width=".8"/><circle cx="9" cy="9.5" r="3.6" fill="#6d86c6" stroke="#1c2545" stroke-width="1.2"/><circle cx="14.3" cy="6.3" r="1" fill="#f6d34a"/></svg><svg class="a" style="left:45px;top:26px" width="16" height="17" viewBox="0 0 16 17"><rect x="1.5" y="1.5" width="5" height="14" rx="1" fill="#2d7cc4" stroke="#e6eefa" stroke-width="1"/><rect x="9.5" y="1.5" width="5" height="14" rx="1" fill="#2d7cc4" stroke="#e6eefa" stroke-width="1"/></svg><div class="a" style="left:65px;top:0px;width:67px;height:47px;background:#000"></div><div class="a t" style="left:65px;top:9px;width:67px;height:26px;line-height:26px;text-align:center;font-family:'Liberation Mono',monospace;font-size:16px;letter-spacing:-2.3px;color:#041004;-webkit-text-stroke:.5px #98e898;transform:translateY(1.3px) scaleY(1.38) skewX(-6deg)">00:39:09</div><div class="a" style="left:132px;top:0px;width:95px;height:23px;background:linear-gradient(#9c9c9c,#7d7d7d);box-shadow:inset 0 -1px 0 #666"></div><div class="a t" style="left:132px;top:1px;width:95px;line-height:21px;text-align:center;font-family:'Liberation Serif',serif;font-weight:bold;font-size:12.3px;color:#fff;text-shadow:0 0 1.5px #000,0 0 1.5px #000,0 0 1px #000">1914 × 1077</div><div class="a" style="left:227px;top:0px;width:24.7px;height:23px;background:linear-gradient(#f4f4f4,#c9c9c9);box-shadow:inset 1px 0 0 #777,inset 0 -1px 0 #777"></div><div class="a" style="left:233px;top:4.5px;width:13px;height:12px;border:1.7px solid #2fae3a;box-sizing:border-box;background:#e6efe6"></div><div class="a" style="left:251.7px;top:0px;width:24.7px;height:23px;background:linear-gradient(#b9b9b9,#8d8d8d);box-shadow:inset 1px 0 0 #777,inset 0 -1px 0 #777"></div><div class="a" style="left:257.7px;top:11px;width:13px;height:3.5px;background:#3a86cf;border-radius:1px;border:.5px solid #dbe6f5"></div><div class="a" style="left:276.4px;top:0px;width:24.7px;height:23px;background:linear-gradient(#b9b9b9,#8d8d8d);box-shadow:inset 1px 0 0 #777,inset 0 -1px 0 #777"></div><svg class="a" style="left:282.4px;top:4.5px" width="13" height="13" viewBox="0 0 13 13"><path d="M2 2l9 9M11 2l-9 9" stroke="#d0021b" stroke-width="2.3" fill="none"/></svg><div class="a" style="left:132px;top:23px;width:24.142857142857142px;height:24px;background:linear-gradient(#f4f4f4,#c9c9c9);box-shadow:inset 1px 0 0 #888"></div><svg class="a" style="left:135.1px;top:26px" width="18" height="18" viewBox="0 0 18 18"><path d="M2 6.5h3.5L10 3v12l-4.5-3.5H2z" fill="#d7e6f5" stroke="#2c6fb0" stroke-width="1.2"/><path d="M12 6a4.5 4.5 0 0 1 0 6M14 4a7.5 7.5 0 0 1 0 10" stroke="#2c6fb0" stroke-width="1.3" fill="none"/></svg><div class="a" style="left:156.14285714285714px;top:23px;width:24.142857142857142px;height:24px;background:linear-gradient(#f4f4f4,#c9c9c9);box-shadow:inset 1px 0 0 #888"></div><svg class="a" style="left:160.2px;top:25px" width="16" height="20" viewBox="0 0 16 20"><rect x="5" y="1" width="6" height="11" rx="3" fill="#8fb8df" stroke="#2c6fb0" stroke-width="1"/><path d="M2.5 9.5a5.5 5.5 0 0 0 11 0M8 15v3M5 18.5h6" stroke="#2c6fb0" stroke-width="1.2" fill="none"/></svg><div class="a" style="left:180.28571428571428px;top:23px;width:24.142857142857142px;height:24px;background:linear-gradient(#b9b9b9,#8d8d8d);box-shadow:inset 1px 0 0 #888"></div><svg class="a" style="left:183.4px;top:25px" width="18" height="20" viewBox="0 0 18 20"><circle cx="9" cy="9" r="7" fill="#3f6f9f" stroke="#1f3f5f" stroke-width="1"/><circle cx="9" cy="9" r="3.8" fill="#a8c8e8" stroke="#e8f0f8" stroke-width="1"/><path d="M3.5 18.5c1-2.5 10-2.5 11 0z" fill="#3f6f9f"/></svg><div class="a" style="left:204.42857142857144px;top:23px;width:24.142857142857142px;height:24px;background:linear-gradient(#f4f4f4,#c9c9c9);box-shadow:inset 1px 0 0 #888"></div><svg class="a" style="left:209.5px;top:26px" width="14" height="19" viewBox="0 0 14 19"><path d="M2 1.5v13.5l3.3-3 2.4 5.3 2.2-1-2.4-5.2H12z" fill="#fff" stroke="#000" stroke-width="1.4" stroke-linejoin="round"/></svg><div class="a" style="left:228.57142857142856px;top:23px;width:24.142857142857142px;height:24px;background:linear-gradient(#b9b9b9,#8d8d8d);box-shadow:inset 1px 0 0 #888"></div><svg class="a" style="left:231.6px;top:26px" width="18" height="18" viewBox="0 0 18 18"><path d="M3 12l9-9 3.5 3.5-9 9L2 16.5z" fill="#2f8fd8" stroke="#1d5f9c" stroke-width="1"/><path d="M2 16.5l1-4.5 3.5 3.5z" fill="#f2d6a2"/></svg><div class="a" style="left:252.71428571428572px;top:23px;width:24.142857142857142px;height:24px;background:linear-gradient(#b9b9b9,#8d8d8d);box-shadow:inset 1px 0 0 #888"></div><svg class="a" style="left:255.8px;top:27px" width="18" height="16" viewBox="0 0 18 16"><path d="M1 2h6l1.5 2H17v11H1z" fill="#f2c230" stroke="#c8960c" stroke-width=".8"/><path d="M1 15l2.5-8H18l-2 8z" fill="#fbe36a" stroke="#c8960c" stroke-width=".6"/></svg><div class="a" style="left:276.8571428571429px;top:23px;width:24.142857142857142px;height:24px;background:linear-gradient(#b9b9b9,#8d8d8d);box-shadow:inset 1px 0 0 #888"></div><svg class="a" style="left:279.9px;top:26px" width="18" height="18" viewBox="0 0 18 18"><circle cx="9" cy="9" r="5.2" fill="none" stroke="#2f4f6f" stroke-width="3.4" stroke-dasharray="2.7 1.4"/><circle cx="9" cy="9" r="4.3" fill="#3f6587"/><circle cx="9" cy="9" r="2" fill="#9a9a9a"/></svg></div></div></div><div class="a" style="left:45px;top:0px;width:834px;height:0.8px;background:#8d5457"></div><div class="a" style="left:45px;top:0.8px;width:834px;height:1.1px;background:linear-gradient(90deg,#f6d6d6,#f2c0c0)"></div><div class="a" style="left:876.9px;top:0px;width:2.3px;height:470px;background:linear-gradient(#f3a9a9,#ee6660 12%,#ec5f58)"></div></div><div class="a" style="left:958px;top:151px;width:316px;height:216px;background:linear-gradient(#6b6b70,#77777c 60px,#77777c);box-shadow:inset 1px 1px 0 #909094,inset -1px -1px 0 #808085,0 0 0 1px #3c3d40;box-sizing:border-box"></div><svg class="a" style="left:968.5px;top:154px" width="19" height="19" viewBox="0 0 24 24"><path fill="#fff" d="M16 11c1.66 0 2.99-1.34 2.99-3S17.66 5 16 5c-1.66 0-3 1.34-3 3s1.34 3 3 3zm-8 0c1.66 0 2.99-1.34 2.99-3S9.66 5 8 5C6.34 5 5 6.34 5 8s1.34 3 3 3zm0 2c-2.33 0-7 1.17-7 3.5V19h14v-2.5c0-2.33-4.67-3.5-7-3.5zm8 0c-.29 0-.62.02-.97.05 1.16.84 1.97 1.97 1.97 3.45V19h6v-2.5c0-2.33-4.67-3.5-7-3.5z"/></svg><div class="a t" style="left:990.5px;top:153px;line-height:20px;font-size:13px;color:#fff;letter-spacing:-.3px">10</div><div class="a t fa" dir="rtl" style="right:34px;top:152.5px;line-height:20px;font-size:12px;color:#fff;transform:scaleX(0.86);transform-origin:right center;">کاربران</div><svg class="a" style="left:1251px;top:153.5px" width="19" height="19" viewBox="0 0 24 24"><path fill="#fff" d="M12 8c1.1 0 2-.9 2-2s-.9-2-2-2-2 .9-2 2 .9 2 2 2zm0 2c-1.1 0-2 .9-2 2s.9 2 2 2 2-.9 2-2-.9-2-2-2zm0 6c-1.1 0-2 .9-2 2s.9 2 2 2 2-.9 2-2-.9-2-2-2z"/></svg><div class="a" style="left:967.5px;top:178.5px;width:298px;height:178.5px;background:linear-gradient(90deg,#8c8c90 0 99.4%,#606065 99.4%)"></div><div class="a" style="left:968.5px;top:179.5px;width:296px;height:176.5px;background:#323539;overflow:hidden"><svg class="a" style="left:270.7px;top:6px" width="19" height="19" viewBox="0 0 24 24"><path fill="#42a5f5" d="M12 12c2.21 0 4-1.79 4-4s-1.79-4-4-4-4 1.79-4 4 1.79 4 4 4zm0 2c-2.67 0-8 1.34-8 4v2h16v-2c0-2.66-5.33-4-8-4z"/></svg><div class="a t fa" dir="rtl" style="right:27.5px;top:6.5px;line-height:20px;font-weight:bold;font-size:12.5px;color:#fff;transform:scaleX(0.72);transform-origin:right center">استاد آژ دبیر ریاضی</div><svg class="a" style="left:270.7px;top:31.85px" width="19" height="19" viewBox="0 0 24 24"><path fill="#fff" d="M12 12c2.21 0 4-1.79 4-4s-1.79-4-4-4-4 1.79-4 4 1.79 4 4 4zm0 2c-2.67 0-8 1.34-8 4v2h16v-2c0-2.66-5.33-4-8-4z"/></svg><div class="a t" style="right:27.5px;top:32.35px;line-height:20px;font-size:12.3px;color:#fff;letter-spacing:-.35px">asefeh</div><svg class="a" style="left:270.7px;top:57.7px" width="19" height="19" viewBox="0 0 24 24"><path fill="#fff" d="M12 12c2.21 0 4-1.79 4-4s-1.79-4-4-4-4 1.79-4 4 1.79 4 4 4zm0 2c-2.67 0-8 1.34-8 4v2h16v-2c0-2.66-5.33-4-8-4z"/></svg><div class="a t" style="right:27.5px;top:58.2px;line-height:20px;font-size:12.3px;color:#fff;letter-spacing:-.35px">pariya ghanbari</div><svg class="a" style="left:270.7px;top:83.55px" width="19" height="19" viewBox="0 0 24 24"><path fill="#fff" d="M12 12c2.21 0 4-1.79 4-4s-1.79-4-4-4-4 1.79-4 4 1.79 4 4 4zm0 2c-2.67 0-8 1.34-8 4v2h16v-2c0-2.66-5.33-4-8-4z"/></svg><div class="a t fa" dir="rtl" style="right:27.5px;top:84.05px;line-height:20px;font-size:12.5px;color:#fff;transform:scaleX(0.86);transform-origin:right center">فاطمه رئیسی</div><svg class="a" style="left:270.7px;top:109.4px" width="19" height="19" viewBox="0 0 24 24"><path fill="#fff" d="M12 12c2.21 0 4-1.79 4-4s-1.79-4-4-4-4 1.79-4 4 1.79 4 4 4zm0 2c-2.67 0-8 1.34-8 4v2h16v-2c0-2.66-5.33-4-8-4z"/></svg><div class="a t" style="right:27.5px;top:109.9px;line-height:20px;font-size:12.3px;color:#fff;letter-spacing:-.35px">mehdi akbari</div><svg class="a" style="left:270.7px;top:135.25px" width="19" height="19" viewBox="0 0 24 24"><path fill="#fff" d="M12 12c2.21 0 4-1.79 4-4s-1.79-4-4-4-4 1.79-4 4 1.79 4 4 4zm0 2c-2.67 0-8 1.34-8 4v2h16v-2c0-2.66-5.33-4-8-4z"/></svg><div class="a t fa" dir="rtl" style="right:27.5px;top:135.75px;line-height:20px;font-size:12.5px;color:#fff;transform:scaleX(0.86);transform-origin:right center">امیر رضا ابراهیمیان</div><svg class="a" style="left:270.7px;top:161.1px" width="19" height="19" viewBox="0 0 24 24"><path fill="#fff" d="M12 12c2.21 0 4-1.79 4-4s-1.79-4-4-4-4 1.79-4 4 1.79 4 4 4zm0 2c-2.67 0-8 1.34-8 4v2h16v-2c0-2.66-5.33-4-8-4z"/></svg><div class="a t" style="right:27.5px;top:161.6px;line-height:20px;font-size:12.3px;color:#fff;letter-spacing:-.35px">maryam komgo</div><svg class="a" style="left:9px;top:10.2px" width="17" height="17" viewBox="0 0 24 24"><path fill="#2196f3" d="M12 14c1.66 0 2.99-1.34 2.99-3L15 5c0-1.66-1.34-3-3-3S9 3.34 9 5v6c0 1.66 1.34 3 3 3zm5.3-3c0 3-2.54 5.1-5.3 5.1S6.7 14 6.7 11H5c0 3.41 2.72 6.23 6 6.72V21h2v-3.28c3.28-.48 6-3.3 6-6.72h-1.7z"/></svg><svg class="a" style="left:45.5px;top:11.3px" width="17" height="17" viewBox="0 0 24 24"><path fill="#fff" d="M20 18c1.1 0 1.99-.9 1.99-2L22 6c0-1.1-.9-2-2-2H4c-1.1 0-2 .9-2 2v10c0 1.1.9 2 2 2H0v2h24v-2h-4zM4 6h16v10H4V6z"/></svg><svg class="a" style="left:9px;top:37px" width="17" height="17" viewBox="0 0 24 24"><path fill="#fff" d="M12 14c1.66 0 2.99-1.34 2.99-3L15 5c0-1.66-1.34-3-3-3S9 3.34 9 5v6c0 1.66 1.34 3 3 3zm5.3-3c0 3-2.54 5.1-5.3 5.1S6.7 14 6.7 11H5c0 3.41 2.72 6.23 6 6.72V21h2v-3.28c3.28-.48 6-3.3 6-6.72h-1.7z"/></svg></div><div class="a" style="left:958px;top:377px;width:316px;height:280.5px;background:linear-gradient(#6b6b70,#77777c 60px,#77777c);box-shadow:inset 1px 1px 0 #909094,inset -1px -1px 0 #808085,0 0 0 1px #3c3d40;box-sizing:border-box"></div><svg class="a" style="left:970.5px;top:381.5px" width="17" height="17" viewBox="0 0 24 24"><path fill="#fff" d="M20 2H4c-1.1 0-1.99.9-1.99 2L2 22l4-4h14c1.1 0 2-.9 2-2V4c0-1.1-.9-2-2-2zM6 9h12v2H6V9zm8 5H6v-2h8v2zm4-6H6V6h12v2z"/></svg><svg class="a" style="left:1251px;top:380px" width="19" height="19" viewBox="0 0 24 24"><path fill="#fff" d="M12 8c1.1 0 2-.9 2-2s-.9-2-2-2-2 .9-2 2 .9 2 2 2zm0 2c-1.1 0-2 .9-2 2s.9 2 2 2 2-.9 2-2-.9-2-2-2zm0 6c-1.1 0-2 .9-2 2s.9 2 2 2 2-.9 2-2-.9-2-2-2z"/></svg><div class="a" style="left:967.5px;top:405px;width:298px;height:208px;background:linear-gradient(90deg,#85858a 0 99.4%,#5a5a5f 99.4%)"></div><div class="a" style="left:968.5px;top:406px;width:296px;height:206px;background:#323539"></div><div class="a" style="left:1124px;top:406.3px;width:138px;height:28.7px;background:#7f7f84;border-radius:2px;box-shadow:0 0 0 .5px #8b8b90,1.2px 1.2px 1.5px rgba(20,20,24,.65)"></div><svg class="a" style="left:1129.7px;top:413.2px" width="14.6" height="14.6" viewBox="0 0 36 36"><circle cx="18" cy="18" r="16.5" fill="#ffcc4d" stroke="#2b2b2b" stroke-width="2.6"/><path d="M9.5 19.5c1.2 5.2 4.6 8.3 8.5 8.3s7.3-3.1 8.5-8.3c-5.5 1.3-11.5 1.3-17 0z" fill="#5d4037"/><path d="M8 14.5c1.5-2.3 4.5-2.3 6 0M22 14.5c1.5-2.3 4.5-2.3 6 0" fill="none" stroke="#5d4037" stroke-width="2"/><path d="M3.5 18.5c0 3.3 1.8 5 4.2 5s3.3-2.5 1.8-5.5c-2 .9-4 .9-6 .5zM32.5 18.5c0 3.3-1.8 5-4.2 5s-3.3-2.5-1.8-5.5c2 .9 4 .9 6 .5z" fill="#5dadec"/></svg><div class="a" style="left:1124px;top:441.3px;width:138px;height:52px;background:#7f7f84;border-radius:2px;box-shadow:0 0 0 .5px #8b8b90,1.2px 1.2px 1.5px rgba(20,20,24,.65)"></div><div class="a t" style="right:22.5px;top:444.5px;line-height:20px;font-size:12px;color:#fff;font-weight:bold;letter-spacing:-.76px;">maniya salehi</div><div class="a t fa" dir="rtl" style="right:22.5px;top:468.5px;line-height:20px;font-size:12.5px;color:#fff;transform:scaleX(0.92);transform-origin:right center;">دختر خاله ها</div><svg class="a" style="left:1183.7px;top:471.2px" width="14.6" height="14.6" viewBox="0 0 36 36"><circle cx="18" cy="18" r="16.5" fill="#ffcc4d" stroke="#2b2b2b" stroke-width="2.6"/><path d="M9.5 19.5c1.2 5.2 4.6 8.3 8.5 8.3s7.3-3.1 8.5-8.3c-5.5 1.3-11.5 1.3-17 0z" fill="#5d4037"/><path d="M8 14.5c1.5-2.3 4.5-2.3 6 0M22 14.5c1.5-2.3 4.5-2.3 6 0" fill="none" stroke="#5d4037" stroke-width="2"/><path d="M3.5 18.5c0 3.3 1.8 5 4.2 5s3.3-2.5 1.8-5.5c-2 .9-4 .9-6 .5zM32.5 18.5c0 3.3-1.8 5-4.2 5s-3.3-2.5-1.8-5.5c2 .9 4 .9 6 .5z" fill="#5dadec"/></svg><div class="a" style="left:1124px;top:499.3px;width:138px;height:52.5px;background:#7f7f84;border-radius:2px;box-shadow:0 0 0 .5px #8b8b90,1.2px 1.2px 1.5px rgba(20,20,24,.65)"></div><div class="a t" style="right:22.5px;top:502.5px;line-height:20px;font-size:12px;color:#fff;font-weight:bold;letter-spacing:-.76px;">maryam.yaghoobzadeh</div><svg class="a" style="left:1129.7px;top:529.7px" width="14.6" height="14.6" viewBox="0 0 36 36"><circle cx="18" cy="18" r="16.5" fill="#ffcc4d" stroke="#2b2b2b" stroke-width="2.6"/><path d="M9.5 19.5c1.2 5.2 4.6 8.3 8.5 8.3s7.3-3.1 8.5-8.3c-5.5 1.3-11.5 1.3-17 0z" fill="#5d4037"/><path d="M8 14.5c1.5-2.3 4.5-2.3 6 0M22 14.5c1.5-2.3 4.5-2.3 6 0" fill="none" stroke="#5d4037" stroke-width="2"/><path d="M3.5 18.5c0 3.3 1.8 5 4.2 5s3.3-2.5 1.8-5.5c-2 .9-4 .9-6 .5zM32.5 18.5c0 3.3-1.8 5-4.2 5s-3.3-2.5-1.8-5.5c2 .9 4 .9 6 .5z" fill="#5dadec"/></svg><svg class="a" style="left:1145.7px;top:529.7px" width="14.6" height="14.6" viewBox="0 0 36 36"><circle cx="18" cy="18" r="16.5" fill="#ffcc4d" stroke="#2b2b2b" stroke-width="2.6"/><path d="M9.5 19.5c1.2 5.2 4.6 8.3 8.5 8.3s7.3-3.1 8.5-8.3c-5.5 1.3-11.5 1.3-17 0z" fill="#5d4037"/><path d="M8 14.5c1.5-2.3 4.5-2.3 6 0M22 14.5c1.5-2.3 4.5-2.3 6 0" fill="none" stroke="#5d4037" stroke-width="2"/><path d="M3.5 18.5c0 3.3 1.8 5 4.2 5s3.3-2.5 1.8-5.5c-2 .9-4 .9-6 .5zM32.5 18.5c0 3.3-1.8 5-4.2 5s-3.3-2.5-1.8-5.5c2 .9 4 .9 6 .5z" fill="#5dadec"/></svg><div class="a" style="left:1124px;top:557.5px;width:138px;height:52.3px;background:#7f7f84;border-radius:2px;box-shadow:0 0 0 .5px #8b8b90,1.2px 1.2px 1.5px rgba(20,20,24,.65)"></div><div class="a t" style="right:22.5px;top:560.5px;line-height:20px;font-size:12px;color:#fff;font-weight:bold;letter-spacing:-.74px;">mohadeseh jahanbani</div><div class="a t fa" dir="rtl" style="right:22px;top:585.5px;line-height:20px;font-size:12.5px;color:#fff;transform:scaleX(0.91);transform-origin:right center;">'۶ مگه نمیشه ۲۱۶؟</div><div class="a" style="left:967.5px;top:617px;width:298px;height:31.5px;background:#85858a"></div><div class="a" style="left:968.5px;top:618px;width:296px;height:29.5px;background:#323539"></div><svg class="a" style="left:970.5px;top:623px" width="19" height="19" viewBox="0 0 24 24"><path fill="#fff" d="M21.99 21L1 12 21.99 3 22 10 7 12l15 2z"/></svg><svg class="a" style="left:991.5px;top:623px" width="19" height="19" viewBox="0 0 24 24"><path fill="#fff" d="M11.99 2C6.47 2 2 6.48 2 12s4.47 10 9.99 10C17.52 22 22 17.52 22 12S17.52 2 11.99 2zM12 20c-4.42 0-8-3.58-8-8s3.58-8 8-8 8 3.58 8 8-3.58 8-8 8zm3.5-9c.83 0 1.5-.67 1.5-1.5S16.33 8 15.5 8 14 8.67 14 9.5s.67 1.5 1.5 1.5zm-7 0c.83 0 1.5-.67 1.5-1.5S9.33 8 8.5 8 7 8.67 7 9.5 7.67 11 8.5 11zm3.5 6.5c2.33 0 4.31-1.46 5.11-3.5H6.89c.8 2.04 2.78 3.5 5.11 3.5z"/></svg><div class="a t fa" dir="rtl" style="right:21px;top:622.5px;line-height:20px;font-size:12.5px;color:#a6a6aa;transform:scaleX(0.89);transform-origin:right center;">پیام خود را وارد کنید</div><div class="a t fa" style="left:20.5px;top:661px;line-height:20px;font-size:12px;color:#fff;"><span style="display:inline-block;transform:scaleX(.92);transform-origin:left center">اسکای‌روم</span></div><div class="a t" style="left:67.7px;top:658.7px;line-height:20px;font-size:9.5px;color:#fff;font-weight:bold;">™</div><div class="a t" style="left:9.3px;top:661.5px;line-height:20px;font-size:13.5px;color:#fff;">©</div><div class="a" style="left:0px;top:686px;width:1280px;height:34px;background:#fff"></div><div class="a" style="left:0px;top:718px;width:1280px;height:2px;background:#111"></div><div class="a" style="left:0px;top:686px;width:100px;height:32px;background:#c6c6c6"></div><div class="a" style="left:100px;top:686px;width:118px;height:32px;background:#fdfdfd;box-shadow:inset -1px 0 0 #ececec"></div><div class="a t" style="left:14px;top:687px;line-height:20px;font-size:13.5px;color:#f4f4f4;font-weight:bold;letter-spacing:.15px;">20 / 2:16 PI</div><div class="a" style="left:19.5px;top:676.2px;width:380px;height:26px;overflow:hidden"><div class="a t" style="left:0;top:-8.1px;line-height:40px;font-size:40px;font-weight:bold;color:rgba(255,255,255,.42);transform:scaleX(.882);transform-origin:left center">aparat.com/kavoos71</div></div><div class="a" style="left:412px;top:686px;width:460.5px;height:29.5px;background:linear-gradient(#cbcbcb,#c3c3c3);border-radius:0 0 7px 7px;box-shadow:inset 0 -1.5px 0 #9b9b9b,inset 1px 0 0 #adadad,inset -1px 0 0 #adadad;overflow:hidden"><div class="a" style="left:8px;top:-6px;width:27px;height:27px;border-radius:50%;background:#f4f4f4"></div><svg class="a" style="left:11px;top:-2px" width="22" height="22" viewBox="0 0 22 22"><path d="M4 17L17 2l3 2.5L7 19.5z" fill="#c62828"/><path d="M4 17l-.8 3.5L7 19.5z" fill="#333"/><path d="M8 12.5L18.5 1" stroke="#fff" stroke-width="1"/><path d="M5 21c3-2 6-2 8-1.5s2-1 0-1.5" stroke="#444" stroke-width="1" fill="none"/></svg><svg class="a" style="left:45px;top:1px" width="22" height="18" viewBox="0 0 22 18"><path d="M1 11L10 2l8 5-9 9z" fill="#f48fb1"/><path d="M10 2l3-2 8 4.5-3 2.5z" fill="#5c8fe0"/><path d="M1 11l8 5v1.5l-8-5z" fill="#e27aa0"/></svg><svg class="a" style="left:80px;top:-1px" width="22" height="20" viewBox="0 0 22 20"><path d="M3 15.5L17 0l3.5 3L7 18.5z" fill="#f5d30a"/><path d="M5 13.5L18.5 .5" stroke="#222" stroke-width="1.6"/><path d="M3 15.5l-1.5 4L7 18.5z" fill="#8a6a3a"/><path d="M6 19.5h9l2-4-5 1.5z" fill="#f0b429"/></svg><svg class="a" style="left:121px;top:-1.5px" width="11" height="17" viewBox="0 0 12 18"><path d="M1 1l9.5 9.5H6.3l2.6 5.5-2.3 1.1L4 11.5 1 14.5z" fill="#1f2a55" stroke="#3a3f6a" stroke-width=".6"/></svg><svg class="a" style="left:148px;top:0" width="24" height="20" viewBox="0 0 24 20"><path d="M3 1.5c3 1.5 6 4.5 8 7l5-1c3 0 5 3 5 6.5 0 3-2 5-5 5-4 0-6-2-7.5-5.5-1-3-3-6-6.5-10.5z" fill="#fbe3cf" stroke="#caa27e" stroke-width=".8"/></svg><svg class="a" style="left:187px;top:-1px" width="22" height="21" viewBox="0 0 22 21"><path d="M3 0c1 2 2 4.5 2.5 7L7 2l2 5.5L11 3l1 5 5-1c2.5 1 3.5 4 3.5 7s-2.5 6-6 6c-4 0-6-2-7.5-5.5C6 12 4 8 2 4z" fill="#fbe3cf" stroke="#caa27e" stroke-width=".8"/></svg><svg class="a" style="left:221.5px;top:-2px" width="24" height="22" viewBox="0 0 24 22"><circle cx="7.5" cy="7.5" r="5.8" fill="#e9e9e9" stroke="#333" stroke-width="1.4"/><path d="M5 7.5h5M7.5 5v5" stroke="#333" stroke-width="1.3"/><path d="M12 12l7.5 7" stroke="#333" stroke-width="3.2" stroke-linecap="round"/></svg><svg class="a" style="left:253.5px;top:-2px" width="24" height="22" viewBox="0 0 24 22"><circle cx="7.5" cy="7.5" r="5.8" fill="#e9e9e9" stroke="#333" stroke-width="1.4"/><path d="M5 7.5h5" stroke="#333" stroke-width="1.3"/><path d="M12 12l7.5 7" stroke="#333" stroke-width="3.2" stroke-linecap="round"/></svg><svg class="a" style="left:287px;top:-1px" width="22" height="20" viewBox="0 0 22 20"><path d="M2 18L12 8" stroke="#e53935" stroke-width="1.2"/><path d="M11 9l8-8.5" stroke="#444" stroke-width="3"/><path d="M12.5 7.5l4-4" stroke="#eee" stroke-width="1.6"/></svg><svg class="a" style="left:322px;top:-1px" width="22" height="20" viewBox="0 0 22 20"><path d="M2.5 16L18 0" stroke="#111" stroke-width="1.3"/><circle cx="2.8" cy="16" r="1.8" fill="#111"/></svg><div class="a t" style="left:361px;top:-3px;font-family:'Liberation Serif',serif;font-weight:bold;font-style:italic;font-size:19px;line-height:22px;color:#111">A</div><div class="a" style="left:374.5px;top:-1px;width:1.2px;height:17px;background:#222"></div><div class="a" style="left:396px;top:-3px;width:18px;height:19px;background:#8fd3e8;border-left:1px dashed #2b5fa8;border-right:1px dashed #2b5fa8;box-sizing:border-box"></div><svg class="a" style="left:395px;top:9px" width="20" height="9" viewBox="0 0 20 9"><circle cx="3" cy="3" r="2" fill="none" stroke="#1f3f9f" stroke-width="1.4"/><circle cx="4" cy="6.5" r="2" fill="none" stroke="#1f3f9f" stroke-width="1.4"/><path d="M6 4l13-2M6 5.5l13 1.5" stroke="#9aa3ad" stroke-width="1.3"/></svg><div class="a" style="left:428px;top:3px;width:21px;height:10.5px;background:repeating-linear-gradient(#e8e8e8 0 1.5px,#9a9a9a 1.5px 2.6px);border:1px solid #777;border-bottom:2px solid #666;box-sizing:border-box;border-radius:1px"></div></div><div class="a" style="left:1213px;top:686px;width:64px;height:19.5px;background:linear-gradient(#c9c9c9,#bdbdbd);border-radius:0 0 5px 5px"></div><div class="a t" style="left:1229.8px;top:685.3px;line-height:20px;font-size:13.6px;color:#fff;font-weight:bold;letter-spacing:.2px;">2.0 x</div><svg class="a" style="left:980px;top:706px" width="18" height="14" viewBox="0 0 18 14"><path d="M9 0v14M1 8h16" stroke="#111" stroke-width="1.5"/></svg><div class="a" style="left:720px;top:0px;width:300.4px;height:45.8px;box-shadow:0 0 0 .8px #4a4a4a;overflow:hidden"><div class="a" style="left:0px;top:0px;width:41px;height:47px;background:linear-gradient(#b9b9b9,#8d8d8d);"></div><div class="a" style="left:9.5px;top:11px;width:22px;height:23px;background:#e4002b;border:1.2px solid #f3c9c9;border-radius:2px;box-sizing:border-box"></div><div class="a" style="left:41px;top:0px;width:24px;height:23px;background:linear-gradient(#b9b9b9,#8d8d8d);box-shadow:inset 1px 0 0 #777,inset 0 -1px 0 #777"></div><div class="a" style="left:41px;top:23px;width:24px;height:24px;background:linear-gradient(#b9b9b9,#8d8d8d);box-shadow:inset 1px 0 0 #777"></div><svg class="a" style="left:44px;top:2px" width="18" height="16" viewBox="0 0 18 16"><rect x="1" y="4" width="16" height="11" rx="2" fill="#3b4a78" stroke="#dfe6f3" stroke-width="1"/><rect x="5.5" y="1.5" width="6" height="3.5" rx="1" fill="#3b4a78" stroke="#dfe6f3" stroke-width=".8"/><circle cx="9" cy="9.5" r="3.6" fill="#6d86c6" stroke="#1c2545" stroke-width="1.2"/><circle cx="14.3" cy="6.3" r="1" fill="#f6d34a"/></svg><svg class="a" style="left:45px;top:26px" width="16" height="17" viewBox="0 0 16 17"><rect x="1.5" y="1.5" width="5" height="14" rx="1" fill="#2d7cc4" stroke="#e6eefa" stroke-width="1"/><rect x="9.5" y="1.5" width="5" height="14" rx="1" fill="#2d7cc4" stroke="#e6eefa" stroke-width="1"/></svg><div class="a" style="left:65px;top:0px;width:67px;height:47px;background:#000"></div><div class="a t" style="left:65px;top:9px;width:67px;height:26px;line-height:26px;text-align:center;font-family:'Liberation Mono',monospace;font-size:16px;letter-spacing:-2.3px;color:#041004;-webkit-text-stroke:.5px #98e898;transform:translateY(1.3px) scaleY(1.38) skewX(-6deg)">00:39:09</div><div class="a" style="left:132px;top:0px;width:95px;height:23px;background:linear-gradient(#9c9c9c,#7d7d7d);box-shadow:inset 0 -1px 0 #666"></div><div class="a t" style="left:132px;top:1px;width:95px;line-height:21px;text-align:center;font-family:'Liberation Serif',serif;font-weight:bold;font-size:12.3px;color:#fff;text-shadow:0 0 1.5px #000,0 0 1.5px #000,0 0 1px #000">1914 × 1077</div><div class="a" style="left:227px;top:0px;width:24.7px;height:23px;background:linear-gradient(#f4f4f4,#c9c9c9);box-shadow:inset 1px 0 0 #777,inset 0 -1px 0 #777"></div><div class="a" style="left:233px;top:4.5px;width:13px;height:12px;border:1.7px solid #2fae3a;box-sizing:border-box;background:#e6efe6"></div><div class="a" style="left:251.7px;top:0px;width:24.7px;height:23px;background:linear-gradient(#b9b9b9,#8d8d8d);box-shadow:inset 1px 0 0 #777,inset 0 -1px 0 #777"></div><div class="a" style="left:257.7px;top:11px;width:13px;height:3.5px;background:#3a86cf;border-radius:1px;border:.5px solid #dbe6f5"></div><div class="a" style="left:276.4px;top:0px;width:24.7px;height:23px;background:linear-gradient(#b9b9b9,#8d8d8d);box-shadow:inset 1px 0 0 #777,inset 0 -1px 0 #777"></div><svg class="a" style="left:282.4px;top:4.5px" width="13" height="13" viewBox="0 0 13 13"><path d="M2 2l9 9M11 2l-9 9" stroke="#d0021b" stroke-width="2.3" fill="none"/></svg><div class="a" style="left:132px;top:23px;width:24.142857142857142px;height:24px;background:linear-gradient(#f4f4f4,#c9c9c9);box-shadow:inset 1px 0 0 #888"></div><svg class="a" style="left:135.1px;top:26px" width="18" height="18" viewBox="0 0 18 18"><path d="M2 6.5h3.5L10 3v12l-4.5-3.5H2z" fill="#d7e6f5" stroke="#2c6fb0" stroke-width="1.2"/><path d="M12 6a4.5 4.5 0 0 1 0 6M14 4a7.5 7.5 0 0 1 0 10" stroke="#2c6fb0" stroke-width="1.3" fill="none"/></svg><div class="a" style="left:156.14285714285714px;top:23px;width:24.142857142857142px;height:24px;background:linear-gradient(#f4f4f4,#c9c9c9);box-shadow:inset 1px 0 0 #888"></div><svg class="a" style="left:160.2px;top:25px" width="16" height="20" viewBox="0 0 16 20"><rect x="5" y="1" width="6" height="11" rx="3" fill="#8fb8df" stroke="#2c6fb0" stroke-width="1"/><path d="M2.5 9.5a5.5 5.5 0 0 0 11 0M8 15v3M5 18.5h6" stroke="#2c6fb0" stroke-width="1.2" fill="none"/></svg><div class="a" style="left:180.28571428571428px;top:23px;width:24.142857142857142px;height:24px;background:linear-gradient(#b9b9b9,#8d8d8d);box-shadow:inset 1px 0 0 #888"></div><svg class="a" style="left:183.4px;top:25px" width="18" height="20" viewBox="0 0 18 20"><circle cx="9" cy="9" r="7" fill="#3f6f9f" stroke="#1f3f5f" stroke-width="1"/><circle cx="9" cy="9" r="3.8" fill="#a8c8e8" stroke="#e8f0f8" stroke-width="1"/><path d="M3.5 18.5c1-2.5 10-2.5 11 0z" fill="#3f6f9f"/></svg><div class="a" style="left:204.42857142857144px;top:23px;width:24.142857142857142px;height:24px;background:linear-gradient(#f4f4f4,#c9c9c9);box-shadow:inset 1px 0 0 #888"></div><svg class="a" style="left:209.5px;top:26px" width="14" height="19" viewBox="0 0 14 19"><path d="M2 1.5v13.5l3.3-3 2.4 5.3 2.2-1-2.4-5.2H12z" fill="#fff" stroke="#000" stroke-width="1.4" stroke-linejoin="round"/></svg><div class="a" style="left:228.57142857142856px;top:23px;width:24.142857142857142px;height:24px;background:linear-gradient(#b9b9b9,#8d8d8d);box-shadow:inset 1px 0 0 #888"></div><svg class="a" style="left:231.6px;top:26px" width="18" height="18" viewBox="0 0 18 18"><path d="M3 12l9-9 3.5 3.5-9 9L2 16.5z" fill="#2f8fd8" stroke="#1d5f9c" stroke-width="1"/><path d="M2 16.5l1-4.5 3.5 3.5z" fill="#f2d6a2"/></svg><div class="a" style="left:252.71428571428572px;top:23px;width:24.142857142857142px;height:24px;background:linear-gradient(#b9b9b9,#8d8d8d);box-shadow:inset 1px 0 0 #888"></div><svg class="a" style="left:255.8px;top:27px" width="18" height="16" viewBox="0 0 18 16"><path d="M1 2h6l1.5 2H17v11H1z" fill="#f2c230" stroke="#c8960c" stroke-width=".8"/><path d="M1 15l2.5-8H18l-2 8z" fill="#fbe36a" stroke="#c8960c" stroke-width=".6"/></svg><div class="a" style="left:276.8571428571429px;top:23px;width:24.142857142857142px;height:24px;background:linear-gradient(#b9b9b9,#8d8d8d);box-shadow:inset 1px 0 0 #888"></div><svg class="a" style="left:279.9px;top:26px" width="18" height="18" viewBox="0 0 18 18"><circle cx="9" cy="9" r="5.2" fill="none" stroke="#2f4f6f" stroke-width="3.4" stroke-dasharray="2.7 1.4"/><circle cx="9" cy="9" r="4.3" fill="#3f6587"/><circle cx="9" cy="9" r="2" fill="#9a9a9a"/></svg></div></div></body></html>
